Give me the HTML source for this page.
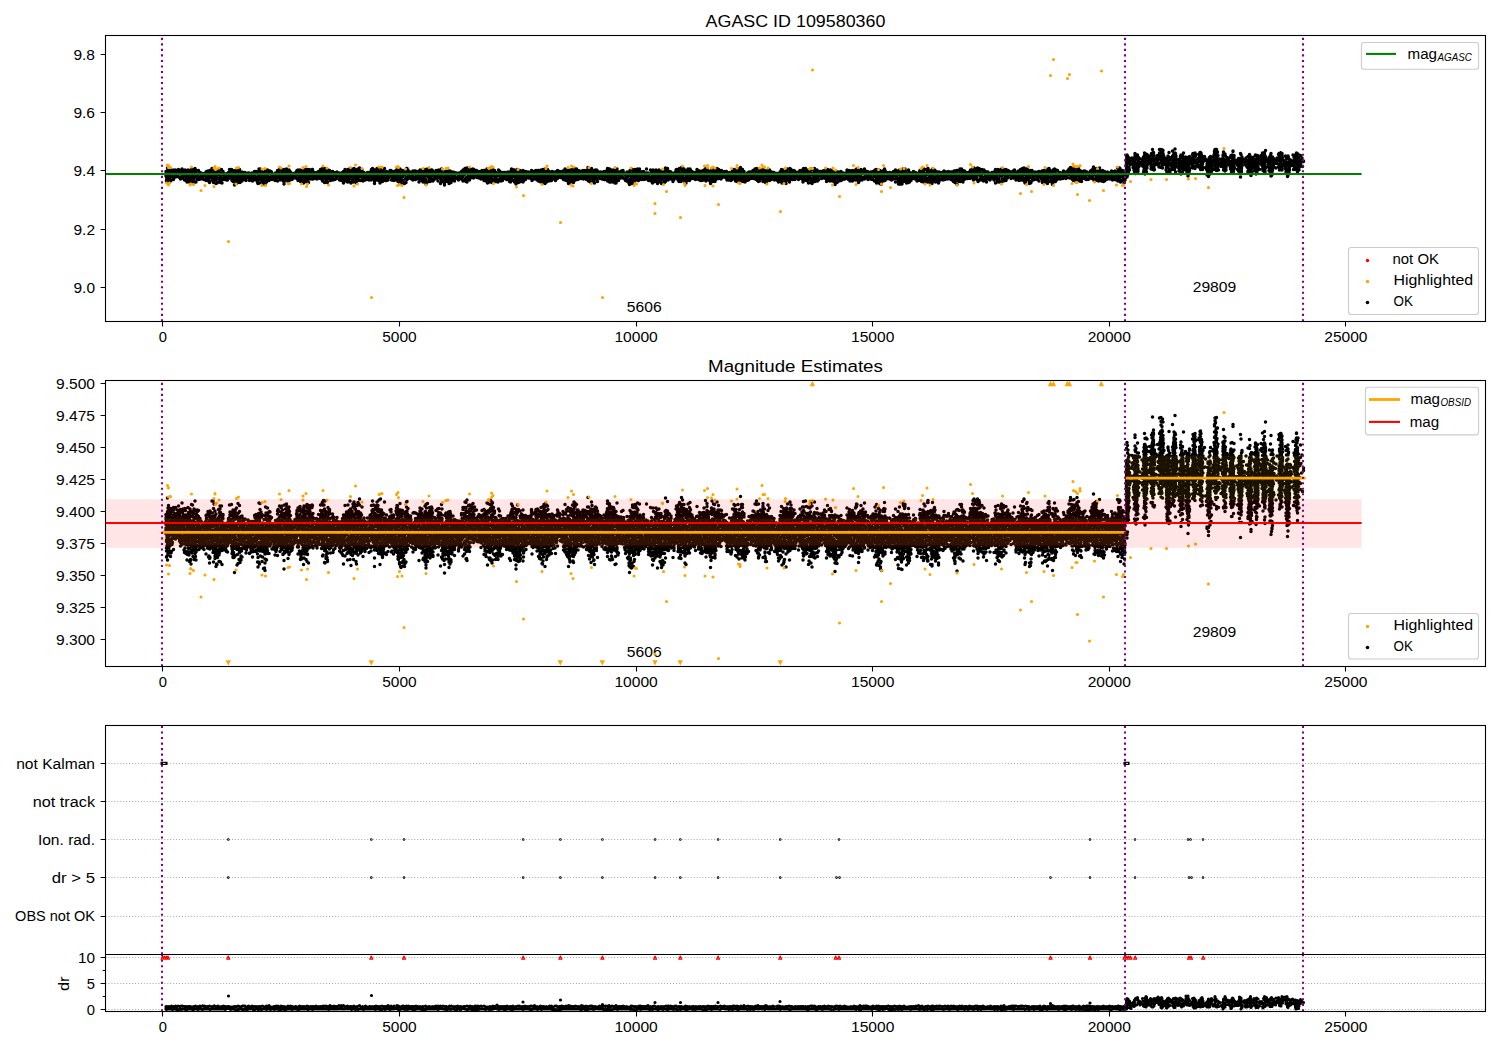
<!DOCTYPE html><html><head><meta charset="utf-8"><style>html,body{margin:0;padding:0;background:#fff;overflow:hidden}svg{display:block}</style></head><body><svg width="1500" height="1050" viewBox="0 0 1500 1050" font-family="Liberation Sans, sans-serif"><rect width="1500" height="1050" fill="#fff"/>
<text x="795.5" y="27" font-size="16.67" text-anchor="middle" textLength="179.9" lengthAdjust="spacingAndGlyphs">AGASC ID 109580360</text>
<text x="644.2" y="311.8" font-size="13.89" text-anchor="middle" textLength="34.8" lengthAdjust="spacingAndGlyphs">5606</text>
<text x="1214.5" y="291.7" font-size="13.89" text-anchor="middle" textLength="43.6" lengthAdjust="spacingAndGlyphs">29809</text>
<clipPath id="c1"><rect x="105.5" y="35.4" width="1380" height="286"/></clipPath>
<g clip-path="url(#c1)">
<path transform="scale(.5)" d="M332 343h0m0 4h0m0 3h0m0 2h0m1 3h0m0 5h0m0 2h0m1-15h0m1-11h0m0 6h0m0 9h0m0 13h0m1-24h0m1-1h0m0 5h0m1 9h0m0 5h0m2-2h0m1-13h0m0 4h0m0 3h0m0 12h0m1-22h0m0 21h0m3-13h0m0 6h0m1-13h0m1-1h0m0 3h0m0 16h0m3-10h0m1-9h0m0 14h0m2-8h0m0 3h0m2-8h0m0 12h0m2-14h0m1 6h0m0 3h0m1 7h0m2-14h0m0 17h0m1-11h0m1 10h0m1-19h0m0 13h0m1-9h0m0 14h0m1-15h0m2 5h0m1 6h0m0 8h0m1-20h0m1 1h0m1 9h0m0 7h0m0 4h0m1-17h0m1 9h0m0 11h0m1-8h0m1-16h0m1 5h0m1 2h0m0 14h0m1-11h0m0 14h0m1-23h0m1 13h0m0 3h0m1-10h0m0 19h0m1-27h0m0 5h0m0 15h0m1-7h0m0 3h0m1-16h0m0 8h0m1 15h0m1-20h0m0 16h0m1-5h0m0 11h0m2-27h0m0 10h0m0 17h0m1-21h0m0 4h0m1 4h0m0 3h0m0 10h0m2-23h0m0 18h0m2-10h0m1-8h0m0 6h0m1 8h0m0 4h0m2-14h0m1 13h0m1-12h0m0 4h0m2 3h0m1 5h0m1-11h0m0 11h0m1-7h0m0 7h0m1 1h0m2-12h0m0 4h0m2-7h0m0 12h0m0 5h0m1-18h0m2 5h0m1-6h0m0 12h0m1 3h0m0 5h0m1-20h0m1 3h0m0 5h0m0 15h0m1-24h0m0 22h0m2-17h0m0 9h0m2-18h0m0 14h0m0 7h0m1-16h0m1-5h0m0 8h0m0 15h0m1-7h0m0 12h0m1-27h0m1 10h0m0 10h0m1-16h0m2 1h0m0 5h0m0 3h0m0 4h0m0 6h0m0 6h0m2-14h0m0 13h0m3-25h0m0 4h0m0 12h0m1-8h0m0 15h0m1-22h0m0 17h0m0 5h0m1-25h0m1 13h0m0 13h0m1-18h0m1-8h0m0 17h0m1 3h0m0 7h0m2-23h0m0 1h0m0 5h0m0 10h0m2-5h0m2 5h0m1-11h0m0 11h0m1-11h0m1 0h0m0 12h0m1-6h0m1 6h0m1-14h0m1-1h0m0 5h0m2-11h0m0 17h0m1-13h0m0 7h0m1-2h0m2-9h0m0 18h0m1-3h0m0 5h0m0 2h0m1-11h0m1-9h0m0 2h0m0 20h0m1-21h0m1 2h0m0 11h0m0 4h0m0 4h0m1-15h0m0 4h0m0 18h0m1-8h0m1-21h0m1 14h0m1-15h0m0 4h0m1 15h0m0 7h0m1-17h0m0 8h0m0 4h0m1-23h0m0 27h0m1-12h0m2-14h0m0 3h0m0 2h0m0 16h0m1-10h0m0 15h0m1-10h0m0 4h0m1-8h0m2-7h0m0 18h0m2-15h0m0 6h0m1 5h0m1-13h0m1 14h0m1-14h0m0 6h0m2 4h0m0 6h0m2-5h0m1-6h0m1-4h0m1 5h0m1-5h0m1 15h0m1-8h0m0 4h0m2-8h0m2-3h0m0 12h0m1-6h0m0 10h0m1-16h0m0 10h0m1 4h0m1-7h0m1-10h0m0 7h0m1 7h0m2-14h0m0 17h0m1-13h0m1 8h0m0 2h0m1 8h0m1-14h0m0 16h0m1-24h0m1-5h0m0 21h0m1-14h0m0 8h0m0 13h0m1-28h0m1 16h0m1-11h0m0 7h0m1 10h0m1-17h0m0 9h0m0 7h0m0 5h0m1-9h0m1-8h0m1 21h0m1-10h0m2-14h0m0 6h0m0 13h0m0 6h0m1-29h0m0 14h0m2 10h0m1-6h0m1-18h0m0 3h0m0 4h0m0 6h0m3-5h0m0 7h0m0 6h0m1-19h0m1 0h0m0 13h0m3-11h0m1 7h0m0 1h0m0 7h0m1-4h0m1-7h0m3 8h0m1 5h0m1-15h0m0 6h0m2 7h0m1-11h0m0 7h0m1-14h0m0 21h0m1-21h0m1 6h0m0 2h0m1-7h0m0 13h0m1-16h0m1 10h0m0 4h0m0 7h0m1-14h0m3-7h0m0 18h0m1-16h0m1 4h0m0 6h0m0 4h0m0 6h0m1-14h0m1 17h0m0 4h0m1-29h0m0 18h0m2-12h0m0 7h0m1-3h0m0 11h0m1-22h0m1 18h0m1-13h0m1 9h0m0 11h0m1-17h0m1-6h0m0 21h0m1-19h0m0 7h0m0 9h0m1-12h0m0 6h0m0 8h0m1-16h0m1 8h0m0 6h0m1 1h0m1 0h0m1-7h0m0 6h0m1-11h0m1 9h0m1-9h0m2-1h0m1 5h0m0 5h0m1-5h0m1-8h0m0 2h0m1-4h0m0 1h0m1 7h0m0 9h0m1-18h0m0 17h0m0 4h0m2-9h0m1-9h0m0 17h0m1-20h0m0 6h0m1 17h0m1-22h0m0 15h0m1-4h0m0 11h0m1-18h0m1 15h0m1-13h0m0 9h0m1-16h0m0 11h0m0 15h0m1-27h0m0 2h0m1 20h0m1-16h0m0 5h0m0 1h0m0 4h0m2-16h0m0 24h0m1-5h0m1-19h0m0 6h0m0 20h0m1-4h0m1-11h0m0 3h0m1 12h0m1-26h0m0 19h0m1-14h0m1-1h0m0 9h0m1-6h0m0 12h0m3-19h0m0 19h0m1-19h0m0 10h0m1-6h0m0 10h0m0 5h0m2-13h0m3 7h0m0 5h0m2-12h0m0 3h0m1 10h0m2-2h0m1-13h0m0 6h0m0 3h0m3 5h0m1-18h0m0 2h0m0 11h0m1-7h0m1 13h0m1-20h0m0 9h0m0 5h0m1-15h0m0 25h0m1-5h0m0 5h0m1-25h0m0 6h0m0 2h0m2 8h0m0 12h0m1-28h0m0 5h0m0 9h0m0 14h0m1-19h0m1 12h0m1 3h0m1-19h0m0 14h0m1-5h0m0 13h0m0 1h0m1-25h0m0 12h0m1-6h0m0 11h0m2-16h0m1 6h0m0 2h0m0 7h0m1 5h0m2-12h0m0 4h0m1-6h0m0 10h0m1-14h0m1 12h0m0 5h0m1-8h0m0 7h0m1-14h0m2 4h0m0 10h0m2-14h0m1 9h0m0 3h0m1-13h0m0 12h0m1-10h0m0 4h0m3 2h0m1-6h0m0 14h0m2-3h0m0 3h0m1-9h0m1 10h0m2-16h0m0 6h0m0 10h0m1-6h0m1-12h0m0 23h0m2-18h0m0 8h0m1-17h0m0 12h0m0 11h0m1-17h0m0 14h0m2-9h0m2-6h0m0 6h0m0 4h0m0 10h0m1-25h0m0 20h0m2-18h0m1 7h0m1-11h0m0 14h0m0 6h0m0 7h0m1-20h0m1 5h0m0 4h0m0 13h0m2-25h0m1 12h0m0 9h0m1-24h0m0 8h0m0 13h0m1-7h0m0 12h0m1-27h0m0 21h0m2-19h0m0 2h0m0 5h0m0 2h0m2-2h0m0 8h0m0 10h0m1-3h0m0 5h0m1-23h0m0 9h0m0 5h0m2-19h0m0 20h0m0 3h0m1-10h0m1-7h0m1-8h0m0 3h0m0 7h0m0 8h0m2 7h0m1-18h0m1 6h0m0 3h0m1-12h0m1 7h0m0 10h0m1 5h0m1-12h0m1-5h0m0 11h0m2 4h0m2-10h0m0 4h0m1-5h0m0 10h0m2-14h0m2 6h0m0 5h0m1 4h0m1-11h0m1-5h0m2 16h0m1-21h0m0 15h0m1-6h0m1-11h0m0 5h0m0 16h0m1-13h0m1-6h0m1 14h0m1-2h0m0 8h0m0 4h0m0 4h0m2-27h0m0 4h0m0 9h0m3-16h0m0 20h0m0 3h0m1-13h0m1-5h0m0 10h0m1 9h0m1-25h0m0 17h0m1-3h0m0 7h0m1-12h0m0 15h0m0 6h0m1-30h0m0 6h0m1 6h0m1-7h0m0 12h0m1 4h0m1 5h0m0 1h0m1-20h0m1 2h0m0 7h0m0 9h0m1-18h0m1-6h0m0 18h0m1 2h0m1 4h0m1-12h0m1-6h0m0 18h0m1-15h0m0 4h0m1 5h0m1 5h0m2-10h0m0 5h0m1-11h0m1-3h0m1 11h0m1-11h0m0 5h0m1 14h0m1-11h0m1 8h0m1-5h0m1-9h0m0 18h0m1-13h0m2 6h0m0 5h0m1 1h0m1-19h0m0 6h0m0 5h0m1-12h0m1-1h0m0 21h0m1-21h0m0 11h0m0 5h0m1-8h0m0 16h0m1-17h0m1-4h0m0 11h0m1 6h0m0 6h0m1-27h0m0 14h0m1 7h0m0 3h0m0 5h0m1 0h0m1-23h0m0 4h0m0 7h0m2-14h0m0 6h0m0 7h0m1-4h0m0 11h0m0 6h0m3 0h0m1-23h0m0 5h0m1-7h0m0 16h0m1-4h0m0 11h0m1-28h0m1 0h0m0 8h0m0 14h0m1-15h0m1-4h0m1 9h0m0 3h0m0 5h0m4-13h0m0 6h0m0 2h0m2 6h0m2-10h0m0 5h0m1-11h0m0 18h0m1-5h0m1-13h0m0 12h0m2-7h0m0 7h0m1-12h0m0 17h0m2-10h0m0 9h0m2-15h0m0 14h0m1-4h0m2-9h0m0 20h0m1-6h0m1-18h0m0 8h0m0 4h0m2 0h0m0 6h0m1-16h0m1-2h0m0 21h0m1-13h0m1 3h0m0 5h0m0 4h0m0 4h0m2-19h0m1 11h0m1-17h0m0 4h0m0 21h0m1-12h0m0 7h0m1-20h0m0 10h0m0 19h0m1-25h0m2-5h0m0 26h0m1-16h0m0 6h0m2-8h0m0 14h0m1-20h0m0 2h0m1 8h0m0 13h0m1-7h0m1 6h0m1-22h0m0 6h0m1-6h0m1 2h0m0 9h0m1 7h0m0 4h0m2-12h0m1-6h0m1 10h0m0 4h0m2-17h0m0 7h0m2-2h0m0 10h0m1-15h0m0 9h0m0 2h0m1 10h0m2-22h0m1 5h0m0 10h0m2-6h0m0 8h0m0 10h0m2-29h0m0 22h0m0 3h0m1-22h0m0 2h0m0 3h0m0 5h0m1 12h0m1-9h0m3-7h0m0 10h0m0 9h0m0 4h0m1-10h0m1-17h0m0 7h0m0 13h0m1-21h0m0 10h0m1-5h0m0 9h0m1-12h0m1 8h0m0 8h0m1 3h0m1-21h0m0 11h0m1 10h0m0 4h0m1-9h0m1-16h0m0 5h0m0 19h0m1-23h0m0 2h0m0 11h0m1 8h0m0 1h0m1-15h0m1 9h0m0 2h0m2-17h0m0 4h0m1 5h0m1 2h0m1-10h0m0 5h0m0 12h0m2-7h0m0 2h0m2-11h0m1 11h0m1-1h0m1-6h0m1 10h0m1-14h0m0 12h0m1-12h0m0 9h0m1-6h0m1 4h0m1-2h0m1-8h0m0 15h0m2-12h0m1-6h0m0 13h0m0 9h0m1-15h0m2-3h0m0 5h0m0 12h0m1-24h0m0 21h0m1-21h0m1 26h0m1-21h0m0 5h0m0 8h0m1-19h0m0 28h0m1-10h0m0 5h0m1-11h0m2-6h0m1-3h0m0 9h0m0 8h0m0 4h0m1-8h0m1 4h0m2-17h0m0 6h0m1 6h0m1-8h0m0 4h0m1-9h0m1 18h0m2-16h0m0 10h0m1-5h0m0 7h0m2 2h0m1-13h0m1 5h0m0 7h0m0 2h0m3-2h0m1-10h0m0 5h0m0 8h0m3-1h0m1 3h0m1-14h0m0 6h0m1-9h0m1 12h0m1-5h0m1 9h0m1-16h0m0 11h0m0 9h0m1-20h0m0 5h0m1 10h0m1 5h0m1 1h0m1-20h0m0 6h0m1-10h0m0 13h0m0 7h0m1 8h0m1-28h0m0 17h0m1-14h0m0 4h0m1 15h0m1 4h0m1-16h0m0 4h0m1-15h0m1 21h0m0 6h0m1-24h0m0 3h0m0 15h0m1-21h0m0 12h0m0 16h0m1-27h0m0 14h0m1-9h0m1-3h0m0 21h0m1-12h0m0 3h0m1-11h0m0 17h0m2-12h0m0 17h0m1-18h0m0 11h0m1 5h0m0 2h0m1-13h0m0 2h0m2 12h0m1-24h0m0 7h0m1 5h0m0 7h0m1-17h0m2 2h0m0 12h0m1 6h0m1-13h0m1 6h0m1 6h0m1-16h0m1 7h0m1-7h0m0 12h0m1-12h0m0 6h0m3-6h0m1 8h0m0 6h0m1 0h0m1-11h0m1-4h0m0 13h0m2-3h0m1-6h0m0 15h0m2 1h0m1-22h0m0 16h0m1-20h0m0 14h0m1 3h0m1-16h0m0 6h0m0 5h0m1 11h0m2-16h0m1-5h0m0 14h0m0 10h0m2-14h0m0 8h0m1-17h0m0 2h0m0 23h0m0 2h0m1-25h0m0 12h0m0 5h0m2-21h0m1 7h0m0 4h0m0 6h0m0 8h0m1 1h0m1-24h0m0 6h0m0 11h0m1-6h0m0 12h0m1-23h0m1 22h0m1-8h0m0 3h0m2-12h0m0 6h0m2-11h0m0 23h0m1-21h0m0 17h0m0 2h0m1-7h0m1-4h0m2-8h0m0 3h0m0 4h0m0 9h0m3-15h0m0 9h0m1-6h0m1-3h0m1 1h0m0 11h0m1-5h0m0 5h0m2-7h0m0 7h0m1-3h0m1-10h0m1-2h0m1 20h0m1-11h0m0 8h0m1-15h0m0 8h0m0 7h0m1-10h0m1 6h0m0 3h0m1 1h0m1-16h0m1 5h0m1-6h0m0 11h0m1-8h0m1 7h0m0 4h0m0 5h0m1-19h0m2 0h0m0 6h0m0 15h0m2-13h0m0 9h0m0 5h0m1-11h0m0 11h0m2-23h0m0 5h0m0 7h0m1-7h0m0 13h0m1 7h0m1-14h0m0 15h0m1-27h0m0 7h0m0 11h0m1 6h0m1-24h0m2 5h0m0 6h0m0 5h0m0 12h0m1-29h0m1 8h0m0 14h0m1-21h0m0 13h0m0 12h0m2-25h0m0 15h0m1-13h0m0 7h0m0 12h0m1-7h0m1-10h0m0 18h0m0 1h0m2-6h0m1-6h0m0 11h0m1-9h0m0 9h0m1-15h0m0 15h0m1-18h0m0 4h0m2 7h0m0 4h0m1-11h0m1-3h0m0 5h0m1 3h0m1 3h0m1 6h0m1-7h0m1-11h0m0 4h0m1 0h0m1-6h0m0 16h0m2-5h0m2-9h0m0 2h0m1-2h0m1 12h0m1-4h0m1-3h0m2 3h0m0 5h0m1-14h0m1 17h0m1-11h0m1-2h0m0 9h0m1-17h0m0 22h0m1-11h0m2-8h0m0 6h0m0 2h0m0 12h0m1-6h0m1-7h0m0 14h0m1-22h0m0 4h0m1 10h0m0 5h0m0 3h0m0 5h0m2-17h0m1-7h0m0 21h0m0 1h0m1-25h0m0 7h0m0 9h0m1 1h0m0 2h0m2-8h0m1-12h0m0 8h0m1 15h0m0 2h0m1-21h0m0 1h0m0 14h0m0 7h0m1-28h0m0 18h0m1 6h0m1-23h0m0 11h0m1-5h0m0 8h0m0 8h0m2-22h0m0 12h0m1 7h0m1-12h0m1-4h0m0 14h0m0 4h0m2-8h0m1-9h0m0 5h0m1 10h0m2-5h0m1-6h0m0 11h0m1-15h0m2-1h0m0 13h0m1-4h0m0 8h0m2-12h0m1-5h0m0 9h0m0 5h0m2-12h0m1 16h0m2-19h0m0 8h0m0 6h0m0 1h0m1-20h0m0 11h0m0 4h0m1-10h0m0 22h0m2-8h0m0 9h0m1-22h0m0 17h0m2-12h0m0 3h0m0 16h0m1-28h0m0 21h0m1-14h0m0 11h0m2-6h0m1-3h0m0 14h0m0 4h0m1-23h0m0 13h0m0 7h0m1 5h0m1-11h0m1-15h0m0 4h0m0 8h0m1-4h0m1-8h0m0 18h0m2-16h0m0 5h0m0 16h0m1-14h0m1 6h0m2 2h0m1-13h0m2 0h0m0 4h0m0 3h0m2-6h0m0 13h0m1-5h0m1-3h0m1-3h0m1-4h0m0 16h0m2 0h0m1-11h0m0 6h0m0 1h0m2-13h0m1 0h0m0 5h0m0 7h0m1-17h0m0 25h0m1-24h0m1 19h0m1-19h0m0 12h0m1-12h0m0 6h0m0 20h0m2-14h0m0 4h0m0 5h0m0 5h0m2-24h0m0 7h0m1 12h0m1-17h0m0 22h0m1-9h0m1-15h0m0 6h0m0 4h0m1-10h0m0 19h0m2 7h0m1-4h0m1-20h0m0 11h0m0 3h0m0 10h0m1-19h0m1-9h0m0 6h0m0 5h0m2-4h0m0 16h0m1-17h0m0 12h0m0 5h0m1-15h0m1 7h0m1-9h0m0 12h0m2-9h0m0 9h0m1-14h0m1 7h0m0 4h0m2-12h0m0 15h0m1-11h0m3 4h0m0 6h0m0 4h0m1-10h0m0 12h0m2-10h0m0 4h0m1-11h0m1 19h0m1-10h0m0 7h0m1-9h0m1-5h0m0 19h0m0 1h0m1 3h0m1-28h0m0 18h0m2-13h0m0 2h0m0 5h0m0 6h0m0 1h0m1 7h0m1-2h0m1-26h0m1 1h0m0 15h0m1-13h0m0 25h0m1-21h0m0 4h0m0 9h0m0 3h0m1 1h0m1-24h0m1 14h0m2-10h0m0 4h0m0 6h0m1 5h0m1-20h0m0 3h0m0 19h0m1 1h0m1 0h0m1-16h0m0 6h0m1-13h0m0 16h0m1-11h0m0 16h0m2-10h0m1-5h0m0 15h0m1-15h0m0 12h0m2-8h0m0 4h0m1-9h0m1 16h0m2-8h0m1 3h0m1-8h0m0 12h0m1-20h0m1 8h0m1 6h0m1-6h0m1 12h0m0 3h0m1-10h0m0 3h0m3-14h0m0 16h0m1 6h0m1-18h0m0 2h0m2 6h0m0 3h0m0 6h0m0 5h0m1-26h0m0 8h0m1-6h0m0 22h0m1-8h0m2-6h0m0 13h0m1-18h0m0 13h0m1-18h0m2 1h0m0 10h0m0 3h0m0 7h0m1 6h0m1-21h0m0 9h0m0 7h0m1-13h0m1-9h0m2 13h0m0 4h0m0 7h0m1-19h0m0 17h0m1-19h0m1 5h0m0 19h0m1-17h0m0 9h0m1-15h0m0 11h0m1 11h0m1-20h0m2 6h0m0 3h0m0 6h0m0 4h0m1-23h0m0 5h0m1-11h0m0 27h0m1-22h0m2 12h0m0 5h0m1-21h0m0 11h0m0 8h0m1-14h0m0 18h0m1-1h0m1-7h0m1-9h0m0 4h0m2 5h0m0 2h0m1-10h0m0 14h0m3-8h0m0 8h0m1 5h0m1-16h0m1 7h0m0 5h0m1-8h0m1-6h0m1 11h0m1-16h0m1-1h0m1 6h0m0 6h0m1-12h0m1 17h0m0 4h0m1-21h0m0 20h0m1-15h0m0 2h0m0 7h0m0 10h0m1-26h0m0 13h0m3 5h0m0 3h0m0 5h0m1-28h0m0 4h0m1 6h0m1-9h0m0 14h0m1 2h0m0 8h0m1-16h0m0 5h0m1-11h0m0 19h0m2 5h0m0 3h0m1-24h0m0 6h0m1 9h0m0 10h0m1-25h0m0 12h0m1-4h0m0 4h0m0 8h0m1-18h0m0 6h0m1-11h0m0 22h0m2-4h0m1 5h0m1-23h0m0 7h0m0 6h0m0 2h0m1-12h0m0 17h0m2-9h0m1-6h0m0 1h0m1 9h0m1-4h0m0 8h0m1 0h0m2-12h0m1 6h0m1-1h0m0 9h0m1-4h0m1-11h0m1-5h0m2 7h0m1 7h0m0 6h0m1-9h0m1-8h0m0 17h0m2-13h0m0 3h0m0 12h0m1-7h0m2-12h0m0 10h0m0 9h0m1-1h0m1-12h0m0 7h0m1 5h0m1-20h0m1 15h0m1-12h0m0 8h0m1-14h0m0 8h0m1 17h0m1-14h0m0 7h0m0 5h0m1-22h0m0 13h0m2-9h0m1 0h0m0 18h0m1-17h0m0 10h0m0 7h0m1-12h0m1 8h0m0 6h0m1 5h0m1-3h0m1-24h0m0 1h0m1-4h0m0 6h0m0 5h0m0 3h0m0 7h0m1-4h0m0 9h0m2-25h0m1 3h0m0 10h0m1-12h0m0 6h0m0 13h0m1 5h0m1-13h0m0 5h0m1-12h0m0 16h0m2-22h0m0 8h0m0 5h0m0 3h0m3-14h0m0 18h0m1-12h0m1 4h0m0 5h0m1-13h0m2 4h0m0 13h0m1-17h0m0 9h0m1 5h0m3-11h0m1 5h0m0 5h0m1-11h0m0 1h0m2 11h0m1-7h0m0 4h0m1-9h0m0 14h0m1-1h0m0 4h0m2-9h0m1 9h0m1-12h0m1-3h0m0 4h0m0 11h0m1-6h0m2 7h0m2-16h0m0 8h0m0 6h0m1-18h0m0 8h0m2 4h0m1-14h0m0 7h0m0 11h0m2-18h0m0 3h0m1 8h0m0 12h0m1-20h0m1 6h0m0 8h0m1 7h0m1-4h0m1-21h0m0 15h0m2-9h0m0 19h0m1-22h0m1 9h0m0 6h0m1-21h0m0 24h0m1-14h0m1-7h0m1 14h0m0 11h0m1-24h0m1 10h0m0 8h0m1-14h0m0 20h0m1-20h0m0 5h0m0 12h0m2-6h0m0 10h0m1-2h0m1-6h0m1-8h0m1 11h0m0 2h0m1-15h0m1 5h0m1 4h0m0 5h0m1-16h0m3 0h0m0 5h0m1 8h0m1-5h0m2 4h0m1-15h0m0 6h0m1 5h0m0 5h0m1-9h0m2-10h0m1 15h0m0 3h0m1-13h0m0 16h0m1-22h0m1 10h0m1 6h0m0 8h0m2-23h0m0 10h0m0 15h0m1-19h0m0 7h0m0 5h0m1 6h0m2-21h0m0 17h0m2-13h0m0 5h0m0 3h0m3-15h0m0 2h0m0 7h0m0 11h0m0 5h0m1-9h0m1 2h0m1-15h0m1 2h0m0 7h0m0 10h0m1-13h0m0 18h0m2-22h0m0 9h0m0 7h0m0 6h0m2-17h0m1-9h0m0 15h0m1 3h0m0 3h0m1-16h0m1-4h0m0 10h0m0 11h0m2-8h0m2-9h0m0 6h0m0 8h0m0 1h0m1-3h0m2-8h0m1-3h0m0 7h0m1-7h0m1 9h0m0 6h0m3-13h0m0 12h0m1-12h0m0 3h0m1 4h0m1-7h0m0 14h0m2 3h0m1-8h0m1-6h0m0 13h0m1-19h0m1 11h0m0 5h0m1-18h0m1-3h0m0 6h0m0 17h0m1 4h0m1-15h0m1-2h0m0 8h0m1-17h0m0 25h0m1-24h0m0 4h0m0 13h0m0 7h0m2-13h0m2-4h0m0 13h0m0 6h0m1-27h0m0 10h0m0 6h0m1-14h0m1-4h0m0 7h0m1 15h0m1-8h0m1 2h0m1-7h0m0 17h0m1-27h0m0 22h0m1-18h0m0 4h0m0 6h0m1-12h0m0 17h0m3-14h0m0 17h0m1-11h0m1-5h0m0 9h0m0 6h0m1-17h0m1 7h0m1-5h0m0 16h0m2-3h0m1-4h0m1-4h0m1-3h0m2-1h0m0 9h0m0 6h0m2-9h0m1-9h0m0 14h0m1-4h0m1-6h0m0 12h0m2-15h0m1-2h0m1 14h0m0 7h0m0 3h0m1-27h0m0 15h0m0 3h0m1-15h0m0 6h0m0 3h0m2-1h0m1-11h0m0 20h0m1-12h0m0 16h0m1-21h0m0 3h0m0 5h0m0 4h0m1 9h0m1-8h0m1 5h0m1-18h0m0 26h0m1-22h0m1-4h0m0 8h0m0 6h0m0 5h0m1-15h0m1 15h0m1-21h0m0 27h0m2-26h0m0 11h0m0 7h0m0 10h0m2-21h0m0 4h0m0 11h0m2-9h0m0 11h0m1-26h0m0 5h0m0 16h0m1-5h0m0 10h0m1-18h0m3-5h0m0 11h0m0 6h0m1 5h0m1-19h0m0 14h0m1-9h0m0 5h0m0 7h0m3-17h0m1 0h0m0 8h0m2 6h0m1-9h0m2-6h0m0 10h0m2-1h0m0 5h0m1-15h0m1 6h0m1 10h0m1-3h0m1 9h0m1-18h0m0 4h0m0 4h0m1-14h0m1 7h0m0 15h0m1-4h0m1-16h0m2 12h0m0 9h0m1-22h0m0 7h0m0 3h0m1 6h0m1-15h0m0 13h0m2 8h0m1-18h0m1 5h0m0 13h0m1-10h0m0 5h0m1-13h0m0 18h0m1-19h0m0 22h0m0 4h0m1-21h0m1-4h0m0 13h0m1-4h0m1-9h0m0 21h0m2-9h0m0 6h0m1-18h0m0 5h0m1 13h0m1-9h0m1 3h0m2-13h0m0 6h0m0 12h0m2-1h0m1-7h0m1 5h0m1-12h0m0 12h0m2-2h0m0 2h0m1-9h0m0 9h0m2-1h0m1-11h0m0 5h0m1-11h0m0 3h0m2 11h0m1-8h0m0 13h0m2-18h0m0 10h0m1 11h0m1-16h0m0 2h0m1 8h0m1-14h0m2-1h0m0 14h0m0 7h0m1-18h0m0 8h0m1-3h0m1 4h0m1 6h0m2-19h0m0 5h0m0 3h0m0 12h0m1 0h0m1-22h0m0 15h0m1-15h0m1 19h0m1-13h0m1 6h0m0 15h0m1-23h0m0 21h0m2-17h0m0 8h0m0 6h0m1-18h0m0 8h0m1-11h0m1 15h0m1-12h0m0 18h0m1-4h0m1-15h0m0 2h0m0 4h0m2 1h0m0 7h0m1-17h0m0 20h0m1-10h0m1-6h0m0 9h0m2-3h0m1 8h0m1-13h0m1 10h0m0 6h0m1-14h0m0 4h0m4-5h0m0 8h0m0 5h0m0 1h0m2-14h0m0 4h0m0 7h0m2 4h0m1-16h0m0 15h0m2-8h0m0 3h0m1-8h0m0 17h0m1-22h0m2 11h0m0 2h0m1-14h0m0 19h0m0 8h0m1-22h0m0 18h0m0 3h0m1-15h0m1 5h0m1-15h0m1 7h0m0 17h0m0 2h0m1-17h0m0 11h0m1-19h0m0 12h0m0 5h0m1 10h0m1-24h0m0 6h0m0 4h0m0 10h0m1 4h0m2-8h0m1-18h0m0 8h0m0 12h0m1-21h0m0 14h0m1-8h0m1-9h0m1 3h0m0 4h0m0 15h0m0 1h0m2-9h0m1 6h0m1-13h0m0 5h0m0 1h0m2 6h0m1-8h0m2-4h0m0 8h0m0 5h0m1-13h0m0 10h0m3-9h0m0 5h0m0 9h0m1-14h0m1 5h0m0 3h0m1-1h0m1-10h0m0 15h0m3-12h0m1-6h0m0 5h0m0 6h0m0 13h0m1-7h0m1-2h0m2-7h0m0 10h0m1-16h0m0 16h0m1 5h0m0 5h0m1-18h0m1-10h0m0 4h0m1 10h0m0 7h0m1-14h0m0 9h0m1 12h0m1-18h0m0 9h0m0 6h0m1-22h0m0 25h0m2-30h0m0 7h0m0 12h0m0 6h0m1-11h0m0 11h0m2-24h0m1-1h0m0 12h0m1-7h0m0 11h0m0 4h0m1-1h0m1 5h0m0 4h0m1-17h0m2 3h0m1-12h0m0 3h0m0 6h0m0 10h0m0 6h0m1-9h0m1-11h0m0 19h0m1-12h0m2-6h0m0 15h0m1-4h0m1-3h0m1-5h0m2-6h0m0 14h0m1-8h0m2 4h0m1-8h0m0 13h0m2-8h0m1 7h0m0 5h0m1-15h0m0 1h0m1 5h0m1 8h0m2-18h0m1-2h0m0 4h0m0 6h0m1 6h0m0 4h0m2-13h0m0 6h0m0 9h0m3-22h0m0 3h0m0 14h0m1-10h0m0 16h0m1-26h0m0 7h0m0 13h0m1-6h0m1-13h0m2 8h0m0 11h0m0 5h0m1-7h0m1-7h0m1-11h0m0 5h0m0 3h0m0 18h0m1-27h0m0 20h0m0 5h0m0 2h0m2-22h0m0 13h0m1-10h0m1 6h0m0 8h0m1 7h0m1-25h0m1 6h0m0 16h0m1-9h0m0 12h0m0 1h0m1-29h0m1 4h0m0 8h0m0 8h0m1 4h0m2-22h0m0 5h0m0 9h0m1-13h0m1 6h0m0 10h0m0 7h0m3-12h0m0 8h0m1-16h0m0 7h0m1-7h0m1 21h0m0 1h0m1-22h0m0 3h0m0 9h0m0 7h0m1-10h0m0 6h0m1-8h0m1-6h0m2 14h0m2-13h0m0 5h0m0 3h0m0 5h0m1-15h0m0 16h0m1-4h0m0 3h0m1-17h0m2 2h0m0 6h0m0 9h0m2-4h0m1-11h0m0 7h0m2-3h0m0 10h0m1-14h0m1-1h0m0 1h0m1 8h0m1-2h0m0 7h0m3-13h0m0 15h0m1-15h0m0 6h0m0 3h0m1 7h0m2-3h0m1 6h0m1-21h0m0 5h0m0 4h0m1-9h0m0 20h0m1 3h0m1-18h0m0 15h0m1-9h0m0 3h0m1-15h0m0 5h0m1 15h0m0 8h0m1-28h0m1 15h0m1-8h0m0 4h0m1-11h0m0 16h0m0 6h0m1-14h0m1-11h0m0 17h0m1-11h0m0 19h0m2-25h0m0 10h0m1 11h0m1-6h0m1-12h0m0 3h0m0 20h0m1-14h0m1 9h0m1-17h0m0 5h0m1 8h0m0 3h0m3-13h0m0 4h0m0 3h0m0 5h0m2 0h0m1-1h0m1-11h0m2 6h0m1-8h0m0 6h0m0 8h0m1-17h0m1 16h0m1-11h0m2-7h0m0 13h0m1-14h0m0 5h0m1 12h0m0 6h0m1-24h0m0 11h0m0 3h0m0 7h0m1-20h0m2 3h0m0 5h0m1 7h0m0 6h0m2-9h0m0 7h0m0 3h0m1-23h0m0 3h0m1 22h0m0 2h0m1-19h0m1-7h0m0 13h0m1-12h0m1 7h0m0 15h0m1-21h0m0 14h0m0 5h0m1-2h0m1-10h0m0 2h0m0 3h0m1-12h0m0 21h0m1-14h0m2 13h0m0 3h0m1-22h0m0 15h0m1-7h0m2-5h0m0 7h0m1 9h0m1 5h0m1-9h0m1-11h0m0 2h0m1-2h0m0 8h0m1 6h0m1-7h0m0 4h0m2 5h0m1-13h0m0 5h0m3-7h0m0 11h0m2-11h0m0 5h0m1 5h0m1 5h0m1-12h0m1-6h0m0 10h0m1-13h0m0 27h0m1-9h0m1-5h0m1-8h0m1 4h0m0 14h0m1-23h0m0 17h0m0 8h0m1-21h0m1 14h0m0 3h0m1 4h0m1-16h0m0 3h0m2-12h0m0 6h0m1-7h0m0 14h0m1 11h0m1-14h0m0 9h0m1-16h0m1-3h0m0 23h0m1-16h0m1 11h0m1-13h0m0 8h0m0 2h0m2-15h0m0 12h0m0 10h0m2-15h0m1 10h0m1-15h0m0 13h0m1-6h0m2-5h0m0 2h0m2 5h0m1 7h0m1-5h0m1-8h0m1 4h0m1-6h0m1 14h0m2-16h0m0 11h0m1-5h0m2 10h0m0 3h0m0 1h0m2-16h0m0 6h0m0 5h0m2 0h0m1-13h0m1 7h0m0 12h0m1-16h0m0 10h0m2-16h0m0 20h0m1-12h0m0 7h0m0 6h0m2-19h0m1-4h0m0 11h0m0 1h0m0 6h0m0 5h0m2-21h0m1-3h0m0 8h0m1 5h0m0 8h0m0 6h0m1-13h0m0 16h0m1-1h0m1-22h0m1-5h0m0 17h0m0 5h0m1-22h0m1 13h0m1-11h0m0 1h0m0 5h0m1 14h0m1-10h0m1 3h0m0 3h0m0 9h0m0 2h0m1-21h0m1-5h0m0 25h0m1-3h0m0 2h0m1-17h0m1-7h0m0 8h0m0 6h0m1 5h0m1 0h0m1-2h0m1-12h0m0 4h0m1 2h0m0 7h0m1-15h0m1 1h0m1 4h0m0 9h0m3-14h0m0 9h0m0 5h0m1 2h0m1-12h0m1-5h0m0 19h0m1-9h0m0 1h0m2-8h0m2 5h0m0 6h0m1-15h0m1 0h0m0 20h0m0 3h0m1-17h0m1 2h0m0 7h0m1-16h0m0 19h0m1-16h0m0 10h0m0 10h0m2-14h0m0 14h0m1-8h0m1-8h0m1-7h0m0 19h0m1-10h0m0 17h0m1-29h0m0 6h0m0 11h0m1 1h0m1-19h0m0 26h0m1-23h0m0 2h0m1 6h0m1 6h0m1 4h0m1-11h0m0 17h0m1-21h0m1 16h0m0 10h0m1-29h0m0 13h0m1-12h0m0 6h0m0 17h0m2-26h0m0 18h0m1-15h0m0 11h0m1-5h0m0 14h0m0 2h0m1-23h0m1 10h0m0 5h0m0 5h0m2-19h0m1 17h0m1-5h0m1-8h0m0 3h0m2-3h0m1 13h0m1-7h0m0 4h0m1-5h0m1-4h0m2 11h0m1-15h0m1 11h0m1-6h0m1 3h0m2-6h0m0 13h0m2-8h0m0 5h0m0 1h0m1-8h0m1-6h0m2-3h0m1 11h0m0 7h0m1-19h0m0 7h0m1-9h0m0 15h0m0 6h0m1-4h0m2-13h0m0 18h0m1-8h0m0 10h0m1-23h0m0 9h0m1 2h0m0 5h0m0 9h0m1-25h0m2 5h0m0 9h0m0 6h0m1 6h0m1-19h0m0 13h0m1-3h0m1-18h0m0 6h0m0 5h0m1 14h0m1-10h0m1-13h0m0 14h0m1-11h0m1 4h0m0 12h0m0 6h0m2-20h0m0 15h0m0 5h0m1-12h0m1-4h0m0 17h0m1-20h0m2 11h0m0 3h0m1-6h0m1-9h0m1 6h0m0 9h0m1-15h0m1 6h0m1 6h0m0 5h0m1-9h0m1-6h0m2 15h0m2-10h0m0 8h0m0 1h0m1-12h0m0 8h0m2-12h0m2 6h0m0 2h0m1-10h0m0 3h0m0 14h0m1-3h0m1-16h0m1-4h0m0 15h0m1 12h0m1-18h0m1-5h0m0 9h0m0 11h0m0 3h0m1 0h0m1-8h0m1-16h0m1 4h0m0 7h0m1 12h0m1-17h0m0 12h0m1-8h0m0 5h0m0 8h0m0 2h0m2-26h0m1 6h0m0 12h0m2-6h0m0 9h0m1-15h0m0 20h0m1-9h0m1-12h0m0 7h0m1 12h0m1 3h0m1-18h0m0 10h0m1-12h0m0 8h0m0 11h0m3-12h0m1-5h0m0 9h0m0 5h0m2-15h0m0 3h0m0 11h0m2-7h0m1 4h0m1-9h0m1 12h0m1-8h0m2-8h0m0 12h0m1-5h0m1-6h0m0 17h0m1-6h0m3-11h0m1-1h0m0 4h0m0 13h0m1-8h0m0 2h0m1-3h0m1 10h0m1-4h0m1-20h0m0 7h0m1-7h0m0 15h0m0 11h0m1-22h0m0 8h0m0 12h0m2-24h0m1 1h0m0 5h0m0 7h0m0 5h0m0 4h0m1-18h0m0 6h0m0 18h0m1-11h0m2 8h0m1-20h0m1 9h0m1-4h0m0 9h0m0 4h0m1 7h0m1-15h0m0 8h0m0 4h0m1-21h0m0 5h0m0 10h0m0 3h0m3-47h0m0 5h0m0 2h0m0 1h0m0 2h0m0 1h0m0 1h0m0 1h0m0 1h0m0 1h0m0 1h0m0 1h0m0 1h0m0 1h0m0 1h0m0 1h0m0 1h0m0 2h0m0 2h0m1-29h0m0 35h0m0 9h0m1-42h0m0 39h0m1-37h0m0 11h0m1 16h0m0 5h0m1-30h0m0 3h0m0 15h0m0 3h0m1-13h0m0 16h0m1-11h0m3-1h0m1-12h0m0 5h0m2 14h0m1-18h0m0 9h0m0 6h0m1 8h0m1-18h0m0 23h0m1-38h0m0 1h0m0 4h0m0 2h0m0 21h0m0 12h0m1-33h0m0 2h0m1 13h0m0 9h0m0 9h0m1-20h0m1 6h0m0 9h0m1-32h0m0 9h0m0 26h0m1-23h0m0 17h0m0 4h0m1-28h0m0 13h0m0 6h0m1-1h0m1-16h0m0 12h0m1-5h0m2 2h0m2-8h0m1 4h0m0 8h0m0 2h0m2-18h0m0 30h0m1-31h0m0 8h0m0 5h0m0 9h0m0 5h0m1-34h0m0 5h0m0 27h0m1-5h0m0 15h0m1-31h0m0 12h0m1-21h0m0 15h0m0 15h0m0 2h0m0 2h0m1-28h0m0 30h0m1-35h0m0 22h0m0 5h0m2-16h0m0 7h0m0 1h0m1-14h0m1 9h0m1-11h0m2 6h0m1 3h0m0 5h0m0 3h0m0 4h0m0 5h0m1-31h0m0 27h0m0 4h0m2-39h0m0 7h0m0 4h0m0 5h0m0 1h0m0 13h0m1 10h0m1-34h0m0 2h0m0 3h0m0 12h0m1-11h0m0 8h0m0 15h0m0 6h0m1-12h0m0 11h0m3-23h0m0 1h0m1 8h0m0 4h0m1-7h0m1-11h0m1 19h0m1-11h0m0 11h0m1-17h0m0 21h0m1-35h0m0 7h0m0 10h0m0 10h0m3-27h0m0 3h0m0 6h0m0 6h0m0 21h0m1-14h0m1 6h0m0 4h0m1-31h0m0 36h0m1-35h0m0 6h0m0 2h0m0 9h0m0 12h0m1-19h0m0 10h0m1-7h0m0 5h0m2 6h0m1 4h0m1-7h0m0 18h0m1-23h0m0 17h0m0 2h0m1 7h0m0 1h0m0 1h0m1-19h0m0 20h0m1-34h0m0 1h0m0 19h0m0 2h0m2-29h0m0 16h0m0 26h0m1-32h0m0 24h0m1-13h0m0 16h0m0 4h0m1-30h0m0 13h0m2 4h0m1-13h0m1-18h0m0 10h0m0 14h0m0 10h0m0 3h0m2-29h0m0 8h0m0 5h0m0 8h0m1-25h0m0 3h0m1 8h0m0 22h0m1-41h0m0 8h0m0 13h0m0 13h0m0 3h0m1-28h0m0 2h0m0 3h0m0 11h0m0 4h0m0 17h0m1-32h0m0 5h0m3 17h0m1-15h0m0 6h0m0 6h0m2 6h0m0 5h0m1-23h0m0 10h0m1 6h0m1-23h0m0 1h0m0 3h0m0 10h0m0 17h0m1-33h0m0 13h0m0 14h0m0 10h0m0 1h0m1-17h0m2-19h0m0 13h0m0 18h0m0 2h0m1-27h0m0 13h0m0 1h0m0 4h0m1-30h0m0 34h0m1-18h0m1-7h0m0 10h0m2-11h0m0 16h0m1 4h0m0 3h0m0 2h0m1-20h0m0 22h0m1-15h0m0 12h0m0 7h0m1-30h0m0 6h0m0 2h0m1 7h0m0 22h0m1-4h0m1-14h0m0 10h0m0 2h0m1-33h0m0 1h0m0 10h0m0 5h0m0 8h0m0 4h0m1-24h0m2 5h0m2 3h0m1-16h0m0 7h0m0 8h0m0 6h0m0 4h0m0 2h0m1-29h0m0 5h0m0 2h0m1 5h0m1 17h0m1-22h0m0 10h0m0 2h0m1-20h0m0 31h0m1-25h0m0 8h0m0 13h0m1-24h0m2 18h0m0 5h0m2-15h0m0 6h0m0 1h0m1 10h0m1-26h0m0 1h0m0 10h0m1-7h0m1-7h0m0 11h0m0 14h0m1-25h0m0 31h0m0 3h0m1-33h0m0 14h0m0 4h0m0 15h0m1-29h0m0 2h0m1 20h0m1-10h0m0 6h0m0 11h0m1-23h0m0 8h0m0 11h0m3-22h0m1 8h0m1-3h0m0 17h0m2 2h0m0 2h0m1-11h0m0 3h0m0 18h0m0 1h0m1-28h0m0 3h0m0 18h0m2-15h0m0 6h0m0 17h0m0 2h0m1-36h0m0 22h0m0 4h0m1-28h0m1 1h0m0 17h0m0 15h0m1-35h0m0 6h0m0 4h0m1 4h0m0 19h0m1-3h0m1-12h0m0 6h0m2-23h0m0 7h0m0 5h0m2-16h0m0 7h0m0 22h0m1-37h0m0 1h0m0 3h0m0 2h0m0 24h0m1-33h0m0 8h0m1 13h0m0 1h0m1-22h0m0 15h0m0 12h0m0 4h0m0 6h0m1-37h0m0 15h0m0 27h0m1-33h0m1-4h0m0 22h0m0 9h0m1-24h0m0 11h0m1-4h0m0 22h0m1-9h0m1-13h0m1 8h0m2 7h0m1-12h0m0 6h0m2-9h0m0 12h0m1-20h0m0 4h0m1-10h0m0 21h0m0 10h0m0 5h0m1-21h0m1 3h0m1-14h0m0 2h0m0 21h0m0 11h0m1-30h0m1 8h0m0 6h0m0 8h0m0 1h0m0 5h0m2-25h0m1 7h0m1-6h0m0 13h0m2-12h0m2 9h0m0 6h0m1-18h0m0 9h0m0 12h0m0 3h0m1-27h0m0 23h0m1 6h0m0 4h0m1-34h0m0 19h0m0 15h0m1-29h0m0 2h0m0 4h0m0 6h0m1-25h0m0 1h0m1 32h0m0 8h0m1-32h0m0 3h0m0 3h0m0 5h0m0 5h0m0 3h0m0 2h0m0 6h0m1-2h0m4-15h0m0 5h0m2 4h0m0 9h0m1-7h0m1-15h0m0 7h0m0 18h0m1-8h0m1-17h0m0 3h0m0 15h0m0 10h0m0 2h0m1-19h0m0 11h0m1-32h0m0 47h0m1-45h0m0 31h0m1-19h0m0 4h0m0 4h0m0 6h0m0 2h0m0 5h0m0 5h0m1-33h0m0 1h0m0 7h0m0 10h0m3-13h0m2 6h0m1 4h0m2-13h0m0 15h0m1-10h0m1 3h0m0 10h0m1 1h0m1-22h0m0 8h0m0 21h0m0 2h0m0 1h0m1-17h0m0 12h0m1-3h0m1-28h0m0 8h0m0 30h0m1-35h0m0 14h0m0 6h0m1 9h0m1-18h0m0 13h0m0 14h0m0 1h0m1-36h0m0 23h0m0 6h0m1-26h0m0 6h0m0 4h0m0 2h0m0 16h0m1-31h0m0 20h0m3-1h0m1-15h0m0 5h0m0 5h0m0 12h0m1-29h0m0 24h0m1-26h0m0 1h0m0 31h0m1-23h0m0 8h0m0 7h0m0 14h0m1-28h0m0 25h0m1-32h0m0 15h0m0 12h0m0 4h0m1-33h0m1 4h0m0 8h0m0 11h0m1-6h0m1-10h0m1 9h0m0 12h0m2-25h0m0 14h0m1-17h0m0 10h0m2 10h0m1-25h0m0 10h0m0 21h0m1-13h0m0 1h0m0 10h0m0 1h0m0 5h0m1-28h0m1 7h0m0 13h0m1-28h0m0 3h0m0 2h0m0 6h0m0 13h0m0 16h0m1-22h0m0 6h0m0 11h0m0 4h0m0 3h0m1-46h0m0 12h0m0 7h0m1 15h0m2-12h0m1-5h0m1 15h0m1-5h0m1-3h0m0 16h0m1-27h0m0 6h0m0 17h0m1 9h0m1-35h0m0 17h0m0 6h0m0 10h0m0 2h0m1-39h0m0 12h0m0 33h0m1-31h0m0 30h0m1-26h0m0 18h0m1-29h0m0 15h0m0 9h0m0 2h0m0 1h0m0 7h0m1-32h0m0 19h0m1-18h0m0 12h0m0 4h0m1-13h0m0 4h0m0 10h0m4-14h0m0 16h0m1-10h0m0 1h0m1-11h0m3-7h0m0 8h0m0 17h0m1-27h0m0 15h0m0 7h0m0 3h0m1-18h0m0 26h0m1-23h0m0 22h0m1-33h0m0 15h0m0 3h0m1-18h0m0 4h0m1 22h0m0 3h0m0 4h0m1-32h0m0 2h0m0 2h0m0 26h0m0 3h0m1-25h0m0 2h0m0 11h0m2-7h0m2 3h0m0 8h0m1-3h0m1-17h0m0 12h0m0 12h0m0 2h0m1-24h0m0 30h0m1-26h0m0 27h0m1-14h0m0 9h0m0 8h0m1-10h0m0 15h0m1-41h0m0 6h0m0 7h0m0 1h0m0 25h0m1-36h0m1 10h0m0 7h0m0 5h0m0 6h0m0 1h0m0 2h0m0 1h0m1-18h0m0 4h0m0 2h0m0 5h0m1-20h0m1 0h0m2 5h0m1 6h0m1-9h0m1-12h0m1 29h0m1-24h0m0 12h0m0 5h0m1-13h0m0 16h0m1-13h0m0 11h0m1-21h0m1-3h0m0 30h0m1-33h0m0 18h0m1-7h0m0 11h0m0 8h0m0 5h0m1-27h0m0 8h0m0 20h0m0 4h0m1-38h0m0 22h0m1-15h0m0 10h0m1 10h0m0 5h0m2-19h0m1-10h0m0 18h0m0 3h0m1-12h0m1 4h0m1-8h0m1 17h0m2-11h0m0 1h0" stroke="#000" stroke-width="7.00" stroke-linecap="round" fill="none"/>
<path transform="scale(.5)" d="M333 366h0m2-36h0m2 1h0m0 4h0m0 35h0m2-4h0m1-31h0m1 0h0m39 35h0m1-2h0m1 0h0m1-34h0m4 35h0m15 12h0m8-10h0m18-35h0m0 37h0m2-40h0m0 1h0m1 5h0m2-1h0m5-2h0m19 147h0m15-115h0m1-32h0m4-1h0m47 3h0m0 33h0m6-34h0m1 34h0m28-37h0m3 2h0m14 31h0m2-35h0m1 35h0m24 1h0m3-33h0m0 1h0m6-3h0m1 40h0m2-5h0m31-36h0m8 4h0m3 34h0m44-35h0m7 37h0m3-42h0m4 38h0m9-31h0m19 258h0m15-261h0m2 0h0m4 0h0m29 0h0m2 37h0m1-38h0m1 2h0m2 34h0m5 2h0m4 24h0m3-57h0m35-1h0m6 33h0m6-35h0m27 3h0m7-1h0m4-1h0m43-2h0m38 2h0m1 1h0m5-4h0m0 2h0m3-1h0m1 33h0m46 7h0m3-35h0m11 52h0m37-22h0m8-32h0m2-5h0m27 113h0m15-110h0m6 35h0m1-38h0m3 40h0m1-38h0m31 1h0m5 32h0m22 228h0m25-260h0m32 1h0m6 35h0m2-4h0m3 1h0m37 39h0m0 20h0m15-89h0m2 31h0m6 14h0m28 52h0m4-103h0m4 35h0m1 4h0m39-39h0m1 39h0m5-40h0m0 4h0m8 1h0m3-2h0m0 38h0m4-36h0m7 73h0m26-72h0m11-6h0m0 5h0m3 30h0m3 0h0m0 1h0m39-31h0m5-6h0m2 4h0m3 0h0m5 34h0m2-32h0m25 87h0m7-56h0m2-30h0m1-1h0m48 2h0m1-1h0m5-197h0m0 197h0m26-1h0m14 34h0m1-34h0m5 4h0m8 53h0m28-62h0m5 38h0m4-34h0m41 4h0m6 29h0m0 15h0m4-52h0m14 44h0m20-37h0m7-1h0m34 0h0m3-3h0m5 34h0m4-37h0m6 39h0m6-34h0m48 34h0m27-41h0m4 5h0m3 32h0m55 2h0m2-33h0m36 52h0m12-18h0m4-36h0m6 50h0m25-14h0m2-34h0m11-184h0m6-32h0m0 252h0m28-214h0m4-8h0m5 218h0m2-39h0m1 4h0m4 1h0m1 32h0m2 0h0m1-32h0m0 56h0m5-58h0m0 1h0m19 69h0m10-37h0m6-27h0m8-195h0m4 239h0m26-11h0m2-36h0m10 37h0m2-1h0m14-7h0m41-4h0m31 0h0m44-1h0m14-1h0m26 18h0m31-78h0" stroke="#ffa500" stroke-width="6.20" stroke-linecap="round" fill="none"/>
</g>
<path d="M162 321.4V35.4 M1125 321.4V35.4 M1303 321.4V35.4" stroke="#800080" stroke-width="2.08" stroke-dasharray="2.08 3.44"/>
<path d="M105.5 174H1361.6" stroke="#008000" stroke-width="2.08"/>
<rect x="105.5" y="35.5" width="1380.0" height="286.0" fill="none" stroke="#000" stroke-width="1.1"/>
<text x="162.9" y="341.8" font-size="13.89" text-anchor="middle" textLength="8.2" lengthAdjust="spacingAndGlyphs">0</text>
<text x="399.5" y="341.8" font-size="13.89" text-anchor="middle" textLength="34.5" lengthAdjust="spacingAndGlyphs">5000</text>
<text x="636.1" y="341.8" font-size="13.89" text-anchor="middle" textLength="43.4" lengthAdjust="spacingAndGlyphs">10000</text>
<text x="872.7" y="341.8" font-size="13.89" text-anchor="middle" textLength="43.4" lengthAdjust="spacingAndGlyphs">15000</text>
<text x="1109.3" y="341.8" font-size="13.89" text-anchor="middle" textLength="43.2" lengthAdjust="spacingAndGlyphs">20000</text>
<text x="1345.9" y="341.8" font-size="13.89" text-anchor="middle" textLength="43.2" lengthAdjust="spacingAndGlyphs">25000</text>
<path d="M162.5 321.5v4.9 M399.5 321.5v4.9 M636.5 321.5v4.9 M872.5 321.5v4.9 M1109.5 321.5v4.9 M1345.5 321.5v4.9" stroke="#000" stroke-width="1.1"/>
<text x="95" y="292.8" font-size="13.89" text-anchor="end" textLength="21.5" lengthAdjust="spacingAndGlyphs">9.0</text>
<text x="95" y="234.5" font-size="13.89" text-anchor="end" textLength="21.5" lengthAdjust="spacingAndGlyphs">9.2</text>
<text x="95" y="176.2" font-size="13.89" text-anchor="end" textLength="21.5" lengthAdjust="spacingAndGlyphs">9.4</text>
<text x="95" y="118" font-size="13.89" text-anchor="end" textLength="21.6" lengthAdjust="spacingAndGlyphs">9.6</text>
<text x="95" y="59.7" font-size="13.89" text-anchor="end" textLength="21.6" lengthAdjust="spacingAndGlyphs">9.8</text>
<path d="M105.5 287.5h-4.9 M105.5 229.5h-4.9 M105.5 170.5h-4.9 M105.5 112.5h-4.9 M105.5 54.5h-4.9" stroke="#000" stroke-width="1.1"/>
<rect x="1361.4" y="42.5" width="117.2" height="26.8" rx="2.8" fill="#fff" fill-opacity="0.8" stroke="#ccc" stroke-width="1.1"/>
<path d="M1366 53.9H1396" stroke="#008000" stroke-width="2.08"/>
<text x="1407.5" y="58.8" font-size="13.89" text-anchor="start" textLength="29.5" lengthAdjust="spacingAndGlyphs">mag</text>
<text x="1437.5" y="60.7" font-size="10.9" font-style="italic" textLength="34.5" lengthAdjust="spacingAndGlyphs">AGASC</text>
<rect x="1348.5" y="247.5" width="130" height="67" rx="2.8" fill="#fff" fill-opacity="0.8" stroke="#ccc" stroke-width="1.1"/>
<path d="M1367.5 260.5h0" stroke="#f00" stroke-width="3.4" stroke-linecap="round"/>
<path d="M1367.5 281.5h0" stroke="#ffa500" stroke-width="3.4" stroke-linecap="round"/>
<path d="M1367.5 302.5h0" stroke="#000" stroke-width="3.6" stroke-linecap="round"/>
<text x="1392.5" y="264" font-size="13.89" text-anchor="start" textLength="46.5" lengthAdjust="spacingAndGlyphs">not OK</text>
<text x="1393.5" y="284.9" font-size="13.89" text-anchor="start" textLength="79.6" lengthAdjust="spacingAndGlyphs">Highlighted</text>
<text x="1393.5" y="305.8" font-size="13.89" text-anchor="start" textLength="19.4" lengthAdjust="spacingAndGlyphs">OK</text>
<text x="795.5" y="371.7" font-size="16.67" text-anchor="middle" textLength="174.8" lengthAdjust="spacingAndGlyphs">Magnitude Estimates</text>
<text x="644.2" y="656.8" font-size="13.89" text-anchor="middle" textLength="34.8" lengthAdjust="spacingAndGlyphs">5606</text>
<text x="1214.5" y="636.7" font-size="13.89" text-anchor="middle" textLength="43.6" lengthAdjust="spacingAndGlyphs">29809</text>
<clipPath id="c2"><rect x="105.5" y="380.4" width="1380" height="286"/></clipPath>
<g clip-path="url(#c2)">
<path transform="scale(.5)" d="M332 1029h0m0 1h0m0 5h0m0 4h0m0 5h0m0 5h0m0 7h0m0 3h0m0 2h0m0 1h0m0 6h0m1-27h0m0 8h0m0 31h0m0 3h0m0 13h0m0 6h0m0 12h0m1-71h0m0 27h0m0 4h0m0 18h0m0 20h0m1-116h0m0 28h0m0 1h0m0 2h0m0 7h0m0 5h0m0 49h0m0 32h0m1-104h0m0 6h0m0 31h0m0 5h0m0 16h0m0 33h0m0 2h0m1-98h0m0 4h0m0 7h0m0 27h0m0 16h0m1-9h0m0 6h0m0 9h0m0 8h0m0 3h0m0 10h0m0 3h0m0 6h0m1-70h0m0 15h0m0 56h0m1-76h0m0 10h0m0 42h0m0 8h0m1-66h0m0 9h0m0 13h0m0 22h0m0 6h0m0 43h0m1-96h0m0 8h0m0 28h0m0 17h0m0 20h0m0 16h0m1-71h0m0 16h0m0 8h0m0 21h0m0 23h0m1-80h0m0 15h0m0 31h0m0 20h0m1-33h0m0 7h0m0 13h0m0 9h0m1-67h0m0 19h0m0 8h0m1-30h0m0 15h0m0 13h0m0 19h0m0 12h0m0 25h0m1-79h0m0 31h0m0 18h0m0 4h0m0 4h0m1-50h0m0 2h0m0 10h0m0 20h0m2-44h0m0 19h0m0 12h0m0 7h0m0 15h0m0 10h0m1-20h0m0 7h0m1-24h0m0 21h0m1-35h0m0 12h0m0 12h0m0 20h0m1-51h0m0 11h0m0 15h0m0 19h0m0 9h0m1-52h0m1-10h0m0 44h0m1-21h0m0 1h0m0 23h0m0 18h0m1-50h0m0 4h0m0 12h0m0 8h0m0 19h0m0 12h0m1-41h0m0 21h0m1-43h0m0 29h0m0 18h0m0 8h0m0 4h0m0 7h0m0 7h0m1-71h0m0 17h0m0 17h0m0 11h0m1 24h0m1-84h0m0 40h0m0 4h0m0 7h0m0 6h0m0 9h0m1-46h0m0 7h0m0 10h0m0 31h0m0 8h0m0 6h0m1-70h0m0 4h0m0 18h0m1-10h0m0 21h0m0 29h0m1-26h0m0 6h0m0 6h0m0 34h0m1-64h0m0 9h0m0 25h0m0 12h0m0 23h0m1-88h0m0 24h0m0 36h0m0 11h0m0 8h0m1-75h0m0 9h0m0 13h0m0 5h0m0 19h0m0 3h0m0 11h0m1-23h0m0 15h0m0 16h0m0 18h0m1-77h0m0 5h0m0 2h0m0 26h0m0 40h0m1-53h0m0 27h0m0 43h0m1-67h0m0 32h0m0 5h0m0 19h0m1-94h0m0 15h0m0 17h0m0 18h0m0 14h0m1-54h0m0 10h0m0 7h0m0 15h0m0 13h0m0 26h0m0 1h0m0 7h0m1-54h0m0 22h0m0 5h0m0 7h0m0 26h0m1-75h0m0 3h0m0 21h0m0 37h0m0 8h0m0 19h0m1-105h0m0 9h0m0 17h0m0 9h0m0 36h0m0 15h0m1-82h0m0 26h0m0 19h0m0 7h0m0 4h0m0 41h0m0 2h0m1-89h0m0 25h0m0 6h0m0 65h0m1-119h0m0 33h0m0 58h0m1-76h0m0 26h0m0 16h0m0 5h0m0 12h0m0 8h0m0 1h0m0 14h0m1-96h0m0 36h0m0 30h0m0 2h0m0 8h0m0 7h0m1-59h0m0 67h0m0 12h0m1-91h0m0 6h0m0 25h0m0 5h0m0 10h0m0 28h0m1-78h0m0 18h0m0 3h0m0 11h0m0 11h0m0 12h0m0 7h0m0 17h0m0 22h0m1-97h0m0 22h0m0 45h0m0 25h0m1-112h0m0 33h0m0 2h0m0 28h0m0 20h0m0 22h0m0 12h0m1-91h0m0 18h0m0 10h0m0 3h0m0 12h0m0 24h0m0 5h0m0 13h0m1-36h0m0 27h0m0 16h0m1-91h0m0 20h0m0 16h0m0 18h0m0 10h0m1-73h0m0 56h0m0 14h0m0 10h0m1-77h0m0 8h0m0 7h0m0 1h0m0 14h0m0 5h0m0 9h0m0 7h0m1-32h0m0 22h0m0 19h0m1-62h0m0 12h0m1 13h0m0 5h0m0 20h0m0 13h0m0 15h0m1-46h0m0 13h0m0 12h0m0 8h0m0 7h0m1-56h0m0 9h0m0 14h0m0 11h0m1-15h0m0 27h0m0 12h0m1-53h0m0 18h0m0 16h0m0 12h0m1-42h0m0 31h0m1-22h0m1-4h0m0 15h0m0 2h0m0 5h0m0 21h0m0 2h0m1-50h0m0 38h0m0 11h0m0 1h0m1-29h0m0 15h0m0 6h0m0 4h0m1-30h0m0 37h0m1-45h0m0 5h0m0 19h0m1-6h0m0 3h0m0 7h0m1-38h0m0 4h0m0 9h0m0 33h0m1-59h0m0 11h0m0 43h0m0 23h0m1-78h0m0 6h0m0 2h0m0 12h0m0 10h0m0 2h0m1-17h0m0 9h0m0 14h0m0 24h0m1-24h0m0 6h0m0 5h0m0 17h0m1-73h0m0 4h0m0 21h0m1 6h0m0 15h0m0 15h0m0 3h0m0 10h0m0 17h0m1-84h0m0 28h0m0 54h0m1-79h0m0 8h0m0 23h0m0 53h0m0 9h0m1-104h0m0 13h0m0 4h0m0 12h0m0 26h0m0 15h0m0 6h0m0 17h0m1-70h0m0 15h0m0 13h0m1-47h0m0 28h0m0 13h0m0 13h0m0 3h0m1-37h0m0 43h0m1-87h0m0 31h0m0 8h0m0 29h0m0 5h0m0 5h0m0 13h0m1-67h0m0 11h0m0 24h0m0 25h0m1-84h0m0 49h0m0 3h0m0 31h0m0 10h0m0 10h0m1-88h0m0 27h0m0 22h0m0 11h0m0 4h0m0 9h0m0 9h0m0 4h0m0 21h0m1-116h0m0 25h0m0 7h0m0 23h0m0 9h0m1-23h0m0 46h0m1-73h0m0 9h0m0 3h0m0 64h0m0 14h0m0 5h0m1-71h0m0 5h0m0 7h0m0 17h0m0 23h0m0 12h0m1-82h0m0 35h0m0 6h0m0 13h0m0 6h0m0 3h0m0 3h0m0 10h0m0 3h0m0 6h0m0 20h0m1-91h0m0 15h0m0 22h0m0 27h0m0 22h0m1-89h0m0 5h0m0 28h0m0 20h0m0 37h0m1-61h0m0 47h0m1-66h0m0 4h0m0 23h0m0 9h0m0 16h0m1-82h0m0 17h0m0 23h0m0 4h0m1-29h0m0 10h0m0 4h0m0 31h0m0 10h0m0 9h0m0 12h0m0 13h0m1-98h0m0 7h0m0 35h0m0 38h0m0 18h0m1-111h0m0 6h0m0 9h0m0 13h0m0 20h0m0 12h0m0 21h0m0 6h0m1-74h0m0 99h0m1-95h0m0 18h0m0 8h0m0 29h0m0 4h0m1-76h0m0 39h0m0 14h0m0 13h0m1-43h0m0 4h0m0 4h0m0 13h0m0 6h0m0 9h0m0 8h0m0 14h0m0 8h0m0 28h0m1-82h0m0 49h0m1-67h0m0 2h0m0 6h0m0 14h0m0 17h0m0 32h0m1-29h0m0 5h0m0 7h0m0 9h0m1-35h0m0 7h0m0 25h0m1-28h0m0 19h0m2-30h0m0 2h0m0 17h0m0 17h0m0 10h0m0 4h0m1-50h0m0 5h0m0 12h0m0 7h0m0 26h0m1-42h0m0 21h0m0 5h0m0 19h0m1-40h0m0 9h0m0 20h0m1-1h0m0 13h0m1-60h0m0 5h0m0 31h0m0 8h0m1-51h0m0 1h0m0 9h0m0 20h0m0 3h0m0 6h0m1-32h0m0 10h0m0 7h0m1-51h0m0 75h0m1-61h0m0 5h0m0 3h0m0 33h0m0 19h0m1-45h0m0 10h0m0 10h0m0 10h0m0 11h0m1-53h0m0 48h0m1-66h0m0 45h0m0 38h0m1-48h0m0 25h0m0 26h0m0 3h0m0 9h0m1-83h0m0 40h0m0 20h0m0 4h0m0 6h0m0 9h0m0 1h0m1-84h0m0 10h0m0 4h0m0 3h0m0 8h0m0 14h0m0 14h0m0 2h0m0 38h0m0 2h0m1-65h0m0 55h0m0 5h0m1-80h0m0 3h0m0 7h0m0 11h0m0 28h0m0 18h0m0 12h0m0 6h0m1-59h0m0 13h0m0 22h0m0 54h0m1-121h0m0 24h0m0 25h0m0 11h0m0 5h0m0 23h0m1-93h0m0 11h0m0 8h0m0 25h0m0 13h0m1-50h0m0 35h0m1-45h0m0 20h0m0 12h0m0 3h0m0 3h0m0 13h0m0 12h0m0 15h0m1 3h0m0 2h0m0 31h0m1-102h0m0 6h0m0 32h0m0 14h0m0 7h0m0 22h0m1-102h0m0 39h0m0 12h0m0 33h0m0 36h0m1-101h0m0 15h0m0 1h0m0 20h0m0 10h0m0 23h0m1-47h0m0 9h0m0 20h0m0 42h0m1-108h0m0 12h0m0 12h0m0 3h0m0 2h0m0 28h0m0 13h0m0 6h0m0 17h0m0 1h0m1-61h0m0 9h0m0 28h0m0 8h0m0 11h0m0 1h0m0 24h0m1-52h0m0 6h0m1-46h0m0 16h0m0 15h0m0 33h0m0 15h0m0 3h0m0 5h0m1-65h0m0 15h0m0 17h0m0 11h0m0 4h0m1-70h0m0 28h0m0 29h0m0 25h0m1-77h0m0 5h0m0 26h0m0 8h0m0 20h0m1-51h0m0 8h0m0 29h0m1-39h0m0 14h0m0 33h0m1-44h0m0 2h0m0 3h0m0 8h0m0 5h0m0 3h0m0 16h0m1-35h0m0 24h0m0 6h0m0 11h0m0 8h0m1-59h0m0 1h0m0 10h0m0 24h0m0 22h0m2-39h0m0 6h0m0 3h0m0 41h0m1-34h0m0 12h0m0 6h0m0 7h0m0 3h0m2-48h0m0 17h0m0 8h0m0 15h0m1-52h0m0 5h0m0 16h0m0 28h0m1-8h0m0 3h0m1-42h0m0 9h0m0 7h0m0 13h0m0 5h0m1-11h0m0 29h0m0 12h0m0 1h0m1-60h0m0 14h0m0 5h0m0 24h0m2-37h0m0 19h0m0 2h0m0 7h0m0 5h0m0 13h0m1-42h0m0 34h0m0 13h0m1-61h0m0 6h0m0 47h0m1-27h0m0 45h0m1-71h0m0 9h0m0 10h0m0 2h0m0 13h0m0 11h0m0 8h0m0 4h0m1-18h0m0 21h0m2-72h0m0 17h0m0 3h0m0 5h0m0 4h0m0 20h0m0 14h0m1-59h0m0 7h0m0 7h0m0 11h0m0 13h0m0 2h0m0 16h0m1-25h0m0 18h0m1-55h0m0 41h0m0 13h0m0 20h0m1-62h0m0 5h0m0 54h0m1-69h0m0 24h0m0 24h0m0 13h0m1-56h0m0 23h0m0 14h0m0 16h0m0 19h0m0 16h0m1-75h0m0 1h0m0 1h0m0 13h0m0 33h0m0 18h0m0 19h0m1-107h0m0 6h0m0 8h0m0 5h0m0 20h0m0 10h0m0 20h0m0 28h0m1-118h0m0 47h0m0 5h0m0 12h0m0 15h0m0 16h0m1-62h0m0 1h0m0 21h0m0 7h0m0 60h0m1-121h0m0 12h0m0 9h0m0 8h0m0 9h0m0 27h0m0 12h0m0 18h0m1-25h0m0 15h0m0 20h0m1-88h0m0 39h0m0 22h0m0 4h0m1-55h0m0 16h0m0 7h0m0 17h0m0 23h0m0 5h0m1-73h0m0 3h0m0 15h0m0 22h0m0 54h0m1-71h0m0 1h0m0 17h0m0 12h0m0 9h0m0 6h0m0 17h0m1-68h0m0 13h0m0 9h0m0 12h0m0 23h0m1-55h0m0 13h0m0 76h0m1-98h0m0 8h0m0 27h0m0 10h0m0 3h0m0 7h0m1-30h0m0 35h0m0 5h0m0 32h0m1-105h0m0 26h0m0 2h0m0 9h0m0 21h0m0 19h0m0 10h0m0 8h0m0 15h0m1-127h0m0 24h0m0 1h0m0 16h0m0 24h0m1-53h0m0 27h0m0 66h0m1-72h0m0 4h0m0 15h0m0 7h0m0 15h0m0 19h0m0 13h0m1-88h0m0 38h0m0 7h0m0 7h0m0 10h0m0 3h0m0 9h0m1-90h0m0 11h0m0 2h0m0 10h0m0 5h0m0 17h0m0 40h0m1-70h0m0 52h0m0 3h0m1-61h0m0 32h0m1-11h0m0 6h0m0 16h0m0 12h0m0 27h0m1-84h0m0 11h0m0 9h0m0 31h0m0 17h0m1-67h0m0 9h0m0 25h0m0 6h0m0 28h0m1-54h0m1 14h0m0 25h0m0 9h0m0 2h0m1-53h0m0 12h0m0 11h0m0 12h0m1-6h0m0 11h0m0 8h0m0 15h0m1-43h0m0 12h0m1-17h0m1 9h0m0 19h0m0 17h0m1-25h0m0 3h0m0 8h0m0 11h0m1-7h0m0 3h0m0 8h0m0 3h0m1-46h0m0 9h0m0 48h0m1-69h0m0 25h0m0 10h0m0 15h0m1-47h0m0 3h0m0 13h0m0 43h0m1-61h0m0 13h0m0 26h0m0 19h0m1-41h0m0 12h0m0 13h0m0 11h0m1-73h0m0 6h0m0 25h0m0 4h0m0 16h0m0 20h0m0 18h0m1-92h0m0 19h0m0 30h0m0 19h0m1-64h0m0 24h0m0 16h0m0 15h0m1-56h0m0 62h0m1-72h0m0 22h0m0 7h0m0 4h0m0 8h0m0 33h0m1-46h0m0 17h0m0 5h0m0 8h0m0 21h0m0 12h0m1-72h0m0 44h0m1-60h0m0 9h0m0 23h0m0 7h0m0 27h0m0 3h0m0 7h0m0 6h0m1-30h0m1-55h0m0 17h0m0 19h0m0 12h0m0 39h0m1-79h0m0 15h0m0 8h0m0 4h0m0 18h0m0 6h0m0 10h0m0 7h0m1-52h0m0 3h0m0 39h0m0 30h0m0 1h0m1-53h0m0 18h0m0 21h0m1-68h0m0 1h0m0 37h0m0 15h0m0 9h0m0 3h0m0 29h0m0 17h0m1-128h0m0 41h0m0 1h0m0 33h0m0 18h0m0 3h0m1-75h0m0 13h0m0 15h0m1-41h0m0 19h0m0 16h0m0 6h0m0 9h0m0 6h0m1-49h0m0 13h0m0 42h0m0 18h0m0 5h0m1-95h0m0 35h0m0 6h0m0 13h0m0 27h0m0 6h0m1-81h0m0 50h0m0 10h0m0 11h0m1-62h0m0 6h0m0 41h0m0 26h0m0 3h0m0 5h0m1-72h0m0 6h0m0 10h0m0 7h0m0 62h0m1-98h0m0 41h0m0 19h0m0 12h0m1-77h0m0 12h0m0 10h0m0 6h0m0 8h0m0 16h0m0 43h0m1-86h0m0 10h0m0 27h0m0 24h0m1-45h0m0 36h0m0 22h0m0 7h0m1-73h0m0 14h0m0 10h0m0 15h0m0 10h0m0 6h0m0 4h0m0 5h0m1-53h0m0 7h0m1 15h0m0 34h0m0 3h0m1-51h0m0 8h0m0 18h0m0 24h0m1-31h0m0 26h0m1-50h0m0 38h0m0 5h0m0 1h0m1-36h0m0 21h0m0 14h0m1-44h0m0 19h0m1-9h0m0 1h0m0 7h0m0 3h0m0 14h0m1-40h0m0 1h0m0 7h0m0 22h0m1 4h0m0 12h0m1-23h0m0 18h0m1-52h0m0 22h0m0 25h0m1-54h0m0 3h0m0 9h0m0 4h0m0 6h0m1 6h0m0 8h0m0 8h0m0 16h0m0 13h0m1-78h0m0 37h0m0 17h0m0 21h0m0 17h0m1-64h0m0 14h0m0 28h0m0 8h0m1-73h0m0 9h0m0 4h0m0 5h0m0 21h0m0 4h0m0 6h0m1-40h0m0 20h0m0 52h0m0 1h0m0 2h0m1-92h0m0 3h0m0 13h0m0 18h0m0 24h0m0 10h0m1-6h0m0 31h0m0 12h0m0 1h0m1-99h0m0 3h0m0 14h0m0 11h0m0 7h0m0 2h0m0 9h0m0 20h0m0 25h0m0 2h0m1-71h0m0 76h0m1-95h0m0 32h0m0 18h0m0 6h0m0 10h0m0 28h0m1-84h0m0 15h0m0 15h0m0 38h0m0 6h0m1-69h0m0 3h0m0 11h0m0 7h0m0 7h0m0 4h0m0 21h0m0 5h0m1-80h0m0 11h0m0 56h0m0 46h0m1-117h0m0 7h0m0 4h0m0 38h0m0 13h0m0 5h0m0 37h0m1-15h0m0 7h0m1-77h0m0 5h0m0 5h0m0 5h0m0 2h0m0 8h0m0 9h0m0 2h0m0 5h0m0 17h0m0 2h0m1-8h0m0 21h0m1-91h0m0 15h0m0 24h0m0 44h0m0 12h0m0 11h0m1-42h0m1-68h0m0 6h0m0 7h0m0 14h0m0 23h0m0 5h0m0 27h0m0 10h0m0 22h0m1-83h0m0 4h0m0 26h0m0 38h0m0 1h0m1-84h0m0 23h0m0 10h0m0 23h0m0 5h0m1-36h0m0 3h0m0 11h0m0 10h0m0 15h0m0 37h0m1-115h0m0 19h0m0 11h0m0 4h0m0 33h0m0 18h0m1-78h0m0 1h0m0 12h0m0 6h0m1-22h0m0 8h0m0 4h0m0 11h0m0 31h0m0 17h0m1-33h0m0 6h0m0 25h0m0 10h0m1-26h0m0 6h0m0 2h0m0 7h0m1-21h0m0 2h0m0 24h0m1-78h0m0 5h0m0 17h0m0 2h0m0 7h0m0 8h0m1-38h0m0 33h0m0 12h0m1-29h0m0 8h0m0 5h0m0 9h0m0 34h0m0 10h0m0 3h0m1-42h0m0 19h0m1-36h0m0 21h0m0 9h0m0 3h0m0 6h0m0 4h0m1-34h0m0 16h0m0 24h0m2-18h0m0 16h0m0 7h0m1-36h0m0 5h0m0 14h0m1-37h0m0 6h0m0 7h0m0 27h0m1-15h0m0 8h0m0 20h0m0 4h0m0 2h0m1-51h0m0 3h0m0 4h0m1 10h0m0 18h0m0 7h0m1-58h0m0 28h0m0 12h0m0 8h0m0 6h0m0 2h0m1-46h0m1 6h0m0 28h0m1-22h0m0 5h0m0 9h0m0 6h0m0 18h0m1-79h0m0 11h0m0 14h0m0 7h0m0 36h0m1-49h0m0 7h0m0 19h0m0 7h0m1-35h0m0 20h0m0 14h0m0 36h0m1-90h0m0 26h0m0 12h0m0 24h0m0 4h0m0 13h0m1-82h0m0 6h0m0 12h0m0 42h0m0 16h0m0 3h0m0 9h0m0 20h0m1-91h0m0 8h0m0 27h0m0 54h0m1-109h0m0 9h0m0 29h0m0 12h0m0 31h0m0 4h0m1-76h0m0 68h0m0 19h0m1-79h0m0 16h0m0 2h0m0 7h0m0 5h0m0 11h0m0 13h0m0 6h0m0 10h0m0 13h0m0 24h0m1-123h0m0 22h0m0 28h0m0 8h0m0 5h0m0 3h0m0 24h0m0 34h0m1-97h0m0 69h0m0 3h0m0 1h0m1-79h0m0 32h0m0 17h0m0 7h0m0 35h0m0 3h0m1-78h0m0 5h0m0 5h0m0 60h0m1-84h0m0 33h0m0 20h0m0 4h0m0 5h0m0 8h0m0 9h0m0 11h0m1-83h0m0 12h0m0 20h0m0 3h0m0 4h0m0 7h0m0 29h0m0 13h0m0 3h0m1-108h0m0 19h0m0 18h0m0 40h0m1-48h0m0 26h0m1-51h0m0 18h0m0 43h0m0 10h0m1-71h0m0 3h0m0 3h0m0 3h0m0 9h0m0 11h0m0 13h0m0 25h0m0 12h0m1-60h0m0 7h0m0 11h0m1-4h0m0 13h0m0 7h0m0 11h0m0 23h0m1-31h0m0 1h0m0 19h0m1-39h0m0 8h0m0 5h0m1-34h0m0 10h0m0 3h0m0 11h0m0 19h0m0 10h0m0 3h0m1-63h0m0 54h0m1-49h0m0 38h0m0 34h0m1-65h0m0 5h0m0 6h0m0 6h0m0 10h0m0 8h0m0 11h0m0 14h0m1-65h0m0 27h0m0 28h0m2-10h0m0 17h0m1-48h0m0 18h0m1-26h0m0 4h0m0 11h0m0 4h0m0 12h0m0 3h0m0 8h0m0 8h0m1-50h0m0 28h0m0 22h0m1-56h0m0 28h0m0 16h0m0 7h0m1-43h0m0 16h0m1-12h0m0 6h0m0 34h0m1-37h0m0 1h0m0 30h0m0 5h0m1-13h0m0 5h0m1-34h0m0 13h0m0 5h0m0 6h0m0 27h0m0 7h0m1-10h0m1-20h0m0 9h0m0 23h0m1-57h0m0 18h0m0 22h0m0 9h0m1-47h0m0 4h0m0 1h0m0 14h0m0 8h0m0 17h0m0 13h0m1-64h0m0 19h0m1-24h0m0 27h0m0 16h0m0 5h0m0 24h0m1-51h0m0 12h0m0 18h0m0 23h0m1-81h0m0 17h0m0 54h0m0 27h0m1-93h0m0 40h0m0 3h0m1-25h0m0 20h0m0 14h0m1-76h0m0 19h0m0 11h0m0 17h0m0 8h0m0 26h0m0 20h0m1-76h0m0 9h0m0 5h0m0 32h0m0 17h0m1-66h0m0 30h0m0 27h0m1-66h0m0 4h0m0 12h0m0 15h0m0 2h0m0 9h0m0 4h0m0 10h0m1-29h0m0 12h0m0 30h0m0 14h0m1-30h0m0 43h0m1-110h0m0 28h0m0 6h0m0 3h0m0 30h0m0 7h0m0 4h0m0 9h0m0 7h0m1-72h0m0 48h0m1-59h0m0 5h0m0 10h0m0 9h0m0 15h0m0 6h0m0 7h0m0 28h0m0 4h0m1-84h0m0 30h0m0 4h0m1-53h0m0 84h0m0 5h0m0 28h0m1-101h0m0 20h0m0 5h0m0 53h0m1-66h0m0 18h0m0 9h0m0 18h0m0 4h0m0 30h0m0 22h0m1-97h0m0 30h0m0 2h0m0 5h0m0 12h0m0 4h0m0 12h0m0 5h0m1-82h0m0 2h0m0 16h0m0 11h0m0 32h0m1-36h0m0 32h0m0 7h0m0 25h0m1-103h0m0 6h0m0 14h0m0 27h0m0 35h0m0 8h0m0 3h0m1-90h0m0 32h0m0 18h0m0 12h0m0 46h0m1-115h0m0 28h0m0 21h0m0 18h0m0 23h0m1-81h0m0 22h0m0 30h0m0 41h0m1-97h0m0 1h0m0 8h0m0 19h0m0 5h0m0 6h0m0 9h0m0 21h0m0 2h0m0 9h0m1-71h0m0 9h0m0 47h0m0 8h0m0 3h0m1-63h0m0 101h0m1-95h0m0 23h0m0 10h0m0 6h0m0 12h0m0 14h0m0 5h0m0 4h0m0 5h0m0 21h0m1-117h0m0 18h0m0 17h0m0 1h0m0 9h0m0 32h0m1-53h0m0 6h0m1-36h0m0 47h0m0 19h0m0 3h0m0 36h0m1-102h0m0 15h0m0 40h0m0 5h0m0 22h0m0 8h0m1-72h0m0 5h0m0 12h0m0 15h0m0 16h0m0 3h0m0 6h0m1-85h0m0 12h0m0 29h0m0 56h0m1-47h0m0 3h0m0 26h0m0 8h0m0 17h0m1-76h0m0 8h0m0 27h0m0 6h0m0 39h0m1-78h0m0 17h0m0 19h0m0 13h0m0 8h0m0 6h0m1-61h0m0 10h0m0 10h0m0 5h0m0 2h0m0 16h0m0 9h0m0 15h0m0 6h0m1-89h0m1 53h0m1 14h0m0 17h0m0 15h0m1-69h0m0 14h0m0 2h0m0 14h0m0 13h0m0 7h0m1-58h0m0 15h0m0 19h0m0 10h0m0 6h0m1-44h0m0 29h0m0 25h0m1-31h0m0 18h0m0 20h0m1-59h0m0 9h0m0 38h0m1-42h0m0 10h0m0 15h0m1-23h0m0 6h0m0 40h0m1-50h0m0 19h0m0 12h0m1-42h0m0 8h0m0 1h0m0 13h0m0 10h0m0 9h0m0 13h0m1-19h0m0 10h0m0 4h0m1-21h0m0 20h0m0 4h0m1-17h0m0 23h0m0 11h0m1-50h0m0 5h0m0 7h0m0 15h0m1-51h0m0 6h0m0 4h0m0 8h0m0 2h0m2-22h0m0 14h0m0 12h0m0 9h0m0 12h0m0 16h0m0 3h0m0 7h0m1-91h0m0 21h0m0 28h0m0 7h0m0 4h0m0 8h0m1-58h0m0 21h0m0 4h0m0 6h0m0 24h0m1-74h0m0 22h0m0 34h0m0 35h0m1-74h0m0 18h0m0 9h0m0 34h0m0 4h0m1-74h0m0 15h0m0 60h0m1-66h0m0 45h0m0 7h0m0 22h0m1-62h0m0 11h0m0 11h0m0 8h0m0 8h0m0 20h0m0 10h0m0 1h0m0 16h0m0 17h0m1-106h0m0 12h0m0 21h0m0 14h0m0 9h0m1-69h0m0 20h0m0 15h0m0 29h0m1-32h0m0 47h0m1-82h0m0 5h0m0 37h0m0 28h0m0 9h0m1-86h0m0 9h0m0 8h0m0 43h0m0 8h0m0 5h0m0 10h0m0 10h0m0 4h0m1-71h0m0 11h0m0 7h0m0 12h0m1-49h0m0 12h0m0 14h0m0 7h0m0 11h0m0 7h0m0 6h0m0 13h0m1-63h0m0 49h0m0 4h0m0 26h0m0 10h0m1-107h0m0 31h0m0 2h0m0 21h0m1-12h0m0 7h0m0 11h0m0 32h0m0 2h0m1-74h0m0 18h0m0 13h0m0 23h0m0 4h0m0 8h0m0 14h0m0 5h0m0 24h0m1-131h0m0 27h0m0 17h0m0 20h0m0 46h0m1-82h0m0 21h0m0 43h0m1-70h0m0 14h0m0 22h0m0 13h0m0 4h0m1-49h0m0 7h0m0 51h0m0 1h0m0 5h0m0 8h0m1-47h0m0 15h0m0 1h0m0 10h0m0 38h0m0 2h0m1-75h0m0 12h0m0 7h0m0 37h0m0 4h0m0 3h0m1-76h0m0 28h0m0 36h0m0 8h0m0 9h0m1-80h0m0 16h0m0 27h0m0 23h0m1-90h0m0 32h0m0 10h0m0 33h0m1-31h0m0 18h0m0 11h0m0 8h0m0 7h0m1-55h0m0 18h0m0 6h0m0 45h0m1-66h0m0 46h0m1-56h0m0 22h0m0 23h0m0 7h0m0 27h0m1-67h0m0 26h0m1-20h0m0 23h0m0 18h0m0 1h0m0 1h0m1-38h0m0 4h0m0 6h0m0 14h0m0 26h0m2-65h0m0 45h0m1-49h0m0 33h0m0 8h0m0 19h0m1-74h0m0 13h0m0 10h0m0 2h0m0 11h0m0 4h0m0 9h0m1-18h0m0 27h0m0 7h0m1-66h0m0 5h0m0 8h0m0 9h0m0 35h0m1-18h0m0 3h0m0 8h0m0 4h0m0 14h0m0 17h0m1-73h0m0 5h0m0 14h0m0 14h0m0 17h0m0 11h0m0 10h0m1-58h0m0 12h0m1-14h0m1-12h0m0 5h0m0 32h0m0 19h0m0 22h0m1-53h0m0 21h0m0 19h0m1-47h0m0 6h0m0 16h0m0 21h0m1-30h0m0 20h0m0 19h0m1-59h0m0 5h0m0 57h0m1-81h0m0 45h0m0 7h0m0 24h0m1-82h0m0 10h0m0 12h0m0 14h0m0 6h0m0 6h0m0 22h0m1-75h0m0 19h0m0 8h0m0 7h0m0 33h0m0 14h0m0 13h0m1-93h0m0 14h0m0 23h0m0 31h0m0 10h0m0 4h0m1-76h0m0 11h0m0 7h0m0 32h0m0 34h0m0 11h0m0 5h0m1-57h0m0 47h0m0 11h0m1-96h0m0 20h0m0 11h0m0 18h0m0 11h0m0 24h0m1-68h0m0 25h0m0 5h0m0 8h0m0 16h0m0 7h0m0 25h0m0 3h0m1-121h0m0 26h0m0 15h0m0 39h0m0 20h0m1-87h0m0 12h0m0 10h0m0 39h0m0 16h0m0 3h0m0 14h0m0 19h0m1-107h0m0 24h0m0 8h0m0 51h0m0 6h0m0 20h0m1-102h0m0 38h0m0 6h0m0 14h0m0 11h0m1-78h0m0 33h0m0 6h0m0 5h0m0 17h0m0 40h0m1-104h0m0 18h0m0 6h0m0 2h0m0 21h0m0 10h0m0 36h0m1-86h0m0 25h0m0 29h0m0 9h0m0 8h0m0 7h0m0 6h0m0 10h0m0 10h0m1-62h0m0 3h0m0 12h0m0 8h0m0 18h0m1-12h0m0 20h0m1-78h0m0 1h0m0 19h0m0 72h0m1-99h0m0 15h0m0 6h0m0 9h0m0 6h0m0 7h0m0 50h0m1-103h0m0 5h0m0 35h0m0 19h0m0 4h0m0 9h0m0 9h0m1-54h0m0 25h0m0 1h0m0 16h0m0 11h0m0 20h0m1-120h0m0 10h0m0 24h0m0 17h0m0 6h0m0 27h0m1-85h0m0 19h0m0 61h0m0 9h0m0 7h0m1-71h0m0 6h0m0 9h0m0 24h0m0 31h0m1-81h0m0 13h0m0 16h0m0 31h0m1-32h0m0 10h0m0 8h0m0 10h0m0 18h0m1-52h0m0 17h0m0 23h0m1-30h0m0 18h0m0 7h0m1-21h0m0 7h0m0 25h0m1-53h0m0 2h0m0 28h0m0 3h0m1-26h0m0 3h0m0 6h0m0 9h0m1 15h0m0 5h0m0 5h0m0 12h0m2-28h0m0 18h0m0 3h0m1-61h0m0 21h0m0 6h0m0 15h0m0 28h0m0 8h0m1-46h0m0 21h0m0 8h0m0 10h0m1-72h0m0 36h0m0 13h0m1-29h0m0 5h0m0 15h0m1-39h0m0 27h0m0 7h0m0 19h0m1-53h0m0 11h0m0 4h0m0 31h0m0 12h0m0 6h0m0 9h0m1-26h0m0 20h0m1-35h0m0 7h0m0 5h0m0 8h0m0 16h0m1-56h0m0 7h0m0 6h0m1-23h0m1 8h0m0 8h0m0 9h0m0 31h0m0 3h0m1-54h0m0 27h0m0 13h0m0 7h0m1-49h0m0 6h0m0 10h0m0 20h0m0 3h0m0 20h0m0 31h0m1-68h0m0 8h0m0 34h0m1-79h0m0 6h0m0 5h0m0 15h0m0 10h0m0 24h0m0 9h0m0 4h0m1-66h0m0 35h0m0 38h0m1-63h0m0 4h0m0 35h0m0 9h0m0 14h0m1-69h0m0 17h0m1-25h0m0 38h0m0 9h0m0 4h0m0 37h0m1-76h0m0 10h0m0 7h0m0 6h0m0 25h0m0 7h0m0 6h0m1-29h0m0 13h0m0 8h0m0 16h0m0 5h0m0 15h0m1-82h0m0 23h0m0 56h0m1-74h0m0 52h0m1-62h0m0 19h0m0 22h0m0 15h0m0 16h0m1-92h0m0 12h0m0 4h0m0 10h0m0 9h0m0 8h0m0 12h0m0 8h0m0 16h0m0 19h0m0 13h0m1-100h0m0 38h0m0 19h0m0 3h0m0 32h0m0 9h0m1-115h0m0 45h0m0 18h0m0 28h0m0 19h0m0 11h0m0 6h0m1-120h0m0 10h0m0 14h0m0 65h0m1-73h0m0 3h0m0 24h0m0 7h0m0 17h0m0 5h0m0 4h0m0 5h0m1-90h0m0 37h0m0 12h0m0 55h0m0 3h0m0 9h0m1-73h0m0 25h0m0 3h0m0 1h0m0 33h0m1-80h0m0 62h0m1-65h0m0 11h0m0 3h0m0 14h0m0 6h0m0 5h0m0 33h0m0 6h0m1-92h0m0 7h0m0 4h0m0 20h0m0 23h0m0 16h0m0 6h0m1-55h0m0 18h0m0 20h0m0 24h0m0 18h0m1-98h0m0 33h0m0 8h0m0 2h0m0 28h0m1-59h0m0 17h0m0 20h0m0 14h0m0 7h0m0 9h0m0 6h0m0 3h0m0 4h0m1-96h0m0 16h0m0 9h0m0 37h0m1-59h0m0 6h0m0 6h0m0 12h0m0 14h0m0 18h0m0 9h0m0 14h0m0 2h0m0 1h0m1-73h0m0 8h0m0 13h0m0 2h0m0 17h0m1-13h0m0 23h0m0 12h0m0 6h0m0 1h0m0 9h0m0 7h0m0 2h0m1-51h0m1-16h0m0 14h0m0 3h0m0 19h0m1-47h0m0 6h0m0 13h0m0 6h0m0 10h0m0 21h0m1-16h0m0 13h0m0 8h0m1-59h0m0 25h0m0 15h0m0 18h0m1-74h0m0 20h0m0 5h0m0 4h0m0 17h0m0 13h0m1-25h0m1 30h0m0 2h0m1-69h0m0 24h0m0 17h0m0 13h0m1-41h0m0 30h0m0 5h0m0 44h0m1-85h0m0 10h0m0 17h0m0 23h0m0 4h0m0 15h0m1-77h0m0 30h0m0 12h0m0 22h0m0 6h0m1-56h0m0 7h0m0 3h0m0 30h0m1-35h0m0 18h0m1-28h0m0 18h0m0 9h0m0 9h0m0 5h0m0 10h0m0 13h0m0 42h0m2-123h0m0 63h0m0 29h0m0 13h0m1-96h0m0 12h0m0 7h0m0 3h0m0 19h0m0 6h0m0 19h0m0 32h0m1-68h0m0 8h0m0 32h0m0 8h0m0 17h0m0 5h0m1-72h0m0 31h0m0 2h0m0 12h0m0 4h0m0 5h0m0 7h0m0 1h0m1-56h0m0 16h0m0 17h0m1-23h0m0 12h0m0 31h0m0 16h0m1-74h0m0 7h0m0 75h0m0 17h0m1-115h0m0 46h0m0 5h0m0 20h0m0 8h0m1-81h0m0 30h0m0 11h0m0 11h0m0 16h0m0 21h0m1-92h0m0 19h0m0 5h0m0 16h0m0 7h0m0 15h0m0 4h0m0 9h0m0 8h0m1-73h0m0 6h0m1 7h0m0 5h0m0 6h0m0 28h0m1-51h0m0 8h0m0 39h0m0 19h0m0 2h0m1-52h0m0 11h0m0 4h0m0 9h0m0 4h0m0 37h0m1-94h0m0 4h0m0 4h0m0 39h0m0 24h0m0 11h0m0 6h0m1-55h0m0 4h0m0 56h0m0 7h0m0 11h0m1-95h0m0 46h0m0 4h0m0 2h0m0 5h0m0 10h0m1-84h0m0 23h0m0 2h0m0 26h0m0 27h0m0 27h0m1-101h0m0 5h0m0 4h0m0 1h0m0 33h0m0 11h0m0 38h0m1-55h0m0 30h0m0 26h0m0 4h0m1-82h0m0 10h0m0 16h0m0 11h0m1-35h0m0 12h0m0 4h0m0 29h0m0 10h0m0 5h0m0 4h0m1-24h0m1-52h0m0 17h0m0 6h0m0 6h0m0 13h0m1-34h0m0 6h0m0 20h0m0 6h0m0 8h0m0 7h0m0 3h0m0 5h0m2-56h0m0 55h0m0 5h0m0 12h0m1-68h0m0 9h0m0 7h0m0 6h0m0 4h0m0 13h0m1-31h0m1 21h0m0 3h0m0 10h0m0 5h0m1-49h0m0 10h0m0 6h0m0 8h0m1-16h0m0 31h0m1-21h0m0 9h0m0 19h0m1-39h0m0 26h0m1-22h0m0 10h0m0 37h0m0 3h0m1-60h0m0 36h0m0 13h0m0 4h0m1-52h0m0 13h0m0 13h0m0 6h0m0 8h0m0 8h0m2-42h0m0 14h0m0 23h0m1-30h0m0 13h0m0 17h0m1-59h0m0 3h0m0 13h0m0 9h0m0 9h0m0 16h0m0 3h0m0 14h0m1-57h0m0 27h0m1-21h0m0 3h0m0 26h0m0 17h0m1-74h0m0 4h0m0 57h0m0 36h0m1-68h0m0 3h0m0 12h0m0 9h0m1-53h0m0 12h0m0 10h0m0 15h0m0 3h0m1-26h0m0 4h0m0 34h0m0 6h0m0 11h0m0 15h0m0 9h0m1-104h0m0 26h0m0 14h0m0 21h0m0 7h0m0 10h0m0 12h0m1-50h0m0 44h0m1-83h0m0 10h0m0 1h0m0 6h0m0 40h0m0 56h0m1-93h0m0 8h0m0 6h0m0 8h0m0 6h0m0 30h0m0 20h0m0 14h0m1-117h0m0 58h0m0 19h0m0 44h0m1-75h0m0 10h0m0 9h0m0 5h0m0 6h0m0 6h0m0 15h0m1-58h0m0 53h0m1-81h0m0 11h0m0 11h0m0 17h0m0 25h0m0 3h0m0 19h0m1-71h0m0 37h0m0 24h0m0 4h0m0 10h0m1-91h0m0 8h0m0 27h0m0 40h0m0 18h0m1-75h0m0 8h0m0 20h0m0 1h0m0 11h0m0 2h0m0 24h0m1-73h0m0 64h0m1-71h0m0 19h0m0 8h0m0 9h0m0 17h0m0 9h0m1-66h0m0 7h0m0 61h0m1-50h0m0 8h0m0 8h0m0 11h0m0 8h0m1-12h0m0 7h0m0 9h0m0 6h0m1-66h0m0 8h0m0 10h0m0 6h0m0 10h0m0 38h0m1-45h0m0 27h0m0 24h0m1-64h0m0 8h0m0 9h0m0 42h0m1-66h0m0 32h0m0 5h0m0 6h0m1-36h0m0 17h0m0 31h0m0 6h0m1-30h0m0 19h0m1-11h0m0 5h0m0 21h0m1-59h0m0 16h0m0 29h0m1-22h0m0 4h0m0 24h0m0 1h0m0 11h0m1-33h0m0 7h0m0 8h0m1-32h0m0 7h0m2-11h0m0 14h0m0 11h0m0 6h0m0 14h0m0 4h0m0 3h0m0 3h0m1-16h0m1-19h0m0 25h0m1-39h0m0 28h0m0 1h0m0 17h0m1-35h0m0 9h0m0 40h0m1-61h0m0 5h0m0 39h0m0 8h0m1-65h0m0 10h0m0 6h0m0 22h0m0 11h0m0 1h0m1-21h0m0 22h0m0 12h0m1-42h0m1-10h0m0 25h0m0 7h0m0 27h0m1-72h0m0 9h0m0 13h0m0 2h0m0 3h0m0 24h0m0 7h0m0 3h0m0 29h0m1-89h0m1 6h0m0 26h0m0 8h0m0 24h0m0 11h0m0 4h0m0 3h0m1-69h0m0 4h0m0 35h0m0 15h0m0 23h0m1-70h0m0 7h0m0 14h0m0 6h0m0 14h0m0 32h0m1-90h0m0 5h0m0 27h0m0 32h0m1-81h0m0 40h0m0 30h0m0 17h0m0 10h0m0 1h0m1-50h0m0 17h0m0 59h0m1-123h0m0 27h0m0 6h0m0 11h0m0 9h0m0 6h0m0 16h0m0 13h0m1-74h0m0 5h0m0 48h0m0 14h0m1-42h0m0 35h0m0 19h0m0 4h0m0 12h0m1-77h0m0 12h0m0 7h0m0 13h0m0 14h0m0 7h0m0 4h0m0 23h0m1-110h0m0 14h0m0 13h0m0 12h0m0 13h0m0 44h0m0 11h0m1-115h0m0 16h0m0 49h0m0 8h0m0 3h0m1-56h0m0 72h0m0 29h0m1-112h0m0 5h0m0 7h0m0 8h0m0 3h0m0 18h0m0 9h0m0 23h0m0 15h0m1-94h0m0 31h0m0 6h0m0 12h0m0 14h0m0 22h0m0 13h0m0 24h0m1-120h0m0 8h0m0 8h0m0 22h0m0 15h0m0 17h0m0 44h0m1-91h0m0 5h0m0 7h0m0 6h0m0 18h0m0 7h0m0 16h0m1-73h0m0 6h0m0 28h0m0 11h0m0 22h0m0 16h0m0 10h0m1-52h0m0 13h0m0 7h0m0 21h0m1-75h0m0 4h0m0 26h0m0 13h0m0 23h0m0 6h0m1-52h0m0 31h0m0 38h0m1-76h0m0 3h0m0 81h0m1-83h0m0 8h0m0 16h0m0 6h0m0 16h0m0 2h0m0 11h0m0 15h0m1-59h0m0 4h0m0 21h0m0 15h0m0 16h0m0 10h0m1-46h0m0 22h0m1-52h0m0 7h0m0 58h0m1-49h0m0 9h0m0 19h0m0 11h0m0 3h0m0 20h0m1-101h0m0 64h0m0 7h0m0 23h0m1-81h0m0 22h0m0 10h0m0 21h0m1-62h0m0 10h0m0 13h0m0 16h0m0 10h0m0 5h0m0 27h0m1-63h0m0 41h0m0 6h0m0 11h0m1-66h0m0 19h0m0 4h0m0 14h0m0 25h0m0 2h0m0 12h0m1-66h0m0 9h0m0 8h0m0 53h0m1-73h0m0 8h0m0 43h0m1-24h0m0 14h0m1-35h0m0 28h0m0 10h0m0 3h0m0 23h0m1-72h0m0 17h0m0 8h0m2-14h0m0 11h0m0 9h0m0 10h0m0 14h0m1-54h0m0 3h0m0 3h0m0 10h0m0 27h0m0 5h0m1-44h0m0 7h0m0 25h0m2-37h0m0 26h0m0 5h0m0 10h0m0 4h0m0 5h0m0 6h0m1-21h0m0 27h0m1-58h0m0 15h0m0 3h0m0 3h0m1-14h0m0 4h0m0 16h0m1-36h0m0 50h0m0 7h0m0 6h0m1-36h0m0 10h0m1-25h0m0 33h0m0 10h0m1-49h0m0 3h0m0 8h0m0 5h0m0 9h0m0 10h0m0 17h0m0 10h0m0 17h0m1-82h0m0 9h0m0 1h0m0 38h0m1-54h0m0 41h0m0 51h0m1-96h0m0 35h0m0 35h0m1-87h0m0 15h0m0 14h0m0 28h0m0 13h0m0 7h0m0 9h0m0 7h0m1-82h0m0 2h0m0 36h0m0 15h0m0 10h0m0 6h0m1-76h0m0 18h0m0 8h0m0 12h0m0 2h0m0 23h0m1-48h0m0 18h0m0 24h0m0 30h0m0 7h0m1-73h0m0 30h0m0 25h0m0 10h0m1-73h0m0 14h0m0 51h0m1-73h0m0 26h0m0 7h0m0 11h0m0 17h0m0 4h0m0 12h0m0 18h0m0 7h0m1-94h0m0 30h0m0 16h0m0 17h0m0 16h0m0 7h0m1-58h0m0 13h0m1-47h0m0 8h0m0 8h0m0 42h0m0 22h0m0 6h0m0 25h0m0 8h0m1-109h0m0 20h0m0 8h0m0 14h0m0 10h0m0 24h0m0 8h0m0 8h0m1-101h0m0 21h0m0 5h0m0 41h0m0 7h0m0 23h0m1-107h0m0 15h0m0 36h0m0 11h0m1-7h0m0 24h0m0 9h0m0 10h0m0 14h0m1-103h0m0 23h0m0 32h0m0 6h0m0 43h0m1-102h0m0 24h0m0 6h0m0 4h0m0 30h0m0 10h0m0 9h0m0 8h0m1-68h0m0 6h0m0 10h0m0 7h0m0 38h0m0 9h0m0 8h0m1-100h0m0 10h0m0 71h0m1-67h0m0 33h0m0 1h0m0 40h0m0 7h0m1-68h0m0 13h0m0 16h0m0 4h0m0 9h0m0 6h0m0 3h0m1-72h0m0 31h0m0 14h0m1-32h0m0 29h0m0 8h0m0 20h0m1-46h0m0 2h0m0 33h0m1-67h0m0 13h0m0 13h0m0 18h0m0 58h0m1-91h0m0 6h0m0 4h0m0 23h0m0 30h0m0 8h0m0 4h0m0 8h0m1-61h0m0 17h0m0 10h0m0 10h0m0 12h0m1-63h0m0 6h0m0 14h0m0 15h0m0 9h0m0 5h0m1-54h0m0 57h0m1-60h0m0 9h0m1 9h0m0 8h0m0 8h0m0 14h0m0 12h0m0 8h0m1-34h0m0 25h0m1-56h0m0 11h0m0 23h0m0 5h0m0 12h0m1-31h0m0 7h0m0 23h0m1-51h0m1 4h0m0 2h0m0 8h0m0 4h0m0 20h0m0 16h0m1-44h0m0 34h0m0 10h0m1-29h0m0 8h0m1-26h0m0 23h0m0 20h0m0 4h0m1-34h0m0 6h0m0 19h0m1-48h0m0 3h0m0 18h0m0 4h0m0 12h0m0 8h0m1-56h0m0 2h0m0 3h0m0 14h0m1 3h0m0 5h0m0 24h0m0 13h0m0 7h0m0 3h0m0 15h0m1-67h0m0 5h0m0 31h0m1-49h0m0 11h0m0 56h0m1-46h0m0 8h0m0 2h0m0 3h0m0 3h0m0 21h0m1-46h0m0 14h0m0 18h0m0 19h0m1-31h0m0 16h0m0 5h0m0 12h0m1-69h0m0 44h0m0 16h0m1-56h0m0 17h0m0 18h0m1-44h0m0 5h0m0 9h0m0 21h0m0 35h0m1-60h0m0 9h0m0 4h0m0 7h0m0 11h0m0 21h0m0 13h0m1-56h0m0 24h0m0 8h0m0 32h0m1-84h0m0 37h0m0 19h0m0 4h0m0 8h0m0 3h0m0 6h0m1-62h0m0 15h0m0 18h0m1-45h0m0 7h0m0 17h0m0 13h0m0 27h0m0 28h0m1-80h0m0 42h0m0 2h0m0 17h0m0 2h0m0 5h0m1-59h0m0 5h0m0 6h0m0 15h0m0 46h0m0 3h0m1-92h0m0 38h0m0 20h0m0 25h0m1-85h0m0 67h0m0 15h0m0 13h0m1-103h0m0 12h0m0 13h0m0 4h0m0 8h0m0 19h0m0 5h0m0 10h0m0 31h0m1-86h0m0 5h0m0 21h0m0 3h0m0 2h0m1 6h0m0 15h0m0 14h0m0 5h0m0 25h0m1-103h0m0 25h0m0 26h0m0 16h0m0 8h0m0 10h0m0 19h0m1-115h0m0 30h0m0 25h0m0 11h0m0 43h0m1-93h0m0 32h0m0 53h0m1-105h0m0 10h0m0 5h0m0 15h0m0 10h0m0 6h0m0 23h0m0 7h0m0 3h0m1-54h0m0 59h0m0 14h0m1-64h0m0 16h0m0 5h0m0 9h0m0 31h0m0 2h0m0 27h0m1-126h0m0 6h0m0 8h0m0 6h0m0 26h0m0 26h0m0 6h0m0 15h0m1-71h0m0 3h0m0 37h0m0 35h0m1-94h0m0 25h0m0 10h0m0 45h0m0 3h0m0 6h0m0 20h0m1-98h0m0 28h0m0 12h0m0 5h0m0 15h0m0 6h0m0 25h0m0 2h0m1-102h0m0 27h0m0 5h0m0 14h0m0 13h0m0 6h0m0 7h0m0 19h0m1-84h0m0 36h0m0 41h0m0 7h0m1-71h0m0 46h0m1-49h0m0 66h0m0 5h0m0 9h0m0 1h0m1-62h0m0 4h0m0 11h0m0 5h0m0 17h0m0 6h0m1-49h0m0 28h0m0 6h0m0 16h0m0 13h0m1-71h0m0 24h0m0 22h0m0 9h0m0 12h0m0 6h0m1-70h0m0 34h0m0 12h0m1-46h0m0 6h0m0 8h0m0 5h0m0 35h0m0 16h0m1-79h0m0 26h0m0 11h0m0 8h0m1-12h0m0 18h0m1-45h0m0 8h0m0 4h0m0 5h0m0 34h0m0 12h0m1-62h0m0 5h0m0 27h0m1-36h0m0 28h0m0 14h0m0 17h0m1-28h0m0 15h0m1-31h0m0 7h0m0 29h0m0 14h0m1-56h0m0 8h0m0 59h0m1-38h0m1-39h0m0 12h0m0 17h0m0 11h0m0 9h0m0 6h0m1-53h0m0 21h0m0 12h0m0 11h0m0 5h0m1-61h0m0 12h0m0 15h0m0 18h0m0 27h0m1-69h0m0 2h0m0 30h0m0 11h0m0 8h0m1-24h0m1-9h0m0 3h0m0 26h0m1-43h0m0 3h0m0 23h0m0 7h0m1-31h0m0 7h0m0 9h0m1-3h0m0 19h0m0 3h0m0 9h0m0 8h0m0 1h0m2-32h0m0 1h0m0 7h0m1 7h0m0 5h0m0 5h0m0 4h0m1-34h0m0 5h0m0 34h0m1-61h0m0 6h0m0 10h0m0 12h0m1-15h0m0 10h0m0 47h0m0 7h0m1-44h0m0 6h0m0 5h0m0 24h0m1-50h0m0 14h0m0 17h0m0 5h0m0 6h0m0 7h0m0 3h0m0 9h0m1-93h0m0 29h0m0 46h0m0 20h0m1-78h0m0 2h0m0 33h0m0 32h0m0 6h0m1-55h0m0 6h0m0 14h0m1-45h0m0 19h0m0 18h0m0 14h0m0 5h0m0 34h0m1-88h0m0 20h0m0 11h0m0 30h0m0 5h0m0 4h0m1-42h0m0 56h0m0 8h0m1-98h0m0 7h0m0 10h0m0 7h0m0 39h0m0 8h0m0 5h0m1-46h0m0 11h0m0 6h0m0 4h0m0 32h0m0 35h0m1-75h0m0 10h0m0 34h0m0 6h0m0 8h0m1-78h0m0 1h0m0 11h0m0 44h0m0 25h0m1-63h0m0 16h0m0 10h0m0 31h0m0 10h0m0 1h0m1-107h0m0 4h0m0 3h0m0 6h0m0 16h0m0 44h0m0 4h0m1-28h0m0 4h0m0 5h0m0 12h0m0 3h0m0 10h0m0 4h0m1-61h0m0 19h0m0 18h0m1-50h0m0 1h0m0 20h0m0 52h0m1-93h0m0 31h0m0 4h0m0 16h0m0 49h0m1-87h0m0 2h0m0 30h0m0 3h0m0 38h0m0 16h0m0 10h0m1-110h0m0 7h0m0 16h0m0 13h0m0 20h0m0 3h0m0 16h0m0 26h0m0 12h0m1-121h0m0 8h0m0 16h0m0 5h0m0 19h0m0 24h0m0 5h0m0 7h0m0 11h0m0 5h0m1-79h0m0 14h0m0 27h0m0 17h0m0 9h0m0 17h0m1-103h0m0 8h0m0 41h0m0 5h0m0 16h0m0 26h0m1-76h0m0 12h0m0 6h0m0 2h0m0 6h0m0 18h0m0 28h0m0 7h0m1-26h0m1-70h0m0 26h0m0 21h0m0 5h0m0 1h0m0 6h0m1-48h0m0 6h0m0 23h0m0 26h0m0 9h0m0 4h0m0 5h0m1-63h0m0 11h0m0 47h0m1-68h0m0 33h0m0 19h0m0 9h0m0 19h0m1-40h0m1-21h0m0 6h0m0 23h0m0 7h0m1-51h0m0 1h0m0 4h0m0 4h0m0 9h0m0 4h0m0 19h0m1-16h0m0 9h0m0 34h0m1-23h0m0 19h0m1-36h0m0 21h0m0 5h0m0 5h0m0 3h0m0 1h0m1-53h0m0 5h0m0 22h0m0 31h0m1-68h0m0 20h0m0 23h0m0 13h0m1-50h0m0 20h0m0 35h0m1-65h0m0 14h0m0 21h0m0 21h0m1-45h0m0 5h0m0 1h0m0 4h0m0 24h0m0 29h0m1-24h0m0 8h0m1-53h0m0 22h0m0 4h0m0 8h0m1-38h0m0 47h0m0 11h0m1-36h0m0 4h0m0 37h0m1-55h0m0 25h0m0 19h0m0 4h0m0 15h0m1-58h0m0 28h0m0 37h0m1-71h0m0 26h0m0 3h0m0 36h0m1-79h0m0 9h0m0 15h0m0 12h0m0 20h0m0 10h0m0 3h0m0 16h0m1-104h0m0 49h0m0 17h0m0 14h0m0 12h0m0 2h0m1-75h0m0 13h0m0 11h0m0 19h0m0 8h0m0 46h0m1-60h0m0 18h0m0 26h0m1-58h0m0 12h0m0 7h0m0 46h0m0 16h0m1-96h0m0 9h0m0 12h0m0 23h0m0 18h0m0 19h0m1-76h0m0 35h0m0 16h0m0 20h0m0 14h0m1-94h0m0 29h0m0 10h0m0 16h0m0 16h0m0 2h0m0 3h0m0 31h0m1-121h0m0 32h0m0 31h0m0 13h0m0 14h0m0 13h0m1-96h0m0 9h0m0 4h0m0 4h0m0 3h0m0 9h0m0 7h0m1 7h0m0 47h0m0 12h0m0 1h0m1-55h0m0 15h0m0 12h0m1-41h0m0 5h0m0 14h0m0 6h0m0 16h0m0 4h0m0 15h0m0 16h0m1-103h0m0 60h0m0 6h0m0 25h0m0 11h0m1-99h0m0 11h0m0 3h0m0 10h0m0 17h0m0 34h0m0 33h0m1-105h0m0 15h0m0 16h0m0 27h0m0 16h0m1-84h0m0 15h0m0 2h0m0 33h0m0 36h0m1-81h0m0 31h0m0 8h0m0 7h0m0 3h0m0 6h0m0 11h0m1-69h0m0 74h0m0 6h0m0 5h0m1-48h0m1-31h0m0 14h0m0 2h0m0 5h0m0 3h0m0 32h0m0 8h0m0 29h0m1-87h0m0 4h0m0 24h0m0 5h0m0 9h0m0 7h0m1-15h0m0 20h0m1-44h0m0 3h0m0 5h0m0 6h0m0 17h0m0 2h0m0 14h0m1-8h0m0 11h0m1-57h0m1 23h0m1-21h0m0 16h0m0 9h0m0 6h0m1-22h0m0 27h0m0 11h0m1-43h0m0 1h0m0 17h0m0 17h0m0 21h0m1-52h0m0 28h0m0 5h0m0 10h0m0 2h0m1-42h0m0 8h0m0 12h0m0 24h0m1-38h0m0 29h0m1-49h0m0 15h0m0 15h0m0 38h0m1-56h0m0 20h0m1-27h0m0 22h0m0 11h0m0 4h0m0 12h0m0 15h0m1-23h0m0 19h0m1-45h0m0 2h0m0 7h0m0 12h0m0 8h0m0 20h0m1-74h0m0 4h0m0 11h0m0 14h0m0 8h0m0 21h0m0 5h0m1-65h0m0 22h0m0 21h0m1-64h0m0 5h0m0 10h0m0 2h0m0 16h0m0 41h0m0 29h0m0 8h0m1-107h0m0 17h0m0 27h0m0 48h0m1-64h0m0 38h0m0 17h0m0 13h0m1-95h0m0 20h0m0 2h0m0 9h0m0 5h0m0 9h0m0 5h0m0 2h0m0 11h0m0 10h0m0 5h0m0 6h0m0 4h0m1-87h0m0 4h0m0 51h0m0 9h0m0 26h0m0 21h0m1-94h0m0 20h0m0 21h0m0 7h0m0 28h0m1-83h0m0 57h0m0 13h0m0 32h0m1-91h0m0 49h0m0 41h0m1-105h0m0 21h0m0 3h0m0 10h0m0 5h0m0 31h0m0 10h0m0 10h0m0 8h0m1-70h0m0 3h0m0 11h0m0 4h0m0 4h0m0 36h0m0 16h0m1-92h0m0 45h0m0 14h0m0 36h0m1-88h0m0 28h0m0 33h0m1-77h0m0 5h0m0 32h0m0 15h0m0 6h0m0 3h0m0 13h0m0 8h0m1-79h0m0 20h0m0 5h0m0 37h0m0 11h0m0 9h0m1-75h0m0 11h0m0 2h0m0 15h0m1-24h0m0 17h0m0 15h0m0 25h0m0 11h0m0 32h0m1-87h0m0 71h0m1-90h0m0 52h0m0 5h0m0 6h0m0 16h0m0 26h0m1-81h0m0 5h0m0 13h0m0 3h0m0 21h0m1-83h0m0 26h0m0 10h0m0 14h0m0 16h0m0 23h0m0 1h0m0 3h0m0 5h0m1-69h0m0 72h0m1-69h0m0 28h0m0 21h0m0 23h0m1-76h0m0 27h0m0 14h0m0 6h0m0 25h0m1-65h0m0 7h0m0 5h0m0 3h0m1-10h0m0 18h0m0 7h0m0 9h0m1-46h0m0 28h0m0 24h0m1-41h0m0 7h0m1-18h0m0 6h0m0 27h0m0 20h0m1-64h0m0 28h0m0 8h0m0 16h0m1-18h0m0 25h0m1-39h0m0 36h0m1-58h0m0 30h0m0 21h0m0 16h0m1-53h0m0 3h0m0 6h0m0 7h0m0 11h0m1-20h0m0 24h0m0 11h0m1 18h0m1-39h0m0 1h0m0 7h0m0 9h0m0 10h0m0 3h0m0 13h0m1-49h0m0 39h0m0 18h0m1-29h0m0 24h0m1-54h0m0 13h0m0 7h0m0 6h0m0 9h0m1-50h0m0 11h0m0 20h0m0 26h0m0 3h0m1-46h0m0 5h0m0 5h0m0 13h0m0 46h0m1-75h0m0 55h0m0 7h0m1-43h0m0 14h0m0 2h0m0 6h0m0 22h0m0 10h0m0 4h0m1-74h0m0 44h0m0 7h0m0 31h0m0 5h0m1-75h0m0 8h0m0 44h0m0 37h0m1-124h0m0 12h0m0 4h0m0 14h0m0 15h0m0 32h0m0 26h0m0 10h0m1-85h0m0 21h0m0 11h0m0 9h0m0 26h0m0 4h0m1-94h0m0 16h0m0 6h0m0 12h0m0 12h0m0 15h0m0 15h0m0 30h0m1-108h0m0 16h0m0 40h0m0 16h0m0 40h0m1-105h0m0 4h0m0 18h0m0 6h0m0 16h0m0 52h0m1-117h0m0 4h0m0 31h0m0 18h0m0 15h0m0 27h0m1-90h0m0 15h0m0 22h0m0 15h0m0 18h0m0 4h0m0 2h0m0 9h0m1-75h0m0 21h0m0 47h0m0 18h0m0 22h0m1-96h0m0 17h0m0 5h0m0 7h0m0 5h0m0 39h0m0 13h0m1-108h0m0 18h0m0 41h0m0 5h0m0 26h0m0 14h0m1-110h0m0 15h0m0 18h0m0 57h0m0 10h0m1-98h0m0 16h0m0 22h0m0 15h0m0 29h0m1-77h0m0 16h0m0 27h0m0 23h0m0 5h0m0 12h0m1-84h0m0 10h0m0 27h0m1-27h0m0 1h0m0 20h0m0 12h0m0 12h0m0 6h0m0 13h0m0 5h0m1-88h0m0 12h0m0 20h0m0 5h0m0 22h0m0 21h0m1-66h0m0 12h0m0 72h0m0 3h0m1-71h0m0 14h0m0 12h0m0 5h0m0 16h0m0 15h0m0 8h0m0 3h0m1-62h0m0 7h0m0 19h0m0 18h0m0 8h0m1-91h0m0 64h0m0 5h0m1-47h0m0 14h0m0 12h0m0 10h0m0 21h0m0 14h0m1-60h0m0 9h0m0 45h0m1-59h0m0 22h0m0 6h0m0 18h0m1-48h0m0 20h0m0 17h0m0 26h0m1-63h0m0 13h0m0 26h0m0 11h0m0 7h0m1-52h0m0 17h0m0 6h0m0 15h0m0 10h0m1-37h0m0 42h0m1-63h0m0 6h0m0 30h0m0 14h0m1-36h0m0 15h0m0 31h0m0 9h0m1-50h0m0 37h0m1-30h0m0 7h0m0 6h0m0 4h0m0 6h0m1-37h0m0 42h0m1-43h0m0 11h0m0 9h0m0 33h0m1-85h0m0 38h0m0 40h0m0 4h0m1-14h0m0 4h0m1-14h0m0 1h0m0 4h0m0 11h0m1-40h0m0 7h0m0 9h0m1-4h0m0 5h0m0 8h0m0 30h0m0 1h0m0 5h0m0 6h0m1-21h0m0 13h0m1-24h0m0 4h0m0 10h0m0 5h0m1-23h0m0 30h0m1-88h0m0 37h0m0 10h0m0 14h0m0 14h0m1-44h0m0 13h0m0 10h0m0 20h0m0 17h0m0 6h0m1-77h0m0 7h0m0 2h0m0 41h0m0 13h0m1-5h0m1-47h0m0 63h0m0 10h0m0 11h0m1-114h0m0 36h0m0 11h0m0 11h0m0 5h0m0 1h0m0 25h0m0 6h0m1-88h0m0 32h0m0 5h0m0 26h0m0 12h0m0 23h0m1-82h0m0 27h0m0 5h0m1 4h0m0 14h0m0 16h0m1-56h0m0 18h0m0 10h0m0 6h0m0 16h0m0 17h0m1-89h0m0 7h0m0 4h0m0 6h0m0 10h0m0 4h0m0 35h0m1-77h0m0 9h0m0 35h0m0 9h0m0 16h0m0 7h0m0 13h0m0 5h0m1-81h0m1-10h0m0 16h0m0 12h0m0 13h0m0 13h0m0 3h0m0 26h0m1-36h0m0 30h0m0 15h0m0 1h0m0 24h0m1-84h0m0 28h0m0 25h0m1-78h0m0 3h0m0 10h0m0 18h0m0 28h0m0 5h0m0 5h0m1-78h0m0 26h0m0 6h0m0 19h0m0 2h0m1 12h0m1-50h0m0 29h0m0 15h0m0 13h0m0 9h0m0 15h0m0 9h0m1-91h0m0 3h0m0 53h0m0 14h0m0 8h0m1-83h0m0 20h0m0 7h0m0 13h0m0 9h0m0 8h0m0 22h0m0 20h0m1-83h0m0 6h0m0 7h0m0 14h0m0 9h0m0 16h0m0 34h0m0 6h0m1-92h0m0 16h0m0 29h0m0 10h0m0 6h0m0 19h0m1-90h0m0 38h0m0 50h0m1-74h0m0 5h0m0 12h0m0 43h0m0 16h0m0 7h0m1-87h0m0 47h0m1-15h0m1-40h0m0 3h0m0 19h0m0 5h0m0 17h0m0 5h0m0 9h0m0 5h0m0 1h0m0 8h0m0 18h0m1-102h0m0 11h0m0 13h0m0 21h0m0 2h0m1-74h0m0 33h0m0 60h0m0 27h0m1-95h0m0 8h0m0 23h0m0 28h0m0 19h0m1-54h0m0 20h0m0 8h0m0 7h0m0 7h0m1-54h0m0 28h0m0 32h0m1-90h0m0 19h0m0 8h0m0 11h0m0 15h0m0 12h0m0 8h0m0 11h0m1-61h0m0 11h0m0 28h0m0 14h0m0 16h0m0 6h0m1-60h0m0 5h0m0 4h0m0 8h0m0 14h0m0 21h0m0 8h0m1-17h0m1-56h0m0 17h0m0 10h0m0 22h0m1-26h0m0 9h0m0 9h0m0 1h0m1-28h0m0 10h0m0 29h0m0 8h0m0 4h0m1-61h0m0 4h0m0 1h0m0 26h0m0 33h0m1-20h0m0 8h0m1-26h0m1-11h0m0 2h0m0 8h0m0 12h0m1-9h0m0 6h0m0 8h0m0 6h0m0 6h0m0 29h0m1-56h0m0 16h0m0 18h0m1-3h0m0 5h0m0 2h0m0 4h0m1-57h0m0 6h0m0 5h0m1-16h0m0 5h0m0 25h0m0 12h0m1-34h0m0 16h0m0 10h0m0 3h0m0 10h0m1-68h0m0 61h0m1-67h0m0 18h0m0 7h0m0 21h0m1-26h0m0 20h0m0 11h0m0 5h0m1-53h0m0 9h0m0 6h0m0 9h0m1 5h0m0 7h0m0 21h0m0 12h0m0 4h0m0 15h0m1-93h0m0 12h0m0 2h0m0 14h0m0 15h0m0 24h0m0 16h0m0 1h0m0 4h0m0 4h0m1-84h0m0 14h0m0 6h0m0 20h0m0 6h0m0 2h0m0 17h0m0 20h0m0 13h0m1-111h0m0 1h0m0 24h0m0 18h0m0 26h0m0 41h0m1-56h0m0 11h0m0 33h0m1-79h0m0 54h0m0 5h0m0 17h0m0 10h0m1-93h0m0 17h0m0 9h0m0 11h0m0 35h0m0 7h0m0 21h0m1-122h0m0 14h0m0 2h0m0 2h0m0 54h0m0 2h0m0 14h0m1-63h0m0 11h0m0 7h0m0 16h0m0 9h0m0 16h0m1-79h0m0 42h0m0 6h0m0 12h0m0 15h0m0 29h0m1-95h0m0 16h0m0 4h0m0 3h0m0 7h0m0 14h0m0 29h0m0 23h0m1-64h0m0 16h0m0 12h0m0 16h0m0 10h0m1-86h0m0 8h0m0 72h0m0 3h0m0 10h0m1-77h0m0 40h0m0 10h0m0 3h0m1-58h0m0 26h0m0 10h0m0 15h0m0 33h0m0 6h0m0 2h0m0 14h0m1-75h0m0 13h0m0 25h0m0 10h0m1-69h0m0 5h0m0 25h0m0 22h0m0 4h0m0 43h0m1-110h0m0 23h0m0 3h0m0 22h0m0 9h0m0 17h0m1-56h0m0 46h0m0 14h0m0 10h0m1-84h0m0 4h0m0 15h0m0 18h0m0 10h0m1-62h0m0 46h0m1-23h0m0 21h0m0 10h0m0 10h0m0 6h0m0 24h0m1-12h0m1-75h0m0 10h0m0 8h0m0 7h0m0 6h0m0 35h0m0 4h0m0 10h0m0 1h0m0 10h0m1-101h0m0 40h0m0 21h0m0 1h0m0 24h0m1-72h0m0 1h0m0 8h0m0 5h0m0 16h0m0 8h0m0 22h0m0 17h0m1-22h0m0 19h0m1-31h0m1-32h0m0 3h0m0 5h0m0 6h0m0 9h0m0 16h0m1-34h0m0 8h0m0 4h0m0 32h0m0 6h0m0 3h0m1-31h0m0 16h0m1-10h0m1-5h0m0 11h0m0 11h0m0 5h0m0 8h0m1-55h0m0 12h0m0 25h0m0 19h0m1-50h0m0 11h0m1-5h0m0 15h0m0 24h0m0 12h0m1-48h0m0 17h0m0 14h0m1-51h0m0 9h0m0 17h0m0 8h0m0 12h0m0 8h0m1-74h0m0 33h0m0 12h0m0 18h0m1-12h0m0 17h0m1-49h0m0 1h0m0 8h0m0 8h0m0 38h0m1-17h0m0 2h0m0 21h0m0 5h0m1-54h0m0 10h0m0 24h0m1-53h0m0 7h0m0 5h0m0 24h0m0 22h0m0 15h0m1-58h0m0 16h0m0 7h0m0 25h0m1-59h0m0 20h0m0 17h0m0 6h0m0 9h0m0 25h0m1-53h0m0 23h0m0 19h0m1-58h0m0 49h0m0 2h0m0 9h0m0 6h0m1-77h0m0 20h0m0 18h0m0 18h0m0 7h0m0 18h0m1-77h0m0 10h0m0 19h0m0 46h0m1-72h0m0 52h0m1-60h0m0 17h0m0 10h0m0 7h0m0 10h0m0 8h0m0 25h0m1-86h0m0 9h0m0 10h0m0 22h0m0 15h0m1-25h0m0 32h0m0 10h0m1-59h0m0 21h0m0 13h0m0 22h0m0 7h0m0 2h0m1-94h0m0 36h0m0 7h0m0 13h0m0 19h0m0 23h0m0 5h0m1-42h0m0 3h0m0 49h0m1-66h0m0 9h0m0 7h0m0 6h0m0 2h0m0 11h0m0 7h0m0 15h0m1-98h0m0 6h0m0 8h0m0 4h0m0 8h0m0 7h0m0 54h0m1-65h0m0 48h0m0 28h0m1-82h0m0 29h0m0 46h0m1-64h0m0 2h0m0 5h0m0 5h0m0 13h0m0 27h0m0 6h0m0 8h0m0 5h0m1-77h0m0 19h0m0 10h0m0 7h0m0 5h0m0 6h0m0 18h0m1-15h0m0 4h0m1-32h0m0 7h0m0 2h0m0 6h0m0 46h0m1-61h0m0 22h0m0 30h0m0 12h0m0 21h0m1-111h0m0 17h0m0 49h0m0 8h0m0 10h0m0 13h0m1-105h0m0 5h0m0 49h0m0 9h0m0 5h0m0 12h0m1-94h0m0 27h0m0 15h0m0 9h0m0 12h0m0 8h0m0 32h0m1-82h0m0 15h0m0 20h0m0 4h0m0 37h0m0 16h0m1-68h0m1-39h0m0 34h0m0 11h0m0 14h0m0 8h0m0 4h0m0 8h0m0 4h0m1-73h0m0 1h0m0 8h0m0 57h0m1-75h0m0 22h0m0 40h0m0 22h0m0 9h0m1-78h0m0 13h0m0 2h0m0 9h0m0 8h0m0 3h0m0 37h0m0 12h0m0 3h0m0 5h0m1-39h0m0 6h0m0 5h0m0 8h0m1-67h0m0 23h0m0 10h0m0 19h0m0 9h0m0 11h0m1-54h0m1-43h0m0 21h0m0 8h0m0 10h0m0 12h0m0 12h0m0 5h0m1 3h0m1-55h0m0 10h0m0 7h0m0 21h0m0 12h0m0 9h0m0 8h0m1-76h0m0 15h0m0 66h0m1-46h0m0 17h0m0 4h0m0 19h0m1-57h0m0 22h0m0 3h0m0 24h0m0 9h0m1-67h0m0 15h0m0 6h0m0 4h0m0 30h0m0 8h0m0 1h0m1-23h0m1-25h0m0 15h0m0 19h0m0 23h0m1-72h0m0 7h0m0 25h0m0 7h0m0 6h0m1 15h0m1-50h0m0 14h0m0 8h0m0 6h0m0 19h0m1-32h0m0 9h0m1-22h0m0 7h0m0 33h0m1-8h0m0 2h0m0 11h0m1-48h0m0 1h0m0 10h0m0 10h0m0 26h0m1-19h0m0 5h0m1-21h0m0 40h0m1-29h0m1-24h0m0 17h0m0 12h0m0 1h0m0 13h0m0 20h0m1-47h0m0 6h0m0 17h0m0 9h0m0 8h0m0 13h0m0 5h0m1-16h0m1-23h0m0 11h0m0 4h0m0 15h0m1-8h0m0 7h0m0 8h0m0 2h0m1-54h0m0 5h0m0 6h0m1-24h0m0 21h0m0 13h0m0 33h0m1-26h0m0 4h0m1-34h0m0 2h0m0 22h0m0 17h0m0 4h0m1-37h0m0 9h0m0 2h0m0 42h0m1-66h0m0 34h0m0 10h0m0 7h0m0 11h0m1-68h0m0 4h0m0 6h0m0 15h0m0 38h0m1-81h0m0 36h0m0 6h0m1-8h0m0 23h0m0 6h0m0 5h0m1-52h0m0 33h0m0 5h0m1-63h0m0 9h0m0 11h0m0 19h0m0 14h0m0 5h0m0 15h0m0 7h0m0 2h0m1-70h0m0 23h0m1-33h0m0 13h0m0 15h0m0 19h0m0 14h0m1-38h0m0 4h0m0 17h0m0 5h0m0 17h0m0 14h0m0 20h0m1-92h0m0 6h0m0 3h0m0 17h0m0 6h0m0 20h0m0 12h0m0 12h0m0 4h0m1-50h0m0 15h0m0 23h0m1-56h0m0 10h0m0 26h0m0 47h0m1-59h0m0 45h0m0 1h0m1-92h0m0 24h0m0 38h0m0 8h0m0 24h0m1-77h0m0 17h0m0 17h0m0 7h0m0 6h0m0 11h0m0 6h0m0 4h0m0 14h0m1-81h0m0 8h0m0 12h0m0 27h0m0 44h0m1-99h0m0 27h0m0 5h0m0 50h0m1-68h0m0 5h0m0 20h0m0 23h0m0 5h0m0 22h0m1-115h0m0 83h0m0 25h0m1-62h0m0 13h0m0 1h0m0 7h0m0 48h0m1-99h0m0 5h0m0 13h0m0 9h0m0 28h0m0 6h0m0 21h0m1-76h0m0 27h0m0 74h0m1-107h0m0 6h0m0 9h0m0 23h0m0 28h0m0 28h0m0 8h0m1-79h0m0 21h0m0 12h0m0 16h0m0 2h0m0 5h0m1-44h0m0 14h0m0 40h0m0 18h0m1-89h0m0 2h0m0 5h0m0 18h0m0 13h0m0 29h0m0 14h0m1-49h0m0 11h0m0 2h0m0 16h0m1-18h0m0 9h0m0 31h0m0 10h0m1-72h0m0 55h0m0 11h0m1-61h0m0 6h0m0 21h0m0 4h0m0 10h0m1-29h0m0 25h0m1 8h0m0 9h0m1-65h0m0 27h0m0 6h0m1-27h0m0 15h0m0 23h0m0 4h0m1-33h0m0 22h0m0 24h0m1-70h0m0 20h0m0 15h0m2-27h0m0 10h0m0 2h0m0 12h0m0 7h0m1-38h0m0 12h0m0 13h0m0 16h0m1-2h0m0 8h0m0 8h0m1-57h0m0 26h0m0 5h0m0 23h0m1-55h0m0 9h0m0 29h0m1-34h0m0 17h0m0 25h0m0 7h0m1-62h0m0 9h0m0 16h0m1 15h0m0 4h0m0 3h0m0 4h0m0 9h0m0 9h0m1-68h0m0 16h0m0 17h0m1-13h0m0 13h0m0 1h0m1-49h0m0 26h0m0 12h0m0 4h0m1 19h0m0 10h0m0 8h0m1-59h0m0 4h0m0 6h0m0 17h0m0 9h0m0 10h0m0 18h0m0 9h0m1-99h0m0 7h0m0 49h0m0 26h0m1-38h0m0 18h0m0 11h0m0 15h0m0 13h0m1-61h0m0 38h0m0 26h0m1-83h0m0 12h0m0 20h0m0 31h0m1-78h0m0 21h0m0 22h0m0 19h0m0 27h0m0 10h0m0 7h0m0 2h0m1-78h0m0 9h0m0 6h0m0 7h0m0 6h0m0 6h0m0 16h0m0 8h0m0 14h0m1-68h0m0 36h0m0 13h0m0 19h0m1-60h0m0 8h0m0 7h0m0 6h0m0 10h0m0 19h0m1-80h0m0 14h0m0 6h0m0 43h0m0 14h0m1-69h0m0 22h0m0 10h0m0 29h0m1-67h0m0 23h0m0 12h0m0 17h0m1-48h0m0 11h0m0 19h0m0 23h0m0 14h0m1-72h0m0 12h0m0 36h0m0 15h0m1-77h0m0 5h0m0 3h0m0 25h0m0 33h0m0 42h0m1-90h0m0 3h0m0 24h0m0 7h0m0 5h0m0 12h0m1-39h0m0 7h0m0 4h0m0 16h0m0 18h0m0 4h0m0 5h0m1-73h0m0 21h0m0 57h0m1-65h0m0 20h0m0 8h0m0 10h0m0 35h0m0 2h0m0 7h0m1-82h0m0 16h0m0 8h0m0 20h0m0 42h0m0 6h0m1-78h0m1-16h0m0 33h0m0 5h0m0 14h0m0 8h0m0 8h0m0 26h0m1-87h0m0 48h0m0 9h0m0 4h0m1-56h0m0 17h0m0 9h0m0 6h0m1-63h0m0 11h0m0 29h0m0 27h0m1-44h0m0 21h0m0 37h0m0 14h0m1-71h0m0 14h0m0 14h0m0 17h0m0 6h0m1-69h0m0 41h0m0 50h0m1-69h0m0 29h0m0 3h0m0 4h0m0 5h0m1-36h0m0 43h0m0 14h0m1-16h0m0 8h0m1-59h0m0 19h0m0 6h0m0 4h0m0 12h0m0 22h0m0 3h0m1-51h0m0 19h0m0 2h0m0 8h0m0 9h0m1-49h0m1 23h0m1-23h0m0 5h0m0 7h0m0 5h0m0 28h0m1-45h0m0 34h0m0 7h0m1-27h0m0 13h0m0 23h0m0 16h0m1-56h0m0 27h0m0 16h0m1-32h0m1-12h0m0 39h0m0 2h0m0 7h0m0 4h0m1-52h0m0 15h0m0 7h0m0 6h0m0 6h0m0 21h0m1 4h0m1-52h0m0 4h0m0 5h0m0 47h0m1-18h0m1-43h0m0 22h0m0 15h0m0 12h0m0 19h0m0 6h0m1-64h0m0 14h0m0 6h0m0 3h0m0 14h0m0 6h0m0 15h0m1-70h0m0 19h0m0 3h0m0 18h0m0 32h0m1-87h0m0 7h0m0 3h0m0 11h0m0 3h0m1 26h0m0 20h0m0 10h0m1-88h0m0 37h0m0 25h0m0 6h0m0 7h0m1-85h0m0 62h0m0 39h0m1-79h0m0 54h0m0 5h0m0 36h0m1-90h0m0 4h0m0 6h0m0 20h0m1-40h0m0 24h0m0 4h0m0 7h0m0 39h0m1-87h0m0 9h0m0 18h0m0 6h0m0 31h0m0 46h0m1-105h0m0 14h0m0 24h0m0 11h0m0 13h0m0 10h0m0 28h0m0 2h0m1-48h0m0 12h0m0 9h0m0 22h0m1-94h0m0 7h0m0 14h0m0 21h0m1-46h0m0 35h0m0 26h0m1-42h0m0 12h0m0 17h0m0 23h0m0 16h0m0 26h0m1-118h0m0 15h0m0 24h0m0 5h0m0 27h0m0 9h0m1-76h0m0 4h0m0 12h0m0 10h0m0 29h0m1-67h0m0 22h0m0 34h0m0 6h0m1-27h0m0 34h0m0 11h0m0 14h0m0 2h0m1-46h0m0 6h0m0 8h0m0 11h0m1-43h0m0 10h0m0 5h0m0 37h0m0 4h0m1-71h0m0 8h0m0 12h0m0 22h0m0 53h0m1-116h0m0 13h0m0 11h0m0 43h0m0 13h0m0 17h0m1-82h0m0 4h0m0 13h0m0 16h0m0 28h0m0 7h0m0 9h0m1-86h0m0 31h0m0 18h0m0 15h0m0 17h0m1-74h0m0 23h0m0 7h0m0 9h0m0 6h0m1-32h0m0 16h0m0 39h0m1-60h0m0 9h0m0 34h0m0 9h0m0 20h0m1-65h0m0 19h0m0 2h0m0 34h0m0 5h0m1-63h0m0 30h0m0 25h0m1-64h0m0 37h0m0 8h0m0 3h0m0 4h0m1-31h0m0 3h0m0 34h0m1-51h0m0 13h0m0 9h0m0 48h0m1-25h0m0 2h0m0 5h0m0 12h0m1-31h0m0 5h0m0 20h0m2-43h0m0 3h0m0 5h0m0 4h0m1-18h0m0 31h0m0 14h0m1-24h0m0 2h0m0 11h0m0 9h0m1-46h0m0 9h0m0 58h0m1-50h0m0 2h0m0 12h0m0 10h0m0 18h0m1-47h0m0 13h0m0 7h0m1-47h0m0 23h0m0 41h0m0 3h0m1-55h0m0 5h0m0 56h0m1-52h0m0 17h0m0 8h0m0 7h0m0 6h0m1-9h0m1-44h0m0 24h0m0 4h0m0 42h0m1-80h0m0 46h0m0 22h0m0 5h0m0 10h0m1-69h0m0 11h0m0 1h0m0 8h0m0 24h0m0 5h0m0 29h0m0 14h0m1-117h0m0 18h0m0 11h0m0 26h0m0 31h0m0 10h0m0 12h0m0 1h0m1-98h0m0 9h0m0 18h0m0 8h0m0 4h0m0 12h0m1-29h0m0 35h0m0 12h0m0 13h0m1-23h0m0 16h0m1-87h0m0 32h0m0 60h0m0 5h0m0 4h0m1-65h0m0 5h0m0 12h0m0 3h0m0 4h0m0 18h0m0 28h0m1-95h0m0 14h0m0 22h0m0 3h0m0 34h0m1-19h0m0 12h0m0 11h0m0 17h0m1-80h0m0 4h0m0 5h0m0 36h0m0 12h0m0 15h0m1-58h0m0 8h0m0 46h0m1-80h0m0 42h0m0 3h0m0 19h0m0 50h0m1-29h0m0 22h0m1-108h0m0 12h0m0 6h0m0 16h0m0 5h0m0 13h0m0 11h0m0 19h0m0 17h0m1-97h0m0 15h0m0 25h0m0 3h0m0 10h0m0 8h0m0 3h0m0 6h0m1-62h0m0 14h0m0 8h0m0 45h0m0 10h0m1-95h0m0 59h0m0 43h0m0 5h0m0 13h0m1-93h0m0 40h0m1-61h0m0 39h0m0 9h0m0 34h0m0 4h0m0 8h0m0 28h0m1-73h0m0 19h0m0 5h0m1-48h0m0 4h0m0 13h0m0 5h0m0 7h0m0 4h0m0 5h0m0 15h0m0 14h0m0 5h0m1-66h0m1-16h0m0 2h0m0 6h0m0 4h0m0 7h0m0 65h0m0 4h0m1-111h0m0 21h0m0 20h0m0 10h0m0 23h0m0 17h0m1-61h0m0 18h0m0 20h0m0 11h0m0 3h0m0 11h0m0 19h0m1-54h0m0 4h0m1-19h0m0 32h0m0 10h0m0 2h0m0 15h0m1-80h0m0 12h0m0 17h0m0 41h0m1-79h0m0 24h0m0 35h0m0 8h0m1-58h0m0 32h0m0 12h0m0 35h0m0 8h0m1-85h0m0 36h0m0 22h0m1-37h0m0 2h0m0 10h0m0 18h0m0 13h0m0 10h0m1-67h0m0 19h0m0 18h0m1-28h0m0 25h0m0 8h0m0 9h0m1-58h0m0 12h0m0 1h0m1-13h0m0 36h0m1-15h0m0 3h0m0 8h0m0 22h0m1-25h0m0 9h0m0 7h0m0 17h0m1-59h0m0 5h0m0 4h0m0 31h0m1-25h0m0 31h0m1-51h0m0 42h0m1-26h0m0 19h0m0 16h0m1-39h0m0 7h0m0 7h0m0 2h0m0 6h0m0 5h0m0 15h0m0 6h0m1-66h0m0 10h0m0 3h0m0 2h0m1 36h0m0 14h0m1-41h0m0 47h0m1-68h0m0 33h0m0 7h0m0 14h0m1-30h0m0 19h0m0 7h0m0 10h0m0 20h0m0 13h0m1-78h0m0 7h0m0 4h0m0 3h0m0 36h0m1-77h0m0 84h0m0 1h0m0 3h0m1-37h0m0 19h0m0 27h0m0 1h0m1-68h0m0 25h0m0 9h0m0 15h0m1-71h0m0 34h0m0 3h0m0 3h0m0 10h0m0 10h0m0 8h0m0 16h0m1-72h0m0 6h0m0 59h0m1-47h0m0 50h0m0 9h0m0 4h0m1-95h0m0 28h0m0 23h0m0 2h0m0 15h0m0 7h0m1-60h0m0 1h0m0 9h0m0 12h0m0 5h0m0 3h0m0 10h0m1-50h0m0 1h0m0 54h0m0 13h0m1-59h0m0 44h0m0 4h0m0 4h0m0 14h0m1-47h0m0 16h0m0 35h0m0 9h0m1-74h0m0 6h0m0 18h0m0 33h0m0 15h0m0 5h0m1-57h0m0 32h0m0 16h0m1-60h0m0 3h0m0 32h0m0 3h0m0 16h0m0 18h0m1-81h0m0 4h0m0 6h0m0 16h0m0 3h0m0 6h0m0 44h0m0 4h0m1-88h0m0 42h0m0 15h0m0 13h0m0 26h0m0 17h0m1-92h0m0 31h0m0 14h0m0 8h0m0 2h0m0 3h0m1-58h0m0 40h0m0 10h0m0 15h0m0 5h0m1-87h0m0 23h0m0 2h0m0 8h0m0 16h0m0 35h0m1-86h0m0 19h0m0 16h0m0 8h0m0 14h0m0 38h0m2-84h0m0 9h0m0 4h0m0 8h0m0 6h0m0 12h0m0 10h0m0 19h0m1-78h0m0 43h0m0 10h0m1-49h0m0 25h0m0 31h0m0 6h0m0 15h0m1-71h0m0 10h0m0 24h0m1-19h0m0 27h0m0 2h0m1-39h0m0 26h0m0 22h0m1-65h0m0 8h0m0 22h0m0 6h0m0 2h0m0 1h0m0 10h0m0 29h0m1-67h0m0 39h0m1-30h0m0 3h0m0 4h0m0 18h0m0 16h0m0 10h0m0 3h0m1-58h0m0 40h0m1-25h0m0 4h0m0 14h0m0 17h0m1-56h0m0 19h0m0 13h0m0 17h0m1-23h0m0 19h0m1-36h0m0 24h0m0 6h0m1-26h0m0 39h0m1-36h0m0 4h0m0 8h0m1 9h0m0 12h0m1-48h0m0 12h0m0 5h0m0 5h0m0 9h0m0 12h0m1-69h0m0 14h0m1 19h0m0 19h0m0 9h0m0 9h0m1-50h0m0 11h0m0 35h0m1-47h0m0 2h0m0 60h0m1-73h0m0 11h0m0 18h0m0 5h0m0 6h0m0 16h0m1-61h0m0 10h0m0 13h0m0 30h0m0 13h0m0 9h0m1-49h0m0 66h0m1-62h0m0 27h0m1-49h0m0 5h0m0 37h0m0 9h0m0 10h0m1-50h0m0 14h0m0 5h0m0 6h0m0 24h0m1-62h0m0 15h0m0 30h0m0 11h0m0 11h0m1-71h0m0 10h0m0 13h0m0 68h0m1-50h0m0 38h0m1-53h0m0 3h0m0 5h0m0 11h0m0 31h0m1-71h0m0 3h0m0 7h0m0 38h0m0 6h0m0 6h0m1-27h0m0 10h0m0 8h0m0 14h0m0 8h0m1-67h0m0 15h0m0 10h0m1-41h0m0 23h0m0 1h0m0 25h0m0 21h0m0 9h0m0 9h0m1-91h0m0 20h0m0 18h0m0 7h0m0 38h0m0 9h0m1-97h0m0 5h0m0 34h0m0 1h0m0 26h0m1-65h0m0 47h0m0 14h0m0 18h0m0 13h0m1-54h0m0 16h0m0 4h0m0 10h0m0 4h0m0 9h0m1-57h0m0 3h0m0 6h0m0 12h0m0 8h0m0 17h0m0 4h0m1-55h0m0 30h0m0 24h0m0 13h0m0 7h0m0 5h0m0 18h0m1-100h0m0 90h0m1-80h0m0 6h0m0 7h0m0 1h0m0 19h0m0 6h0m0 26h0m1 2h0m1-80h0m0 1h0m0 32h0m0 3h0m0 14h0m0 15h0m0 3h0m1-79h0m0 17h0m0 34h0m0 4h0m0 13h0m0 5h0m0 11h0m1-52h0m0 25h0m0 7h0m1-43h0m0 7h0m0 12h0m0 49h0m0 3h0m1-79h0m0 61h0m0 5h0m1-72h0m0 11h0m0 17h0m0 12h0m1-21h0m0 34h0m0 4h0m0 5h0m0 11h0m1-39h0m0 14h0m0 21h0m1-81h0m0 36h0m0 4h0m0 16h0m0 5h0m0 17h0m0 11h0m0 1h0m1-70h0m0 4h0m0 4h0m1-10h0m0 17h0m0 12h0m1 3h0m0 20h0m1-30h0m0 20h0m0 5h0m0 10h0m1 4h0m1-54h0m0 11h0m0 20h0m0 15h0m1-10h0m0 23h0m0 10h0m1-65h0m0 15h0m0 10h0m0 14h0m0 9h0m0 9h0m1-47h0m0 8h0m0 11h0m0 14h0m1-29h0m0 7h0m1 29h0m1-51h0m0 35h0m0 22h0m0 4h0m1-56h0m0 15h0m0 6h0m0 3h0m1-31h0m0 14h0m0 27h0m0 6h0m0 7h0m1-45h0m0 12h0m1-16h0m0 18h0m0 46h0m1-73h0m0 19h0m0 14h0m0 6h0m0 16h0m0 7h0m0 4h0m1-66h0m0 4h0m0 45h0m0 18h0m1-23h0m1-35h0m0 30h0m0 47h0m1-100h0m0 27h0m0 4h0m0 12h0m0 25h0m0 3h0m1-50h0m0 15h0m0 2h0m0 15h0m0 43h0m1-88h0m0 7h0m0 33h0m0 15h0m0 16h0m0 3h0m0 7h0m0 7h0m0 3h0m1-104h0m0 33h0m0 7h0m0 21h0m0 21h0m0 39h0m1-96h0m0 79h0m0 14h0m1-85h0m0 14h0m0 16h0m0 8h0m0 5h0m0 3h0m1-38h0m0 12h0m0 4h0m0 9h0m0 26h0m0 22h0m1-106h0m0 28h0m0 17h0m0 30h0m0 15h0m0 3h0m1-81h0m0 68h0m0 21h0m0 1h0m0 12h0m1-106h0m0 13h0m0 31h0m1-49h0m0 15h0m0 20h0m0 44h0m0 5h0m1-57h0m0 27h0m0 4h0m0 4h0m0 4h0m0 5h0m0 6h0m0 29h0m0 8h0m0 4h0m1-95h0m0 17h0m0 63h0m1-91h0m0 4h0m0 15h0m0 4h0m0 9h0m0 77h0m1-70h0m0 2h0m0 9h0m0 5h0m0 19h0m1-72h0m0 32h0m0 32h0m0 4h0m1-79h0m0 18h0m0 37h0m0 18h0m0 16h0m1-93h0m0 32h0m0 31h0m1-65h0m0 22h0m0 7h0m0 11h0m0 34h0m1-86h0m0 18h0m0 32h0m0 6h0m0 4h0m0 4h0m0 5h0m0 11h0m1-67h0m0 14h0m0 2h0m0 70h0m0 4h0m1-58h0m0 8h0m0 19h0m0 11h0m1-45h0m0 11h0m0 13h0m0 3h0m0 25h0m1-55h0m0 38h0m0 16h0m1-58h0m0 9h0m0 4h0m0 34h0m1-20h0m0 16h0m0 6h0m1-33h0m0 10h0m0 12h0m0 18h0m1-34h0m0 10h0m1 21h0m1-53h0m0 28h0m0 21h0m0 7h0m0 2h0m1-57h0m0 12h0m0 8h0m0 22h0m0 10h0m1-36h0m0 21h0m1-8h0m0 3h0m1-27h0m0 63h0m1-64h0m0 7h0m0 4h0m0 9h0m0 22h0m0 15h0m1-40h0m0 21h0m0 7h0m0 7h0m1-32h0m0 13h0m1-43h0m0 8h0m0 8h0m0 7h0m0 14h0m0 28h0m1-41h0m0 5h0m0 25h0m0 8h0m1-28h0m0 5h0m1-29h0m0 5h0m0 33h0m0 10h0m1-71h0m0 17h0m0 41h0m0 43h0m1-73h0m0 6h0m0 10h0m0 5h0m0 6h0m0 19h0m1 4h0m1-57h0m0 17h0m0 5h0m0 22h0m0 13h0m0 8h0m1-69h0m0 13h0m0 52h0m0 15h0m1-92h0m0 16h0m0 24h0m0 14h0m0 4h0m0 6h0m0 43h0m1-85h0m0 6h0m0 7h0m0 12h0m0 28h0m0 5h0m0 14h0m0 20h0m1-63h0m0 19h0m1-79h0m0 18h0m0 2h0m0 72h0m0 9h0m1-75h0m0 8h0m0 20h0m0 10h0m0 31h0m1-81h0m0 17h0m0 27h0m0 13h0m1-31h0m0 2h0m0 6h0m0 4h0m0 23h0m0 8h0m0 23h0m0 18h0m1-79h0m0 16h0m0 31h0m0 18h0m1-95h0m0 6h0m0 35h0m0 9h0m0 4h0m0 8h0m0 10h0m0 17h0m0 1h0m0 20h0m1-111h0m0 82h0m0 3h0m1-106h0m0 24h0m0 10h0m0 6h0m0 1h0m0 40h0m0 30h0m1-107h0m0 51h0m0 6h0m0 40h0m0 9h0m1-70h0m0 5h0m0 18h0m0 3h0m0 23h0m0 4h0m1-85h0m0 2h0m0 20h0m0 41h0m0 3h0m0 8h0m0 1h0m0 12h0m1-93h0m0 4h0m0 20h0m0 25h0m0 27h0m0 18h0m1-74h0m0 13h0m0 12h0m0 7h0m0 14h0m0 2h0m0 18h0m1-62h0m0 15h0m0 17h0m1-29h0m0 78h0m0 16h0m1-90h0m0 16h0m0 15h0m0 12h0m0 3h0m0 16h0m1-57h0m0 6h0m0 12h0m0 16h0m0 12h0m0 6h0m0 7h0m0 11h0m0 5h0m1-38h0m0 26h0m0 3h0m1-94h0m0 12h0m0 25h0m0 5h0m0 13h0m0 3h0m0 51h0m1-59h0m0 22h0m0 7h0m0 15h0m1-75h0m0 9h0m0 71h0m0 5h0m1-78h0m0 34h0m0 15h0m0 4h0m0 4h0m1-49h0m0 9h0m0 2h0m0 9h0m0 10h0m0 3h0m0 21h0m1-61h0m0 29h0m0 15h0m0 11h0m0 9h0m1-52h0m1-8h0m0 3h0m0 16h0m0 12h0m1-18h0m0 21h0m0 9h0m1-20h0m1-41h0m0 10h0m0 15h0m0 23h0m0 11h0m1-50h0m0 4h0m0 6h0m0 15h0m0 11h0m0 10h0m1-19h0m1 2h0m1-31h0m0 3h0m0 18h0m0 20h0m0 15h0m1-44h0m0 31h0m0 5h0m0 4h0m1-36h0m0 9h0m0 10h0m1 22h0m0 19h0m1-47h0m0 5h0m0 29h0m1-54h0m0 13h0m0 25h0m0 9h0m1-39h0m0 24h0m0 24h0m0 4h0m1-56h0m0 25h0m0 12h0m1-57h0m0 28h0m0 6h0m0 16h0m0 14h0m0 9h0m1-84h0m0 8h0m0 10h0m0 9h0m0 23h0m0 3h0m1-33h0m0 14h0m0 31h0m0 5h0m0 12h0m0 6h0m1-74h0m0 29h0m1-21h0m0 25h0m0 9h0m0 19h0m0 21h0m1-65h0m0 2h0m0 36h0m1-58h0m0 7h0m0 21h0m0 12h0m0 5h0m0 5h0m0 15h0m0 19h0m1-94h0m0 1h0m0 3h0m0 21h0m0 5h0m0 33h0m0 3h0m0 7h0m1-66h0m0 35h0m0 45h0m0 14h0m1-113h0m0 15h0m0 10h0m0 20h0m0 40h0m0 8h0m0 4h0m0 10h0m1-76h0m0 28h0m1-55h0m0 17h0m0 29h0m0 17h0m0 14h0m0 12h0m1-76h0m0 10h0m0 11h0m0 26h0m0 10h0m0 5h0m0 17h0m1-50h0m0 26h0m0 7h0m0 7h0m0 22h0m1-73h0m0 20h0m0 3h0m0 7h0m0 36h0m1-68h0m0 9h0m0 6h0m0 16h0m0 27h0m0 12h0m1-106h0m0 24h0m0 6h0m0 9h0m0 46h0m0 29h0m0 3h0m1-121h0m0 4h0m0 18h0m0 90h0m0 9h0m1-95h0m0 7h0m0 4h0m0 29h0m0 8h0m0 7h0m1-38h0m0 6h0m0 2h0m0 4h0m0 24h0m0 9h0m1-66h0m0 20h0m0 14h0m0 6h0m0 23h0m1-60h0m0 38h0m0 10h0m0 22h0m0 4h0m1-66h0m0 10h0m0 6h0m0 28h0m0 51h0m1-108h0m0 38h0m0 12h0m1-27h0m0 45h0m0 3h0m0 5h0m0 10h0m0 11h0m1-89h0m0 9h0m0 2h0m0 14h0m0 15h0m0 6h0m0 7h0m0 22h0m0 8h0m0 17h0m0 3h0m1-127h0m0 21h0m0 5h0m0 83h0m1-90h0m0 17h0m0 7h0m0 19h0m0 18h0m1-24h0m0 3h0m0 28h0m0 10h0m0 5h0m0 6h0m1-95h0m0 13h0m0 5h0m0 11h0m0 11h0m0 10h0m0 3h0m1-56h0m0 8h0m0 30h0m0 17h0m0 5h0m0 4h0m0 16h0m1-75h0m0 68h0m0 28h0m1-86h0m0 21h0m0 32h0m0 7h0m0 14h0m0 5h0m0 13h0m1-84h0m0 9h0m0 5h0m0 11h0m1-24h0m0 18h0m0 6h0m0 9h0m0 26h0m0 5h0m0 11h0m1-78h0m0 42h0m0 3h0m0 8h0m0 4h0m0 12h0m0 12h0m1-85h0m0 11h0m0 3h0m0 21h0m1-24h0m0 17h0m0 10h0m0 15h0m0 25h0m1-34h0m0 13h0m0 8h0m0 29h0m0 4h0m1-98h0m0 19h0m0 5h0m0 36h0m0 4h0m0 19h0m1-70h0m0 8h0m0 10h0m0 4h0m0 15h0m0 18h0m1-63h0m0 6h0m0 28h0m1-34h0m0 48h0m1-35h0m0 3h0m0 4h0m0 8h0m1 9h0m0 4h0m0 6h0m0 15h0m1-10h0m1-46h0m0 17h0m0 9h0m1-34h0m0 42h0m0 24h0m1-63h0m0 6h0m0 8h0m0 2h0m0 45h0m1-76h0m0 8h0m0 35h0m0 14h0m0 6h0m0 6h0m1-45h0m0 12h0m0 12h0m0 23h0m1-63h0m0 33h0m0 3h0m0 14h0m0 16h0m1-23h0m1-23h0m0 31h0m0 5h0m1-54h0m0 9h0m0 13h0m0 8h0m0 12h0m0 7h0m1-33h0m1 11h0m0 9h0m0 20h0m0 4h0m1-62h0m0 35h0m0 9h0m0 5h0m1-53h0m0 5h0m0 14h0m0 12h0m1-16h0m0 11h0m0 2h0m0 14h0m1-1h0m0 24h0m1-53h0m0 36h0m0 6h0m1-30h0m0 39h0m1-56h0m0 9h0m0 19h0m0 26h0m0 10h0m1-65h0m0 14h0m0 12h0m0 12h0m0 2h0m0 8h0m0 9h0m0 5h0m1-54h0m0 24h0m0 12h0m0 25h0m1-55h0m0 7h0m1 30h0m0 11h0m1-67h0m0 28h0m0 3h0m0 41h0m0 16h0m1-92h0m0 13h0m0 13h0m0 15h0m0 2h0m0 8h0m0 2h0m0 6h0m0 7h0m1-65h0m0 18h0m0 20h0m0 9h0m0 24h0m0 11h0m0 6h0m0 8h0m1-6h0m0 8h0m0 4h0m1-99h0m0 7h0m0 13h0m0 38h0m0 25h0m1-77h0m0 7h0m0 16h0m0 31h0m0 6h0m0 3h0m1-77h0m0 10h0m0 12h0m0 8h0m0 5h0m0 16h0m0 8h0m1-19h0m0 7h0m0 14h0m0 20h0m0 3h0m0 38h0m1-123h0m0 44h0m0 10h0m0 19h0m0 17h0m1-76h0m0 4h0m0 20h0m0 19h0m0 9h0m1-45h0m0 5h0m0 4h0m0 1h0m0 49h0m1-78h0m0 41h0m0 12h0m0 9h0m0 33h0m1-50h0m0 4h0m0 19h0m0 18h0m1-98h0m0 44h0m0 24h0m0 18h0m0 9h0m1-70h0m0 10h0m0 43h0m0 31h0m1-78h0m0 18h0m0 23h0m0 27h0m1-99h0m0 5h0m0 35h0m0 14h0m0 25h0m1-67h0m0 11h0m0 9h0m0 10h0m0 21h0m0 26h0m1-74h0m0 13h0m0 20h0m0 3h0m0 8h0m0 30h0m1-78h0m0 4h0m0 8h0m0 45h0m0 9h0m0 6h0m0 30h0m1-100h0m0 25h0m0 32h0m1-53h0m0 7h0m0 12h0m0 7h0m0 35h0m0 11h0m1-74h0m0 16h0m0 23h0m0 10h0m1-31h0m0 17h0m0 4h0m0 15h0m0 3h0m0 13h0m1-59h0m0 14h0m0 20h0m1 22h0m1-55h0m0 15h0m0 3h0m0 7h0m0 19h0m0 6h0m1-41h0m0 26h0m0 6h0m1-24h0m0 14h0m0 23h0m1-52h0m0 21h0m0 28h0m1-51h0m0 37h0m0 11h0m1-49h0m0 30h0m1-7h0m0 21h0m1-52h0m0 4h0m0 13h0m0 6h0m0 19h0m0 22h0m1-74h0m0 8h0m0 14h0m0 14h0m0 3h0m0 17h0m1-50h0m0 38h0m0 24h0m1-67h0m0 25h0m0 21h0m1-28h0m0 38h0m0 2h0m1-68h0m0 10h0m0 11h0m0 19h0m1-47h0m0 23h0m0 30h0m1-45h0m0 7h0m0 29h0m0 4h0m0 10h0m0 10h0m0 10h0m0 4h0m0 8h0m0 11h0m1-104h0m0 31h0m0 4h0m0 6h0m0 36h0m0 10h0m0 7h0m1-91h0m0 1h0m0 6h0m0 10h0m0 46h0m0 6h0m0 17h0m1-47h0m0 14h0m1-37h0m0 7h0m0 12h0m0 13h0m0 11h0m1-15h0m0 21h0m0 11h0m0 4h0m0 12h0m1-66h0m0 63h0m1-86h0m0 14h0m0 6h0m0 8h0m0 4h0m0 4h0m0 9h0m0 8h0m0 6h0m0 35h0m1-100h0m0 12h0m0 63h0m1-47h0m0 20h0m0 6h0m0 3h0m0 14h0m0 10h0m0 7h0m0 16h0m0 5h0m0 9h0m1-99h0m0 52h0m1-68h0m0 28h0m0 12h0m0 19h0m0 4h0m0 10h0m0 10h0m0 7h0m1-86h0m0 3h0m0 27h0m0 11h0m0 49h0m0 2h0m1-86h0m0 4h0m0 40h0m0 10h0m0 37h0m1-77h0m0 6h0m0 11h0m0 47h0m1-54h0m0 16h0m0 20h0m0 9h0m0 4h0m0 17h0m1-69h0m0 11h0m0 22h0m0 11h0m1-65h0m0 49h0m0 44h0m1-77h0m0 13h0m0 9h0m0 19h0m0 28h0m1-54h0m0 12h0m0 19h0m0 18h0m1-58h0m0 32h0m0 16h0m0 6h0m0 27h0m1-98h0m0 21h0m0 20h0m0 40h0m0 7h0m0 4h0m1-66h0m0 10h0m0 7h0m0 18h0m1-32h0m0 24h0m0 20h0m0 17h0m1-77h0m0 32h0m0 22h0m0 12h0m1-62h0m0 41h0m0 23h0m0 7h0m1-55h0m0 14h0m0 6h0m0 52h0m1-79h0m0 3h0m0 11h0m0 21h0m1-45h0m0 8h0m0 40h0m0 7h0m1-55h0m0 58h0m1-43h0m0 5h0m0 12h0m0 31h0m1-37h0m0 8h0m0 3h0m0 3h0m0 6h0m0 4h0m1 0h0m0 7h0m1-36h0m0 51h0m1-56h0m0 39h0m1-25h0m0 10h0m1-28h0m0 16h0m0 7h0m0 11h0m0 3h0m0 10h0m1-52h0m0 10h0m0 39h0m1-33h0m0 9h0m0 11h0m1-27h0m0 11h0m1-21h0m0 48h0m1-43h0m0 30h0m0 32h0m1-47h0m0 10h0m0 8h0m0 2h0m0 6h0m1-58h0m0 26h0m0 11h0m0 26h0m0 2h0m1-78h0m0 18h0m0 50h0m0 47h0m1-108h0m0 13h0m0 14h0m0 9h0m0 44h0m1-66h0m0 7h0m0 19h0m0 11h0m0 35h0m1-78h0m0 9h0m0 12h0m0 16h0m0 50h0m1-68h0m0 25h0m0 6h0m0 6h0m0 7h0m0 15h0m0 8h0m1-103h0m0 41h0m0 15h0m0 9h0m0 10h0m0 17h0m0 9h0m0 9h0m1-93h0m0 14h0m0 11h0m0 5h0m0 13h0m0 26h0m0 24h0m1-86h0m0 48h0m1 5h0m0 8h0m0 8h0m0 19h0m1-92h0m0 2h0m0 13h0m0 5h0m0 11h0m0 33h0m0 15h0m0 1h0m1-94h0m0 12h0m0 39h0m0 9h0m1-65h0m0 6h0m0 20h0m0 4h0m0 18h0m0 5h0m0 9h0m0 9h0m0 14h0m1-89h0m0 41h0m0 5h0m0 15h0m0 9h0m0 13h0m0 14h0m0 6h0m1-51h0m0 34h0m0 20h0m1-91h0m0 8h0m0 4h0m0 10h0m0 8h0m0 33h0m0 7h0m1-68h0m0 6h0m0 8h0m0 33h0m1-61h0m0 5h0m0 41h0m0 54h0m1-46h0m0 15h0m0 4h0m0 7h0m0 9h0m0 2h0m1-54h0m0 40h0m1-47h0m0 4h0m0 18h0m0 5h0m0 7h0m1-48h0m0 9h0m0 18h0m0 5h0m0 13h0m1-59h0m0 17h0m0 63h0m0 13h0m1-65h0m0 37h0m0 4h0m1-57h0m0 11h0m0 12h0m0 18h0m1-43h0m0 4h0m0 38h0m0 13h0m0 9h0m1-67h0m0 11h0m0 40h0m0 7h0m0 7h0m1-40h0m0 7h0m0 6h0m0 1h0m1-21h0m0 2h0m0 11h0m1-23h0m0 37h0m0 4h0m0 9h0m1-46h0m0 14h0m0 16h0m0 19h0m1-25h0m0 15h0m1-18h0m0 36h0m1-51h0m0 32h0m0 7h0m1-42h0m0 8h0m1 0h0m0 6h0m0 10h0m0 6h0m1-39h0m0 47h0m1-16h0m0 30h0m1-36h0m0 19h0m0 9h0m1-65h0m0 25h0m0 21h0m0 22h0m1-43h0m0 7h0m1 4h0m0 13h0m0 13h0m1-22h0m0 5h0m0 8h0m0 14h0m0 2h0m0 8h0m0 8h0m0 2h0m0 3h0m1-15h0m0 7h0m1-62h0m0 11h0m0 26h0m1-14h0m0 11h0m1-19h0m0 27h0m0 19h0m1-70h0m0 8h0m0 18h0m0 6h0m0 3h0m0 21h0m0 6h0m1-46h0m0 23h0m0 11h0m0 25h0m0 7h0m1-69h0m0 31h0m0 23h0m1-31h0m1-49h0m0 21h0m0 11h0m0 30h0m0 7h0m0 4h0m0 12h0m1-69h0m0 13h0m0 6h0m0 6h0m0 25h0m0 13h0m0 11h0m1-43h0m0 6h0m0 6h0m1-52h0m0 1h0m0 14h0m0 19h0m0 36h0m0 12h0m1-98h0m0 20h0m0 23h0m0 11h0m0 7h0m0 40h0m1-90h0m0 12h0m0 11h0m0 11h0m0 28h0m0 6h0m1-69h0m0 19h0m0 10h0m0 52h0m0 9h0m1-105h0m0 1h0m0 18h0m0 18h0m0 8h0m0 35h0m0 9h0m1-47h0m0 22h0m0 6h0m0 4h0m0 16h0m0 5h0m0 3h0m0 3h0m0 17h0m1-64h0m0 4h0m0 53h0m0 20h0m1-61h0m0 12h0m0 16h0m0 29h0m1-96h0m0 20h0m0 14h0m0 10h0m0 11h0m0 7h0m1-84h0m0 29h0m0 43h0m0 16h0m0 9h0m1-99h0m0 11h0m0 5h0m0 23h0m0 15h0m0 14h0m1-45h0m0 14h0m0 20h0m0 22h0m0 6h0m1-75h0m0 5h0m0 28h0m0 6h0m0 3h0m0 8h0m0 9h0m1-5h0m0 27h0m0 8h0m1-60h0m0 6h0m0 50h0m1-62h0m0 35h0m0 7h0m0 13h0m0 2h0m0 10h0m0 21h0m0 7h0m1-91h0m0 11h0m0 29h0m0 8h0m1-71h0m0 43h0m0 7h0m0 19h0m0 43h0m1-99h0m0 42h0m0 34h0m0 10h0m0 7h0m1-95h0m0 10h0m0 9h0m0 10h0m0 8h0m0 41h0m0 1h0m1-88h0m0 16h0m0 9h0m0 34h0m0 13h0m0 5h0m0 3h0m1-29h0m0 12h0m0 5h0m1-39h0m0 4h0m0 23h0m0 28h0m1-59h0m0 17h0m0 32h0m1-55h0m0 31h0m1-12h0m0 22h0m0 9h0m0 10h0m1-65h0m0 11h0m0 22h0m0 9h0m1-42h0m0 8h0m0 10h0m0 13h0m0 21h0m1-36h0m0 44h0m1-25h0m0 5h0m1-34h0m0 16h0m0 4h0m0 21h0m1-51h0m0 15h0m0 19h0m0 23h0m0 8h0m1-18h0m0 23h0m1-52h0m0 4h0m0 37h0m1-61h0m0 37h0m0 6h0m0 5h0m0 6h0m0 14h0m0 15h0m1-24h0m1-49h0m0 4h0m0 7h0m0 9h0m1 3h0m0 20h0m0 18h0m1-62h0m0 19h0m0 19h0m0 21h0m1-45h0m0 11h0m0 5h0m0 13h0m0 7h0m0 4h0m1-68h0m0 11h0m0 10h0m1-20h0m0 45h0m0 5h0m0 14h0m0 6h0m0 15h0m0 16h0m1-86h0m0 11h0m0 30h0m0 19h0m0 5h0m1-72h0m0 28h0m0 3h0m0 4h0m0 29h0m1-75h0m0 9h0m0 25h0m0 31h0m0 16h0m1-68h0m0 7h0m0 36h0m0 14h0m0 3h0m0 8h0m0 19h0m1-77h0m0 3h0m0 26h0m1-46h0m0 32h0m0 24h0m0 6h0m0 23h0m0 10h0m1-89h0m0 5h0m0 12h0m0 19h0m0 32h0m1-40h0m0 59h0m1-100h0m0 36h0m0 9h0m0 10h0m0 19h0m0 4h0m0 2h0m1-60h0m0 34h0m0 6h0m0 5h0m0 46h0m1-126h0m0 9h0m0 16h0m0 13h0m0 4h0m0 16h0m0 25h0m0 20h0m0 10h0m1-97h0m0 9h0m0 6h0m0 42h0m0 23h0m1-99h0m0 4h0m0 11h0m0 34h0m0 17h0m0 33h0m0 8h0m0 6h0m0 2h0m1-104h0m0 6h0m0 4h0m0 15h0m0 2h0m0 42h0m1-43h0m0 2h0m0 15h0m0 3h0m0 13h0m0 15h0m0 12h0m1-53h0m0 46h0m1 1h0m0 5h0m1-71h0m0 21h0m0 17h0m0 1h0m0 11h0m0 5h0m0 6h0m0 15h0m0 15h0m1-92h0m0 24h0m0 3h0m0 52h0m0 11h0m1-53h0m0 8h0m0 22h0m0 5h0m0 42h0m1-124h0m0 16h0m0 23h0m0 4h0m1-42h0m0 28h0m0 21h0m0 14h0m0 9h0m0 14h0m0 17h0m1-68h0m0 23h0m0 9h0m1-79h0m0 22h0m0 11h0m0 10h0m0 17h0m0 49h0m1-94h0m0 6h0m0 5h0m0 12h0m0 15h0m0 35h0m1-63h0m0 42h0m0 28h0m0 8h0m0 6h0m1-98h0m0 27h0m0 11h0m0 34h0m1-32h0m0 20h0m0 4h0m0 23h0m1-66h0m0 12h0m0 15h0m0 3h0m0 14h0m0 3h0m0 8h0m1-71h0m0 24h0m0 12h0m1-24h0m0 1h0m0 20h0m0 7h0m0 30h0m1-54h0m0 32h0m0 4h0m0 16h0m1-53h0m0 8h0m0 6h0m0 17h0m0 8h0m1 4h0m1-41h0m0 8h0m0 9h0m0 10h0m0 8h0m0 14h0m1-27h0m0 34h0m1-44h0m0 31h0m0 11h0m1-50h0m0 28h0m0 13h0m1-43h0m0 14h0m0 22h0m1-32h0m0 19h0m0 8h0m0 8h0m0 3h0m1-15h0m0 11h0m0 10h0m0 2h0m1-66h0m0 14h0m0 5h0m0 6h0m0 7h0m0 31h0m1-59h0m0 10h0m0 21h0m0 10h0m1-15h0m1-7h0m0 27h0m1-30h0m0 7h0m0 13h0m1-30h0m0 38h0m0 6h0m0 11h0m1-58h0m0 37h0m0 17h0m1-46h0m0 14h0m0 5h0m0 24h0m1-35h0m1-26h0m0 3h0m0 40h0m0 12h0m1-42h0m0 25h0m0 12h0m1-64h0m0 21h0m0 16h0m0 28h0m1-54h0m0 7h0m0 23h0m0 3h0m0 5h0m0 9h0m0 18h0m0 3h0m1-86h0m0 32h0m0 3h0m0 4h0m0 18h0m1-63h0m0 22h0m0 3h0m0 10h0m0 48h0m0 8h0m1-86h0m0 42h0m0 3h0m0 34h0m1-70h0m0 12h0m0 41h0m0 9h0m1-60h0m0 3h0m0 15h0m0 24h0m0 7h0m0 8h0m0 6h0m0 18h0m1-78h0m0 35h0m0 5h0m0 46h0m1-100h0m0 30h0m0 6h0m0 2h0m0 44h0m0 3h0m0 7h0m1-82h0m0 10h0m0 7h0m0 25h0m0 24h0m0 26h0m0 6h0m1-109h0m0 42h0m0 4h0m0 20h0m0 7h0m1-56h0m1-5h0m0 20h0m0 19h0m0 8h0m0 4h0m0 23h0m0 2h0m1-12h0m0 16h0m0 20h0m1-102h0m0 16h0m0 3h0m0 11h0m0 3h0m0 13h0m0 14h0m0 10h0m0 2h0m0 6h0m1-53h0m0 15h0m0 10h0m0 35h0m0 4h0m1-103h0m0 10h0m0 1h0m0 14h0m0 3h0m0 18h0m0 14h0m0 17h0m0 30h0m1-91h0m0 52h0m0 21h0m0 21h0m1-91h0m0 18h0m0 13h0m0 5h0m0 18h0m0 12h0m0 19h0m1-96h0m0 30h0m0 59h0m1-76h0m0 12h0m0 31h0m0 16h0m0 11h0m0 9h0m1-73h0m0 15h0m0 7h0m0 4h0m0 22h0m0 42h0m1-78h0m0 20h0m0 8h0m0 24h0m1-62h0m0 11h0m0 6h0m0 12h0m0 23h0m0 14h0m0 11h0m0 10h0m1-55h0m0 12h0m0 13h0m0 4h0m0 17h0m1-9h0m0 22h0m1-88h0m0 12h0m0 8h0m0 24h0m1-37h0m0 6h0m0 38h0m1-50h0m0 1h0m0 21h0m0 9h0m0 4h0m0 6h0m0 7h0m0 16h0m1-68h0m0 17h0m0 50h0m1-66h0m0 21h0m0 9h0m1-19h0m0 31h0m0 15h0m0 4h0m1-64h0m0 50h0m0 4h0m1-36h0m0 7h0m0 3h0m0 10h0m1 8h0m0 8h0m0 5h0m0 10h0m0 3h0m0 6h0m1-56h0m0 12h0m0 7h0m1-30h0m0 52h0m1-18h0m0 7h0m1 25h0m1-48h0m0 8h0m0 21h0m0 9h0m1-49h0m0 7h0m0 45h0m0 4h0m1-60h0m0 20h0m0 8h0m0 7h0m0 4h0m0 7h0m1-36h0m1-24h0m0 12h0m0 15h0m0 6h0m0 25h0m0 2h0m1-41h0m0 2h0m0 19h0m0 6h0m1-42h0m0 44h0m1-56h0m0 4h0m0 13h0m0 43h0m0 16h0m1-71h0m0 12h0m0 7h0m0 11h0m0 3h0m0 20h0m0 6h0m1-70h0m0 34h0m0 17h0m0 4h0m0 23h0m1-98h0m0 26h0m0 10h0m0 9h0m0 43h0m0 15h0m1-45h0m0 16h0m0 20h0m0 26h0m1-100h0m0 22h0m0 5h0m0 21h0m0 13h0m1-64h0m0 13h0m0 4h0m0 27h0m0 17h0m0 17h0m0 12h0m0 6h0m0 8h0m1-78h0m0 9h0m0 13h0m0 19h0m0 3h0m0 15h0m0 16h0m1-94h0m0 3h0m0 12h0m1-24h0m0 4h0m0 31h0m0 8h0m0 21h0m0 11h0m0 7h0m1-64h0m0 40h0m0 15h0m0 16h0m1-44h0m0 8h0m0 25h0m0 20h0m0 4h0m1-78h0m0 13h0m0 49h0m1-58h0m0 2h0m0 11h0m0 6h0m0 16h0m0 6h0m0 22h0m0 17h0m1-55h0m0 5h0m0 26h0m0 19h0m1-107h0m0 27h0m0 38h0m0 5h0m1-46h0m0 8h0m0 4h0m0 4h0m0 6h0m0 11h0m0 19h0m0 26h0m1-54h0m0 27h0m0 6h0m0 22h0m1-64h0m0 47h0m0 5h0m0 5h0m0 11h0m1-54h0m0 16h0m0 44h0m1-85h0m0 5h0m0 18h0m0 12h0m1-41h0m0 19h0m0 12h0m0 3h0m0 6h0m0 12h0m0 7h0m0 9h0m0 6h0m1 7h0m1-48h0m0 15h0m0 18h0m0 20h0m0 9h0m1-77h0m0 8h0m0 7h0m0 11h0m0 10h0m0 8h0m0 21h0m1-75h0m0 53h0m0 28h0m1-20h0m1-55h0m0 11h0m0 3h0m0 10h0m0 12h0m1-5h0m0 11h0m0 9h0m0 9h0m1-57h0m0 18h0m0 28h0m0 11h0m0 3h0m1-55h0m0 9h0m0 8h0m1-29h0m0 13h0m0 49h0m1-57h0m0 28h0m0 11h0m0 4h0m0 4h0m1-24h0m0 12h0m0 17h0m1-39h0m0 4h0m0 29h0m1-42h0m1 23h0m0 10h0m0 4h0m0 16h0m1-49h0m0 15h0m0 10h0m1-30h0m0 7h0m0 37h0m0 3h0m1-63h0m0 44h0m0 11h0m1-43h0m0 15h0m0 4h0m0 7h0m0 14h0m0 11h0m1-57h0m0 6h0m0 47h0m0 6h0m0 1h0m0 13h0m1-58h0m0 16h0m0 11h0m0 18h0m1-40h0m0 2h0m0 45h0m1-57h0m0 27h0m0 31h0m1-70h0m0 9h0m0 8h0m0 11h0m0 8h0m0 14h0m1-51h0m0 75h0m1-35h0m0 5h0m0 4h0m0 3h0m0 4h0m0 6h0m1-58h0m0 11h0m0 10h0m0 7h0m1-1h0m0 26h0m0 14h0m0 3h0m0 3h0m1-68h0m0 12h0m0 12h0m0 15h0m0 18h0m1-93h0m0 91h0m1-90h0m0 28h0m0 18h0m0 18h0m0 4h0m0 45h0m1-98h0m0 3h0m0 20h0m0 15h0m0 21h0m0 4h0m0 9h0m0 16h0m1-98h0m0 12h0m0 3h0m0 2h0m0 3h0m0 8h0m0 9h0m0 26h0m0 30h0m1-98h0m0 25h0m0 6h0m0 27h0m0 4h0m0 25h0m1-85h0m0 47h0m0 17h0m1-51h0m0 19h0m0 7h0m0 39h0m0 2h0m0 12h0m0 12h0m0 2h0m0 15h0m1-70h0m0 36h0m0 3h0m0 14h0m1-83h0m0 26h0m0 9h0m0 17h0m0 34h0m1-83h0m0 5h0m0 7h0m0 8h0m0 15h0m0 10h0m0 26h0m0 3h0m0 15h0m1-94h0m0 62h0m0 7h0m0 20h0m1-44h0m1-20h0m0 6h0m0 27h0m0 23h0m1-65h0m0 6h0m0 13h0m0 12h0m0 4h0m0 2h0m0 35h0m0 19h0m1-94h0m0 26h0m0 22h0m0 3h0m0 1h0m0 9h0m0 2h0m0 3h0m0 7h0m0 1h0m0 10h0m1-94h0m0 23h0m0 4h0m0 1h0m0 11h0m0 24h0m0 3h0m0 15h0m3-208h0m0 24h0m0 5h0m0 4h0m0 9h0m0 2h0m0 1h0m0 5h0m0 1h0m0 4h0m0 3h0m0 1h0m0 1h0m0 4h0m0 1h0m0 3h0m0 4h0m0 2h0m0 2h0m0 1h0m0 4h0m0 2h0m0 3h0m0 5h0m0 5h0m0 1h0m0 5h0m0 2h0m0 1h0m0 7h0m0 1h0m0 5h0m0 7h0m0 4h0m0 6h0m0 5h0m1-152h0m0 38h0m0 10h0m0 4h0m0 67h0m0 1h0m0 2h0m0 6h0m0 5h0m0 24h0m0 2h0m0 25h0m0 7h0m1-185h0m0 15h0m0 53h0m0 105h0m1-164h0m0 18h0m0 10h0m0 23h0m0 57h0m0 2h0m0 16h0m0 5h0m0 2h0m0 3h0m0 2h0m1-124h0m0 18h0m0 7h0m0 4h0m0 13h0m0 11h0m0 13h0m0 14h0m0 5h0m0 7h0m0 13h0m0 3h0m0 18h0m1-130h0m0 13h0m0 40h0m0 14h0m0 8h0m0 2h0m0 3h0m0 1h0m0 11h0m1-65h0m0 8h0m0 1h0m0 24h0m0 45h0m1-61h0m0 13h0m1-5h0m1-10h0m1 10h0m1-51h0m0 15h0m0 7h0m1 4h0m1-7h0m0 65h0m1-79h0m0 40h0m0 18h0m0 5h0m1-55h0m0 27h0m0 20h0m0 13h0m0 14h0m0 1h0m0 19h0m1-106h0m0 10h0m0 18h0m0 20h0m0 3h0m0 2h0m0 22h0m0 21h0m0 30h0m1-168h0m0 5h0m0 17h0m0 8h0m0 14h0m0 29h0m0 4h0m0 22h0m0 15h0m0 8h0m0 14h0m0 5h0m0 3h0m0 30h0m1-142h0m0 1h0m0 9h0m0 23h0m0 10h0m0 28h0m0 32h0m0 12h0m1-120h0m0 31h0m0 2h0m0 3h0m0 45h0m0 14h0m0 9h0m0 20h0m0 9h0m0 10h0m0 8h0m1-129h0m0 23h0m0 12h0m0 5h0m0 28h0m0 16h0m0 2h0m0 4h0m0 13h0m1-105h0m0 31h0m0 9h0m0 8h0m0 16h0m0 15h0m0 4h0m0 24h0m0 2h0m0 3h0m1-143h0m0 20h0m0 16h0m0 2h0m0 11h0m0 35h0m0 9h0m0 3h0m0 28h0m0 5h0m0 4h0m0 19h0m1-107h0m0 6h0m0 2h0m0 73h0m0 16h0m1-122h0m0 7h0m0 30h0m0 20h0m0 12h0m0 16h0m1-38h0m0 33h0m1-72h0m0 52h0m1-22h0m0 21h0m2-12h0m1 3h0m1-36h0m1 18h0m0 10h0m0 22h0m0 10h0m1-23h0m0 8h0m1-62h0m0 22h0m0 6h0m0 15h0m0 8h0m0 27h0m0 54h0m1-140h0m0 14h0m0 6h0m0 15h0m0 2h0m0 10h0m0 22h0m0 12h0m0 7h0m0 4h0m0 5h0m0 24h0m1-149h0m0 22h0m0 3h0m0 7h0m0 6h0m0 8h0m0 12h0m0 3h0m0 10h0m0 5h0m0 1h0m0 7h0m0 10h0m0 14h0m0 21h0m0 6h0m0 4h0m0 5h0m0 1h0m0 25h0m1-160h0m0 12h0m0 31h0m0 34h0m0 6h0m0 4h0m0 4h0m0 35h0m0 27h0m0 20h0m1-144h0m0 6h0m0 57h0m0 31h0m0 19h0m1-143h0m0 27h0m0 6h0m0 22h0m0 4h0m0 3h0m0 5h0m0 28h0m0 10h0m0 6h0m0 2h0m0 7h0m0 11h0m0 8h0m0 8h0m1-129h0m0 6h0m0 16h0m0 10h0m0 23h0m0 22h0m0 11h0m0 4h0m0 49h0m1-157h0m0 77h0m0 14h0m0 8h0m0 21h0m1-77h0m1 8h0m0 30h0m0 5h0m1-61h0m0 25h0m0 17h0m0 9h0m1-37h0m0 23h0m1-47h0m2 9h0m0 2h0m0 11h0m0 6h0m0 14h0m0 28h0m1-36h0m0 5h0m0 10h0m0 5h0m0 7h0m0 7h0m0 6h0m0 16h0m0 22h0m1-135h0m0 38h0m0 16h0m0 14h0m0 17h0m0 5h0m0 16h0m0 11h0m0 19h0m1-130h0m0 13h0m0 4h0m0 4h0m0 4h0m0 34h0m0 7h0m0 8h0m0 19h0m0 8h0m0 2h0m0 27h0m1-172h0m0 32h0m0 19h0m0 10h0m0 12h0m0 6h0m0 4h0m0 46h0m0 10h0m0 19h0m0 13h0m1-131h0m0 7h0m0 1h0m0 15h0m0 77h0m0 16h0m0 6h0m0 16h0m1-152h0m0 6h0m0 3h0m0 11h0m0 2h0m0 4h0m0 2h0m0 23h0m0 4h0m0 7h0m0 27h0m0 10h0m0 19h0m0 4h0m1-92h0m0 32h0m0 6h0m0 1h0m0 8h0m0 1h0m0 2h0m0 7h0m0 7h0m0 14h0m0 3h0m0 17h0m0 1h0m0 25h0m1-114h0m0 5h0m0 14h0m0 6h0m0 5h0m0 30h0m0 4h0m0 47h0m2-54h0m1-49h0m0 6h0m0 35h0m1 1h0m0 9h0m0 7h0m1-30h0m1-47h0m0 49h0m1-27h0m0 12h0m0 10h0m0 37h0m1-45h0m0 33h0m0 14h0m1-74h0m0 58h0m0 21h0m0 10h0m1-151h0m0 31h0m0 20h0m0 28h0m0 4h0m0 23h0m0 8h0m0 2h0m1-68h0m0 5h0m0 6h0m0 11h0m0 13h0m0 12h0m0 33h0m0 19h0m1-120h0m0 12h0m0 5h0m0 57h0m0 6h0m1-108h0m0 8h0m0 7h0m0 20h0m0 6h0m0 25h0m0 11h0m0 17h0m0 26h0m0 12h0m0 11h0m0 16h0m1-128h0m0 21h0m0 32h0m0 5h0m0 9h0m0 13h0m0 13h0m0 4h0m0 12h0m0 7h0m0 5h0m1-134h0m0 7h0m0 13h0m0 19h0m0 18h0m0 3h0m0 55h0m0 7h0m0 11h0m1-148h0m0 25h0m0 65h0m0 11h0m0 15h0m0 42h0m1-152h0m0 27h0m0 6h0m0 3h0m0 5h0m0 6h0m0 4h0m0 4h0m0 6h0m0 14h0m0 14h0m0 11h0m0 7h0m0 21h0m1-85h0m0 27h0m0 32h0m0 11h0m1-56h0m0 22h0m0 16h0m0 23h0m2-45h0m0 11h0m0 20h0m0 18h0m1-4h0m0 7h0m1-35h0m0 1h0m0 6h0m0 12h0m0 5h0m0 16h0m0 40h0m1-102h0m0 69h0m0 4h0m0 1h0m0 4h0m0 8h0m0 6h0m1-84h0m0 2h0m0 50h0m0 6h0m0 9h0m0 7h0m0 7h0m0 7h0m0 5h0m0 4h0m0 11h0m0 5h0m0 6h0m1-112h0m0 2h0m0 16h0m0 5h0m0 54h0m0 39h0m1-149h0m0 2h0m0 14h0m0 29h0m0 16h0m0 11h0m0 12h0m0 44h0m0 1h0m0 13h0m0 1h0m1-136h0m0 15h0m0 8h0m0 36h0m0 2h0m0 49h0m0 5h0m0 2h0m0 2h0m0 8h0m1-165h0m0 57h0m0 6h0m0 6h0m0 2h0m0 10h0m0 9h0m0 32h0m0 6h0m0 8h0m0 48h0m1-141h0m0 35h0m0 6h0m0 36h0m0 13h0m0 7h0m0 4h0m0 20h0m1-76h0m0 19h0m0 3h0m0 53h0m0 16h0m0 1h0m1-131h0m0 21h0m0 32h0m0 14h0m0 34h0m1-55h0m0 5h0m1-41h0m0 50h0m0 15h0m1-62h0m0 4h0m0 8h0m0 3h0m0 7h0m0 8h0m1-106h0m0 45h0m0 74h0m0 21h0m0 10h0m0 7h0m0 3h0m1-110h0m0 1h0m0 5h0m0 7h0m0 5h0m0 14h0m0 13h0m0 30h0m0 2h0m0 19h0m1-109h0m0 4h0m0 6h0m0 24h0m0 15h0m0 16h0m0 2h0m0 5h0m0 9h0m0 15h0m0 21h0m1-139h0m0 11h0m0 3h0m0 4h0m0 26h0m0 18h0m0 13h0m0 23h0m0 24h0m0 15h0m1-131h0m0 30h0m0 4h0m0 5h0m0 60h0m0 43h0m1-181h0m0 35h0m0 17h0m0 5h0m0 9h0m0 9h0m0 16h0m0 23h0m0 3h0m0 32h0m0 1h0m0 12h0m1-124h0m0 9h0m0 8h0m0 4h0m0 1h0m0 35h0m0 12h0m0 4h0m0 14h0m0 7h0m0 5h0m0 3h0m0 6h0m0 12h0m0 45h0m1-139h0m0 18h0m0 1h0m0 3h0m0 13h0m0 11h0m0 17h0m0 18h0m1-56h0m0 9h0m0 5h0m0 20h0m1 33h0m1-49h0m0 52h0m1-66h0m0 24h0m0 13h0m0 13h0m1-26h0m0 33h0m1 20h0m0 22h0m1-100h0m0 26h0m0 15h0m0 4h0m0 27h0m1-58h0m0 5h0m0 16h0m0 19h0m0 9h0m0 2h0m0 7h0m0 15h0m1-120h0m0 6h0m0 14h0m0 45h0m0 15h0m0 38h0m0 4h0m0 7h0m0 11h0m1-146h0m0 36h0m0 8h0m0 4h0m0 32h0m0 17h0m0 22h0m0 42h0m0 8h0m1-148h0m0 38h0m0 5h0m0 3h0m0 7h0m0 17h0m1-74h0m0 15h0m0 22h0m0 24h0m0 37h0m0 7h0m0 5h0m0 3h0m0 5h0m0 8h0m1-134h0m0 1h0m0 17h0m0 13h0m0 31h0m0 33h0m0 2h0m0 1h0m0 10h0m0 27h0m0 11h0m1-129h0m0 6h0m0 2h0m0 5h0m0 2h0m0 2h0m0 3h0m0 11h0m0 29h0m0 5h0m0 2h0m0 5h0m0 12h0m0 3h0m0 3h0m0 8h0m1-144h0m0 69h0m0 4h0m0 10h0m0 19h0m0 20h0m0 31h0m1-57h0m1-53h0m0 42h0m0 1h0m2-47h0m0 39h0m0 16h0m0 14h0m0 8h0m1-47h0m0 7h0m0 27h0m0 16h0m0 5h0m0 13h0m0 2h0m0 9h0m1-95h0m0 5h0m0 32h0m0 20h0m0 17h0m0 3h0m1-81h0m0 36h0m0 15h0m0 44h0m0 10h0m0 2h0m0 2h0m0 17h0m1-132h0m0 3h0m0 15h0m0 5h0m0 4h0m0 9h0m0 31h0m0 38h0m0 15h0m1-98h0m0 31h0m0 23h0m0 22h0m0 2h0m0 2h0m0 24h0m0 1h0m0 12h0m0 21h0m1-148h0m0 3h0m0 32h0m0 14h0m0 2h0m0 5h0m0 4h0m0 1h0m0 19h0m0 30h0m0 16h0m0 5h0m1-144h0m0 10h0m0 22h0m0 8h0m0 15h0m0 3h0m0 23h0m0 6h0m0 8h0m0 12h0m0 11h0m0 8h0m0 3h0m0 9h0m1-146h0m0 2h0m0 44h0m0 5h0m0 11h0m0 9h0m0 22h0m0 11h0m0 16h0m0 1h0m0 3h0m1-110h0m1 32h0m1-7h0m1 19h0m1-19h0m0 14h0m1-73h0m0 31h0m0 3h0m0 4h0m0 15h0m0 12h0m0 4h0m0 14h0m0 9h0m0 18h0m0 9h0m1-128h0m0 22h0m0 10h0m0 7h0m0 11h0m0 7h0m0 24h0m0 16h0m1-94h0m0 26h0m0 24h0m0 13h0m0 3h0m0 36h0m0 13h0m0 7h0m1-116h0m0 5h0m0 1h0m0 20h0m0 11h0m0 40h0m0 3h0m0 22h0m0 1h0m0 5h0m0 12h0m1-109h0m0 5h0m0 5h0m0 14h0m0 17h0m0 12h0m0 2h0m0 22h0m0 10h0m0 16h0m0 1h0m1-126h0m0 6h0m0 5h0m0 24h0m0 3h0m0 12h0m0 54h0m0 30h0m1-119h0m0 12h0m0 15h0m0 11h0m0 5h0m0 9h0m0 13h0m0 3h0m0 11h0m0 7h0m0 6h0m0 10h0m0 3h0m1-107h0m0 49h0m0 15h0m0 9h0m0 6h0m0 16h0m2-37h0m0 19h0m0 14h0m0 8h0m2-66h0m0 7h0m0 20h0m0 7h0m1-20h0m0 4h0m0 19h0m0 38h0m1-112h0m0 4h0m0 30h0m0 13h0m0 10h0m0 24h0m0 8h0m0 23h0m1-94h0m0 5h0m0 4h0m0 49h0m0 7h0m0 8h0m0 15h0m1-119h0m0 6h0m0 38h0m0 8h0m0 7h0m0 50h0m0 5h0m1-115h0m0 11h0m0 12h0m0 8h0m0 16h0m0 16h0m0 10h0m0 6h0m0 6h0m0 37h0m0 15h0m0 1h0m0 12h0m1-145h0m0 32h0m0 31h0m0 28h0m0 31h0m0 3h0m0 19h0m1-132h0m0 3h0m0 6h0m0 2h0m0 1h0m0 24h0m0 3h0m0 23h0m0 21h0m0 6h0m0 7h0m0 4h0m0 1h0m1-96h0m0 21h0m0 1h0m0 11h0m0 5h0m0 9h0m0 6h0m0 5h0m0 2h0m0 7h0m0 4h0m0 10h0m0 17h0m0 14h0m0 7h0m1-105h0m0 26h0m0 3h0m0 36h0m0 47h0m1-109h0m0 11h0m0 2h0m0 1h0m0 31h0m0 46h0m2-57h0m1-40h0m1 39h0m1-16h0m0 74h0m2 10h0m0 1h0m0 8h0m1-48h0m0 15h0m0 76h0m0 3h0m1-122h0m0 16h0m0 15h0m0 10h0m0 9h0m0 3h0m0 3h0m0 7h0m0 14h0m0 18h0m1-106h0m0 3h0m0 19h0m0 13h0m0 1h0m0 12h0m0 10h0m0 14h0m0 24h0m0 2h0m1-87h0m0 1h0m0 5h0m0 8h0m0 5h0m0 3h0m0 11h0m0 39h0m0 18h0m0 30h0m0 8h0m0 8h0m1-157h0m0 31h0m0 7h0m0 3h0m0 1h0m0 19h0m0 40h0m0 6h0m0 5h0m1-121h0m0 24h0m0 34h0m0 61h0m0 10h0m0 2h0m0 10h0m1-143h0m0 8h0m0 11h0m0 58h0m0 4h0m0 2h0m0 4h0m0 1h0m0 11h0m0 9h0m0 5h0m0 34h0m1-155h0m0 30h0m0 11h0m0 2h0m0 4h0m0 30h0m0 25h0m0 12h0m0 24h0m1-81h0m0 8h0m0 9h0m0 33h0m0 14h0m0 27h0m1-107h0m0 13h0m0 15h0m0 66h0m1-54h0m0 28h0m2-105h0m0 3h0m0 28h0m0 22h0m0 2h0m1-19h0m0 9h0m1-59h0m0 29h0m0 2h0m0 24h0m0 18h0m0 5h0m0 5h0m0 41h0m1-160h0m0 3h0m0 12h0m0 11h0m0 13h0m0 3h0m0 7h0m0 8h0m0 3h0m0 13h0m0 2h0m0 23h0m0 6h0m0 29h0m1-146h0m0 5h0m0 32h0m0 11h0m0 9h0m0 10h0m0 16h0m0 9h0m0 9h0m0 38h0m1-130h0m0 1h0m0 27h0m0 42h0m0 16h0m0 30h0m0 14h0m0 11h0m0 9h0m1-159h0m0 23h0m0 7h0m0 4h0m0 8h0m0 43h0m0 18h0m0 14h0m0 6h0m0 4h0m0 12h0m0 11h0m0 13h0m1-164h0m0 30h0m0 16h0m0 4h0m0 15h0m0 2h0m0 7h0m0 15h0m0 20h0m0 35h0m0 4h0m0 30h0m0 5h0m1-162h0m0 21h0m0 18h0m0 9h0m0 3h0m0 7h0m0 8h0m0 47h0m1-113h0m0 37h0m0 38h0m0 12h0m0 11h0m0 12h0m0 3h0m0 26h0m1-107h0m0 47h0m0 6h0m0 6h0m0 2h0m0 7h0m0 24h0m1-62h0m0 97h0m1-89h0m0 7h0m0 32h0m0 9h0m0 3h0m1-57h0m1 35h0m0 12h0m1-27h0m1-2h0m0 49h0m1-53h0m0 24h0m2-38h0m0 7h0m0 8h0m0 10h0m0 3h0m0 10h0m0 14h0m0 5h0m0 7h0m1-100h0m0 2h0m0 7h0m0 4h0m0 4h0m0 2h0m0 7h0m0 7h0m0 13h0m0 33h0m0 16h0m0 10h0m1-130h0m0 32h0m0 17h0m0 6h0m0 8h0m0 32h0m0 10h0m0 9h0m0 20h0m0 21h0m0 2h0m1-143h0m0 11h0m0 2h0m0 32h0m0 24h0m0 10h0m0 1h0m0 11h0m0 37h0m1-119h0m0 10h0m0 13h0m0 26h0m0 8h0m0 21h0m0 8h0m0 1h0m0 14h0m0 11h0m1-119h0m0 7h0m0 17h0m0 2h0m0 21h0m0 11h0m0 25h0m0 9h0m0 11h0m0 4h0m0 22h0m0 6h0m0 13h0m1-129h0m0 18h0m0 8h0m0 24h0m0 3h0m0 60h0m1-82h0m0 1h0m0 7h0m0 20h0m0 20h0m0 1h0m0 15h0m0 6h0m0 20h0m1-84h0m0 10h0m1-34h0m0 8h0m1 23h0m0 24h0m0 2h0m1-54h0m0 58h0m1-26h0m0 12h0m0 5h0m1-42h0m0 39h0m0 1h0m2-19h0m0 7h0m0 4h0m0 11h0m0 8h0m0 9h0m0 1h0m0 4h0m1-81h0m0 5h0m0 7h0m0 13h0m0 4h0m0 4h0m0 23h0m0 37h0m0 14h0m1-122h0m0 12h0m0 26h0m0 42h0m0 4h0m0 2h0m0 14h0m0 3h0m0 8h0m0 6h0m1-94h0m0 7h0m0 4h0m0 1h0m0 80h0m0 13h0m0 1h0m0 18h0m1-148h0m0 53h0m0 5h0m0 9h0m0 27h0m0 33h0m0 21h0m1-129h0m0 20h0m0 4h0m0 18h0m0 14h0m0 6h0m0 7h0m0 41h0m1-165h0m0 4h0m0 50h0m0 8h0m0 11h0m0 9h0m0 37h0m0 15h0m0 7h0m0 15h0m0 6h0m1-94h0m0 18h0m0 8h0m0 3h0m0 4h0m0 4h0m0 32h0m0 9h0m0 32h0m1-140h0m0 13h0m0 15h0m0 23h0m0 24h0m0 9h0m0 3h0m0 5h0m0 2h0m0 21h0m0 6h0m1-50h0m0 39h0m2-33h0m2-32h0m0 21h0m1 2h0m1 15h0m0 40h0m1-74h0m0 31h0m0 11h0m1-62h0m0 14h0m0 9h0m0 6h0m0 13h0m0 17h0m0 1h0m0 5h0m0 27h0m0 18h0m1-104h0m0 42h0m0 21h0m0 6h0m0 7h0m0 1h0m0 2h0m0 26h0m1-114h0m0 13h0m0 1h0m0 21h0m0 2h0m0 4h0m0 8h0m0 7h0m0 5h0m0 18h0m0 22h0m0 3h0m0 1h0m0 19h0m0 8h0m1-115h0m0 12h0m0 45h0m1-118h0m0 51h0m0 62h0m0 13h0m0 17h0m0 63h0m1-197h0m0 34h0m0 4h0m0 12h0m0 7h0m0 11h0m0 30h0m0 20h0m0 2h0m0 8h0m0 9h0m0 3h0m0 11h0m0 1h0m1-124h0m0 37h0m0 14h0m0 9h0m0 19h0m0 3h0m0 5h0m0 8h0m0 8h0m0 14h0m0 22h0m1-144h0m0 1h0m0 2h0m0 34h0m0 1h0m0 9h0m0 5h0m0 6h0m0 16h0m0 3h0m0 5h0m0 8h0m1-68h0m0 9h0m0 37h0m0 3h0m1-10h0m1-39h0m2 20h0m0 2h0m0 7h0m1 16h0m1-9h0m0 3h0m0 8h0m1-58h0m0 62h0m1-44h0m0 27h0m1-10h0m0 18h0m0 7h0m0 15h0m1-32h0m0 32h0m0 5h0m1-96h0m0 35h0m0 13h0m0 17h0m0 15h0m0 5h0m0 44h0m0 9h0m0 3h0m1-99h0m0 12h0m0 3h0m0 13h0m0 13h0m0 17h0m0 2h0m0 17h0m0 2h0m0 15h0m1-104h0m0 12h0m0 1h0m0 42h0m0 19h0m0 7h0m0 4h0m0 7h0m0 4h0m0 3h0m1-148h0m0 18h0m0 19h0m0 6h0m0 3h0m0 18h0m0 16h0m0 44h0m0 1h0m0 34h0m0 10h0m1-157h0m0 23h0m0 11h0m0 5h0m0 4h0m0 29h0m0 6h0m0 22h0m1-83h0m0 19h0m0 26h0m0 20h0m0 2h0m0 12h0m0 4h0m0 12h0m0 19h0m0 6h0m0 9h0m0 5h0m0 5h0m1-133h0m0 8h0m0 15h0m0 4h0m0 8h0m0 3h0m0 15h0m0 6h0m0 4h0m0 22h0m0 15h0m0 7h0m0 38h0m0 4h0m1-158h0m0 44h0m0 31h0m0 4h0m0 12h0m0 12h0m0 10h0m0 8h0m0 5h0m1-113h0m0 26h0m0 13h0m0 5h0m0 8h0m0 73h0m1-136h0m0 86h0m1-85h0m1 49h0m0 37h0m0 11h0m1-84h0m0 43h0m0 26h0m1-68h0m0 2h0m0 9h0m0 13h0m0 5h0m0 3h0m0 13h0m0 34h0m0 19h0m1-126h0m0 11h0m0 34h0m0 34h0m0 2h0m0 2h0m0 6h0m0 1h0m0 13h0m0 18h0m1-129h0m0 2h0m0 22h0m0 18h0m0 1h0m0 5h0m0 7h0m0 19h0m0 21h0m0 11h0m0 32h0m1-125h0m0 12h0m0 6h0m0 4h0m0 29h0m0 8h0m0 7h0m0 7h0m0 15h0m0 19h0m0 11h0m0 32h0m1-158h0m0 4h0m0 53h0m0 18h0m0 60h0m0 7h0m0 3h0m0 3h0m1-141h0m0 3h0m0 95h0m0 13h0m0 2h0m0 4h0m0 1h0m0 18h0m1-145h0m0 25h0m0 12h0m0 10h0m0 18h0m0 13h0m0 12h0m0 13h0m0 10h0m1-96h0m0 4h0m0 2h0m0 5h0m0 14h0m0 11h0m0 29h0m0 5h0m0 5h0m0 4h0m0 2h0m0 3h0m0 7h0m0 2h0m0 9h0m1-85h0m0 25h0m0 13h0m0 4h0m1-45h0m0 27h0m1 3h0m0 6h0m0 56h0m1-72h0m1-40h0m0 28h0m0 36h0m1-77h0m0 46h0m0 4h0m0 23h0m1-63h0m1-9h0m0 15h0m0 16h0m0 15h0m0 13h0m0 20h0m0 3h0m0 7h0m1-111h0m0 45h0m0 9h0m0 25h0m0 6h0m0 3h0m0 50h0m1-82h0m0 18h0m0 11h0m0 3h0m0 19h0m0 14h0m0 3h0m0 5h0m0 2h0m0 4h0m0 2h0m0 19h0m1-143h0m0 11h0m0 22h0m0 13h0m0 4h0m0 29h0m0 6h0m0 18h0m1-89h0m0 4h0m0 9h0m0 82h0m0 7h0m0 6h0m1-138h0m0 10h0m0 13h0m0 3h0m0 14h0m0 14h0m0 5h0m0 12h0m0 5h0m0 7h0m0 21h0m0 12h0m0 30h0m0 5h0m0 26h0m1-152h0m0 4h0m0 14h0m0 3h0m0 48h0m0 19h0m0 4h0m0 23h0m0 9h0m0 4h0m0 18h0m0 13h0m1-203h0m0 51h0m0 2h0m0 5h0m0 1h0m0 23h0m0 3h0m0 3h0m0 39h0m0 13h0m0 13h0m1-84h0m0 24h0m0 14h0m0 10h0m0 13h0m0 14h0m0 4h0m0 1h0m1-76h0m0 27h0m0 6h0m0 16h0m2-46h0m0 7h0m0 26h0m1-11h0m0 41h0m1-22h0m0 20h0m1-34h0m0 23h0m0 49h0m1-119h0m0 29h0m0 25h0m0 5h0m0 6h0m0 13h0m0 12h0m0 8h0m0 3h0m0 10h0m0 6h0m0 4h0m1-86h0m0 14h0m0 43h0m0 4h0m0 9h0m0 2h0m0 5h0m0 12h0m0 7h0m0 11h0m1-154h0m0 49h0m0 3h0m0 5h0m0 17h0m0 20h0m0 5h0m0 27h0m0 18h0m0 12h0m0 1h0m1-174h0m0 38h0m0 13h0m0 49h0m0 1h0m0 59h0m0 11h0m0 27h0m1-113h0m0 32h0m0 31h0m0 9h0m0 35h0m1-159h0m0 28h0m0 13h0m0 6h0m0 25h0m0 3h0m0 17h0m0 3h0m0 2h0m0 4h0m0 7h0m0 18h0m0 13h0m0 13h0m0 2h0m1-158h0m0 18h0m0 3h0m0 19h0m0 21h0m0 6h0m0 6h0m0 11h0m0 23h0m0 9h0m0 6h0m0 29h0m1-142h0m0 48h0m0 7h0m0 29h0m1-77h0m0 9h0m0 10h0m0 33h0m0 17h0m1-59h0m0 21h0m0 42h0m1-36h0m2-16h0m1-9h0m0 72h0m1-48h0m0 1h0m0 7h0m1-48h0m3-33h0m0 34h0m0 77h0m1-121h0m0 63h0m0 6h0m0 3h0m0 6h0m0 18h0m0 15h0m1-106h0m0 24h0m0 4h0m0 15h0m0 1h0m0 16h0m0 21h0m0 6h0m0 16h0m0 19h0m0 22h0m1-128h0m0 15h0m0 4h0m0 16h0m0 2h0m0 2h0m0 23h0m0 6h0m0 13h0m0 4h0m0 10h0m0 24h0m0 4h0m1-146h0m0 30h0m0 22h0m0 32h0m0 41h0m0 7h0m0 11h0m1-143h0m0 8h0m0 7h0m0 2h0m0 11h0m0 3h0m0 10h0m0 32h0m0 6h0m0 18h0m0 6h0m0 12h0m0 18h0m0 4h0m1-129h0m0 32h0m0 4h0m0 44h0m0 32h0m0 7h0m0 9h0m1-131h0m0 8h0m0 6h0m0 3h0m0 3h0m0 4h0m0 32h0m0 1h0m0 8h0m0 4h0m0 33h0m0 6h0m0 13h0m0 11h0m0 10h0m1-116h0m0 6h0m0 11h0m0 2h0m0 2h0m0 4h0m0 11h0m0 27h0m0 5h0m0 4h0m0 1h0m2-37h0m0 14h0m0 3h0m2-5h0m0 12h0m0 22h0m1-31h0m0 18h0m0 17h0m1-91h0m0 46h0m0 48h0m0 9h0m0 9h0m1-104h0m0 41h0m0 13h0m0 11h0m0 8h0m0 16h0m0 13h0m0 23h0m0 6h0m1-122h0m0 11h0m0 9h0m0 3h0m0 6h0m0 22h0m0 31h0m0 7h0m0 10h0m0 2h0m0 7h0m0 20h0m1-118h0m0 9h0m0 21h0m0 22h0m0 13h0m0 31h0m0 1h0m0 22h0m0 12h0m1-154h0m0 1h0m0 30h0m0 7h0m0 9h0m0 22h0m0 8h0m0 5h0m0 43h0m0 20h0m0 7h0m0 24h0m1-183h0m0 8h0m0 12h0m0 8h0m0 42h0m0 21h0m0 14h0m0 15h0m0 12h0m0 8h0m0 20h0m0 12h0m1-158h0m0 2h0m0 23h0m0 21h0m0 6h0m0 33h0m0 20h0m0 5h0m1-65h0m0 18h0m0 3h0m0 11h0m0 22h0m0 3h0m0 12h0m0 9h0m0 6h0m0 1h0m0 9h0m0 1h0m0 4h0m1-112h0m0 25h0m0 18h0m0 7h0m0 4h0m0 5h0m0 3h0m0 19h0m1-88h0m0 24h0m1-23h0m0 13h0m0 7h0m0 25h0m1-12h0m0 1h0m1-16h0m1 26h0m1-39h0m1-52h0m1 54h0m0 27h0m0 47h0m1-105h0m0 37h0m0 15h0m0 13h0m0 8h0m1-68h0m0 12h0m0 72h0m0 9h0m1-72h0m0 17h0m0 33h0m0 5h0m1-96h0m0 8h0m0 2h0m0 2h0m0 12h0m0 14h0m0 9h0m0 4h0m0 15h0m0 10h0m0 3h0m0 15h0m1-106h0m0 6h0m0 21h0m0 11h0m0 4h0m0 7h0m0 24h0m0 2h0m0 7h0m0 14h0m0 15h0m0 14h0m0 2h0m0 7h0m1-147h0m0 1h0m0 9h0m0 57h0m0 20h0m0 43h0m0 18h0m0 1h0m1-129h0m0 8h0m0 34h0m0 16h0m0 56h0m0 8h0m0 13h0m1-140h0m0 15h0m0 5h0m0 4h0m0 5h0m0 15h0m0 14h0m0 8h0m0 14h0m0 18h0m0 16h0m0 8h0m0 15h0m0 8h0m0 15h0m1-165h0m0 39h0m0 12h0m0 8h0m0 24h0m0 5h0m0 4h0m0 3h0m0 9h0m0 4h0m0 7h0m0 15h0m0 2h0m1-100h0m0 12h0m0 29h0m0 24h0m1-47h0m0 68h0m0 22h0m1-61h0m0 10h0m1-34h0m1-41h0m0 25h0m0 52h0m0 12h0m1-52h0m1 19h0m1-36h0m1 73h0m2-47h0m0 5h0" stroke="#000" stroke-width="7.00" stroke-linecap="round" fill="none"/>
<path transform="scale(.5)" d="M333 1130h0m2-159h0m2 5h0m0 18h0m0 154h0m2-17h0m1-138h0m1 0h0m39 154h0m1-10h0m1 1h0m1-150h0m4 153h0m15 53h0m8-44h0m18-153h0m0 162h0m2-172h0m0 1h0m1 21h0m2-3h0m5-6h0m34 140h0m1-143h0m4-3h0m47 11h0m0 145h0m6-147h0m1 149h0m28-164h0m3 11h0m14 136h0m2-154h0m1 153h0m24 6h0m3-148h0m0 8h0m6-13h0m1 172h0m2-21h0m31-157h0m8 19h0m3 145h0m44-152h0m7 164h0m3-185h0m4 166h0m9-134h0m34-15h0m2-1h0m4-1h0m29 2h0m2 164h0m1-168h0m1 10h0m2 148h0m5 9h0m4 103h0m3-246h0m35-6h0m6 144h0m6-155h0m27 13h0m7-4h0m4-1h0m43-12h0m38 11h0m1 2h0m5-15h0m0 9h0m3-4h0m1 141h0m46 31h0m3-154h0m11 229h0m37-95h0m8-139h0m2-22h0m42 13h0m6 152h0m1-165h0m3 175h0m1-168h0m31 5h0m5 141h0m47-142h0m32 6h0m6 153h0m2-16h0m3 1h0m37 171h0m15-302h0m0 1h0m2 136h0m6 60h0m32-223h0m4 154h0m1 17h0m39-170h0m1 171h0m5-175h0m0 18h0m8 1h0m3-7h0m0 165h0m4-154h0m7 317h0m26-315h0m11-24h0m0 20h0m3 130h0m3 1h0m0 4h0m39-136h0m5-26h0m2 18h0m3 0h0m5 147h0m2-139h0m32 139h0m2-133h0m1-6h0m48 11h0m1-6h0m5-1h0m26-3h0m14 150h0m1-148h0m5 15h0m8 231h0m28-269h0m5 164h0m4-148h0m41 18h0m6 130h0m0 62h0m4-228h0m14 192h0m20-162h0m7-3h0m34-1h0m3-10h0m5 147h0m4-162h0m6 173h0m6-150h0m48 147h0m27-177h0m4 18h0m3 142h0m55 9h0m2-146h0m36 228h0m12-75h0m4-160h0m6 218h0m25-60h0m2-151h0m17 159h0m37-16h0m2-172h0m1 18h0m4 2h0m1 142h0m2 0h0m1-138h0m0 242h0m5-252h0m0 5h0m19 300h0m10-160h0m6-120h0m12 192h0m26-45h0m2-158h0m10 162h0m2-4h0m14-34h0m41-18h0m31 0h0m44-5h0m14-4h0m26 80h0m31-343h0" stroke="#ffa500" stroke-width="6.20" stroke-linecap="round" fill="none"/>
<path d="M228.3 665.45l2.65-5.3h-5.3zM371.3 665.45l2.65-5.3h-5.3zM560.3 665.45l2.65-5.3h-5.3zM602.3 665.45l2.65-5.3h-5.3zM655.0 665.45l2.65-5.3h-5.3zM680.3 665.45l2.65-5.3h-5.3zM780.3 665.45l2.65-5.3h-5.3zM812.4 380.85l2.65 5.3h-5.3zM1053.4 380.85l2.65 5.3h-5.3zM1050.5 380.85l2.65 5.3h-5.3zM1069.4 380.85l2.65 5.3h-5.3zM1067.3 380.85l2.65 5.3h-5.3zM1101.3 380.85l2.65 5.3h-5.3z" fill="#ffa500"/>
<rect x="105.5" y="499.2" width="1256.1" height="48.6" fill="#f00" fill-opacity="0.1"/>
<rect x="162.9" y="518.5" width="962.7" height="27.0" fill="#ffa500" fill-opacity="0.1"/>
<rect x="1125.6" y="455.5" width="177.9" height="44.5" fill="#ffa500" fill-opacity="0.1"/>
<path d="M105.5 523H1361.6" stroke="#f00" stroke-width="2.08"/>
<path d="M162.9 532.3H1125.6M1125.6 478.1H1305.7" stroke="#ffa500" stroke-width="2.78"/>
</g>
<path d="M162 666.4V380.4 M1125 666.4V380.4 M1303 666.4V380.4" stroke="#800080" stroke-width="2.08" stroke-dasharray="2.08 3.44"/>
<rect x="105.5" y="380.5" width="1380.0" height="286.0" fill="none" stroke="#000" stroke-width="1.1"/>
<text x="162.9" y="686.8" font-size="13.89" text-anchor="middle" textLength="8.2" lengthAdjust="spacingAndGlyphs">0</text>
<text x="399.5" y="686.8" font-size="13.89" text-anchor="middle" textLength="34.5" lengthAdjust="spacingAndGlyphs">5000</text>
<text x="636.1" y="686.8" font-size="13.89" text-anchor="middle" textLength="43.4" lengthAdjust="spacingAndGlyphs">10000</text>
<text x="872.7" y="686.8" font-size="13.89" text-anchor="middle" textLength="43.4" lengthAdjust="spacingAndGlyphs">15000</text>
<text x="1109.3" y="686.8" font-size="13.89" text-anchor="middle" textLength="43.2" lengthAdjust="spacingAndGlyphs">20000</text>
<text x="1345.9" y="686.8" font-size="13.89" text-anchor="middle" textLength="43.2" lengthAdjust="spacingAndGlyphs">25000</text>
<path d="M162.5 666.5v4.9 M399.5 666.5v4.9 M636.5 666.5v4.9 M872.5 666.5v4.9 M1109.5 666.5v4.9 M1345.5 666.5v4.9" stroke="#000" stroke-width="1.1"/>
<text x="95" y="644.8" font-size="13.89" text-anchor="end" textLength="39" lengthAdjust="spacingAndGlyphs">9.300</text>
<text x="95" y="612.8" font-size="13.89" text-anchor="end" textLength="39" lengthAdjust="spacingAndGlyphs">9.325</text>
<text x="95" y="580.8" font-size="13.89" text-anchor="end" textLength="39" lengthAdjust="spacingAndGlyphs">9.350</text>
<text x="95" y="548.8" font-size="13.89" text-anchor="end" textLength="39" lengthAdjust="spacingAndGlyphs">9.375</text>
<text x="95" y="516.8" font-size="13.89" text-anchor="end" textLength="39" lengthAdjust="spacingAndGlyphs">9.400</text>
<text x="95" y="484.9" font-size="13.89" text-anchor="end" textLength="39" lengthAdjust="spacingAndGlyphs">9.425</text>
<text x="95" y="452.9" font-size="13.89" text-anchor="end" textLength="39" lengthAdjust="spacingAndGlyphs">9.450</text>
<text x="95" y="420.9" font-size="13.89" text-anchor="end" textLength="39" lengthAdjust="spacingAndGlyphs">9.475</text>
<text x="95" y="388.9" font-size="13.89" text-anchor="end" textLength="39" lengthAdjust="spacingAndGlyphs">9.500</text>
<path d="M105.5 639.5h-4.9 M105.5 607.5h-4.9 M105.5 575.5h-4.9 M105.5 543.5h-4.9 M105.5 511.5h-4.9 M105.5 479.5h-4.9 M105.5 447.5h-4.9 M105.5 415.5h-4.9 M105.5 383.5h-4.9" stroke="#000" stroke-width="1.1"/>
<rect x="1365.4" y="387.3" width="113.2" height="47.6" rx="2.8" fill="#fff" fill-opacity="0.8" stroke="#ccc" stroke-width="1.1"/>
<path d="M1369 399.5H1400" stroke="#ffa500" stroke-width="2.78"/>
<path d="M1369 421.9H1400" stroke="#f00" stroke-width="2.08"/>
<text x="1410.5" y="403.7" font-size="13.89" text-anchor="start" textLength="29.5" lengthAdjust="spacingAndGlyphs">mag</text>
<text x="1440.5" y="405.7" font-size="10.9" font-style="italic" textLength="30.5" lengthAdjust="spacingAndGlyphs">OBSID</text>
<text x="1409.7" y="426.5" font-size="13.89" text-anchor="start" textLength="29.5" lengthAdjust="spacingAndGlyphs">mag</text>
<rect x="1348.5" y="613.5" width="130" height="45.5" rx="2.8" fill="#fff" fill-opacity="0.8" stroke="#ccc" stroke-width="1.1"/>
<path d="M1367.5 626.5h0" stroke="#ffa500" stroke-width="3.4" stroke-linecap="round"/>
<path d="M1367.5 647.5h0" stroke="#000" stroke-width="3.6" stroke-linecap="round"/>
<text x="1393.5" y="629.8" font-size="13.89" text-anchor="start" textLength="79.6" lengthAdjust="spacingAndGlyphs">Highlighted</text>
<text x="1393.5" y="650.6" font-size="13.89" text-anchor="start" textLength="19.4" lengthAdjust="spacingAndGlyphs">OK</text>
<path d="M105.5 763.5H1485.5 M105.5 801.5H1485.5 M105.5 839.5H1485.5 M105.5 877.5H1485.5 M105.5 916.5H1485.5 M105.5 1009.5H1485.5 M105.5 983.5H1485.5 M105.5 957.5H1485.5" stroke="#b0b0b0" stroke-width="1.11" stroke-dasharray="1.11 1.83"/>
<clipPath id="c3"><rect x="105.5" y="954.4" width="1380" height="57"/></clipPath>
<g clip-path="url(#c3)">
<path transform="scale(.5)" d="M332 2013h0m0 3h0m0 2h0m1 1h0m1-6h0m0 5h0m4-5h0m0 5h0m1-1h0m2-4h0m1 0h0m0 5h0m1-6h0m0 6h0m2-5h0m0 6h0m3-6h0m1 5h0m1-5h0m0 5h0m1-6h0m2 2h0m0 5h0m1 0h0m2-7h0m0 7h0m2 0h0m1-6h0m2 5h0m1-6h0m1 7h0m2-7h0m0 6h0m3 0h0m1-5h0m1 0h0m1 6h0m1-6h0m0 6h0m2 0h0m1-6h0m2 5h0m1-5h0m0 5h0m1-5h0m1 4h0m1-4h0m1 1h0m0 4h0m3-4h0m0 5h0m1-5h0m1-1h0m0 5h0m0 1h0m3-1h0m1-6h0m1 6h0m2 0h0m1-4h0m1-1h0m0 6h0m2-6h0m0 5h0m2-6h0m1 6h0m1-5h0m1 5h0m2-6h0m0 7h0m1-7h0m1 6h0m2-6h0m0 6h0m1 0h0m1-5h0m1 5h0m2-5h0m0 5h0m1 0h0m2-5h0m1 5h0m1-6h0m1 7h0m2-1h0m2-5h0m0 5h0m1-1h0m3-5h0m0 6h0m1-6h0m1 6h0m2-5h0m1 4h0m1 1h0m2-6h0m0 6h0m3-4h0m0 4h0m1-4h0m2 4h0m1-5h0m2 0h0m1 3h0m0 2h0m1-6h0m3 7h0m1-6h0m1 5h0m3-5h0m0 4h0m2-4h0m0 4h0m1-4h0m3 1h0m0 5h0m2-5h0m1 4h0m1-4h0m1 4h0m2-5h0m0 5h0m2-5h0m0 6h0m2-6h0m1 6h0m1-6h0m1 6h0m1-7h0m1 7h0m2-6h0m1 5h0m2 0h0m1-5h0m0 5h0m2-6h0m0 7h0m2-7h0m0 7h0m3-7h0m0 6h0m2 1h0m2-5h0m1 5h0m2-7h0m1 6h0m1-5h0m1 5h0m3-1h0m1-5h0m2 7h0m1 0h0m1-6h0m2 6h0m1-6h0m2 4h0m1-4h0m2 6h0m1 0h0m1-6h0m1 0h0m0 5h0m3-5h0m0 6h0m1 0h0m2-7h0m1 6h0m1-5h0m0 5h0m2-4h0m1 0h0m0 4h0m2 0h0m1-6h0m0 7h0m3-4h0m1 3h0m1-7h0m2 7h0m1 1h0m1-5h0m2 4h0m1-4h0m1 4h0m2-5h0m1 6h0m1-2h0m2-5h0m0 6h0m2-1h0m0 1h0m2-6h0m1 3h0m0 4h0m3 0h0m1-6h0m1-1h0m0 2h0m0 5h0m2-1h0m2-5h0m2 0h0m0 6h0m1-1h0m2-4h0m1 5h0m3-6h0m0 5h0m1-6h0m0 4h0m0 2h0m3 0h0m1-5h0m1-1h0m2 6h0m1 1h0m1-6h0m2 1h0m0 4h0m1-4h0m1 4h0m2-5h0m1 0h0m1 5h0m2 1h0m1-5h0m2-1h0m0 6h0m1-7h0m1 6h0m1-5h0m1 5h0m1-5h0m1 5h0m2-5h0m0 5h0m3-5h0m1 5h0m1 0h0m1 0h0m2-6h0m1 6h0m1 1h0m1-6h0m0 5h0m3 0h0m1-5h0m0 5h0m1-4h0m2-1h0m0 5h0m1 1h0m1-6h0m1 0h0m0 5h0m3-5h0m1 5h0m1-6h0m1 6h0m1-5h0m1 5h0m1-5h0m1 5h0m1 0h0m2-5h0m1 0h0m0 5h0m3-5h0m0 5h0m2-6h0m0 3h0m1 3h0m3-6h0m0 6h0m2-6h0m0 6h0m3-5h0m0 5h0m2 1h0m1-6h0m0 5h0m2-7h0m0 7h0m3-5h0m0 5h0m3-5h0m0 5h0m2-6h0m0 6h0m2-3h0m1-2h0m1 5h0m2-5h0m0 5h0m1 0h0m1 0h0m1-6h0m1-1h0m0 7h0m2-1h0m2 0h0m1-6h0m0 3h0m0 4h0m3 0h0m1-7h0m0 7h0m1-1h0m2 1h0m2-5h0m1 4h0m2-5h0m0 6h0m1 0h0m1-4h0m3-1h0m1 0h0m0 5h0m2-5h0m0 6h0m1-1h0m1 0h0m1-5h0m1 5h0m1-6h0m0 1h0m0 5h0m1-5h0m2 6h0m2-5h0m1-1h0m0 5h0m1-5h0m1 6h0m3-8h0m0 7h0m2 0h0m1-3h0m1 3h0m1 0h0m1-5h0m2 6h0m1-5h0m2 4h0m1-6h0m0 6h0m1-5h0m2 5h0m1-4h0m2 0h0m1 4h0m1-5h0m1 0h0m1 5h0m1 0h0m2-5h0m1 5h0m1 0h0m2-5h0m1 3h0m0 2h0m2 1h0m1-7h0m1 6h0m1 0h0m1-5h0m2 5h0m1-5h0m2 2h0m0 4h0m1-6h0m0 5h0m3-6h0m0 7h0m2-6h0m1 5h0m1-5h0m2 6h0m1-6h0m2 0h0m0 5h0m3-7h0m0 7h0m1-5h0m3 0h0m0 2h0m0 4h0m2-7h0m0 6h0m2 0h0m3-4h0m0 4h0m1-6h0m0 6h0m2-2h0m2 1h0m2-6h0m0 7h0m1-6h0m1 5h0m1-5h0m0 7h0m2-6h0m1 6h0m2-5h0m0 4h0m2 0h0m1-6h0m2 0h0m0 6h0m1-3h0m1-2h0m1 6h0m2-1h0m1-6h0m0 4h0m2 0h0m0 3h0m2-7h0m1 6h0m1-5h0m1 5h0m2-5h0m0 5h0m2 0h0m1-5h0m0 6h0m1-6h0m1 6h0m2-6h0m1 6h0m1-1h0m1-6h0m1 6h0m1 0h0m2-5h0m0 1h0m1 4h0m3-5h0m1 5h0m2 1h0m1-3h0m1-3h0m0 6h0m1-6h0m0 5h0m2 0h0m1 1h0m2-7h0m1 7h0m1-6h0m0 1h0m1 4h0m1-4h0m2 4h0m1-5h0m1 0h0m0 5h0m1 0h0m2-4h0m1 4h0m1-4h0m1-1h0m1 5h0m3-5h0m0 5h0m1-5h0m1 5h0m1-6h0m1 6h0m1-5h0m1 5h0m1-6h0m0 4h0m0 3h0m2-6h0m1 5h0m2-6h0m0 1h0m1 4h0m3-4h0m0 5h0m1-6h0m3 6h0m1-5h0m1 6h0m1-6h0m0 5h0m1-5h0m2 6h0m1-1h0m2-4h0m1-2h0m1 6h0m1 1h0m2-7h0m1 6h0m2-4h0m0 4h0m1 0h0m1-5h0m2 6h0m2-6h0m0 6h0m2 0h0m1-7h0m0 6h0m2-5h0m1 4h0m2-4h0m0 6h0m2-6h0m0 6h0m3-5h0m1 3h0m1-4h0m2 0h0m0 5h0m1-5h0m1 5h0m2 1h0m1-7h0m2 7h0m1-6h0m1 3h0m0 2h0m2-6h0m1 6h0m2-5h0m0 6h0m1-1h0m1-5h0m2 1h0m0 5h0m3-7h0m0 6h0m0 1h0m1-3h0m1-4h0m1 7h0m3-7h0m0 7h0m1-4h0m0 4h0m2-6h0m0 5h0m1 0h0m2-6h0m1 6h0m1-5h0m1 5h0m3-6h0m1 6h0m1-5h0m1 1h0m0 5h0m3-5h0m0 4h0m2-4h0m0 4h0m2 1h0m2-6h0m1 5h0m2 1h0m1-6h0m2-1h0m0 6h0m1 0h0m2-5h0m1 0h0m0 4h0m4-7h0m0 8h0m2-3h0m0 3h0m2-5h0m0 6h0m3-6h0m1 5h0m2-5h0m1 5h0m1-5h0m0 5h0m2-5h0m0 6h0m1-1h0m1-5h0m2 6h0m2-7h0m0 2h0m1-1h0m0 5h0m2 0h0m2-5h0m2 0h0m0 5h0m1 1h0m1-6h0m2 6h0m1-7h0m0 7h0m1-6h0m2 5h0m1-4h0m2-1h0m0 5h0m1-5h0m1 5h0m2-6h0m1 6h0m2-6h0m0 6h0m2 0h0m2 0h0m1-5h0m2 0h0m0 6h0m2-1h0m1-5h0m1-1h0m2 1h0m0 5h0m1 0h0m1-5h0m1 5h0m1-5h0m2 5h0m1-5h0m1 6h0m1-7h0m0 6h0m2-6h0m1 7h0m2-6h0m1 5h0m2-7h0m0 5h0m1 2h0m2 0h0m2-5h0m1 6h0m3-5h0m0 4h0m3-6h0m0 6h0m2-2h0m0 3h0m1-6h0m1 5h0m1-5h0m1 5h0m1-5h0m0 5h0m2-4h0m1 4h0m2-5h0m0 4h0m2 1h0m3-4h0m1-2h0m0 6h0m2 0h0m2-6h0m0 2h0m1 5h0m1-5h0m1 5h0m2-1h0m2-6h0m0 7h0m1-7h0m2 0h0m0 7h0m2-6h0m1 6h0m1-5h0m1 5h0m1-6h0m1 0h0m0 5h0m2 1h0m1-7h0m0 4h0m1-4h0m1 6h0m2 0h0m1-5h0m2 0h0m0 5h0m2-6h0m0 6h0m2 0h0m1-4h0m1 4h0m1-7h0m0 5h0m1 2h0m3-6h0m0 6h0m3-5h0m0 5h0m2-5h0m1 0h0m0 5h0m1 0h0m2 0h0m1-6h0m2 6h0m1-5h0m0 5h0m2 0h0m1-5h0m1 2h0m0 3h0m3 1h0m1-7h0m1-1h0m0 3h0m0 5h0m3-7h0m0 6h0m1 0h0m1-2h0m2-3h0m0 6h0m2-7h0m0 7h0m3-6h0m0 2h0m1-2h0m0 6h0m2-6h0m1 5h0m1-6h0m2 6h0m1-6h0m1 0h0m0 6h0m3-5h0m0 6h0m2-6h0m1 5h0m1-5h0m0 5h0m1-4h0m1 3h0m2-3h0m1 4h0m1-5h0m2-1h0m0 6h0m2-5h0m1 5h0m2-5h0m1 0h0m1 0h0m0 5h0m1-6h0m0 7h0m2 0h0m2-7h0m0 1h0m1-1h0m0 7h0m1 0h0m2 0h0m1-7h0m1 4h0m1-5h0m1 8h0m1 0h0m2-6h0m1 6h0m1-7h0m1 7h0m2-6h0m2 0h0m0 5h0m1 0h0m1-2h0m1-5h0m1 7h0m2 1h0m1-6h0m2 5h0m1-5h0m0 5h0m2-5h0m0 5h0m2-5h0m0 5h0m2 0h0m1-6h0m1 3h0m2-2h0m0 5h0m1-4h0m0 4h0m2 0h0m1-5h0m1 1h0m1 4h0m2-4h0m1 4h0m3 1h0m1-7h0m0 3h0m0 3h0m2-6h0m2 7h0m2-6h0m1 6h0m1-6h0m2 0h0m0 6h0m2 0h0m1-5h0m2 4h0m1-6h0m3 0h0m0 3h0m0 4h0m4-6h0m0 5h0m2-5h0m1 0h0m0 5h0m2 0h0m1-5h0m2 5h0m1-6h0m0 6h0m2-7h0m1 7h0m2-4h0m0 5h0m1 0h0m1-6h0m1 5h0m3-5h0m0 6h0m2-1h0m1-6h0m1 0h0m1 6h0m1-5h0m2 5h0m1-4h0m1 5h0m1-6h0m1 0h0m0 6h0m1-1h0m2-4h0m0 4h0m2-5h0m0 5h0m2-5h0m2 6h0m2-6h0m1 5h0m1 0h0m2-6h0m2 7h0m1-2h0m1-5h0m0 7h0m1-7h0m2 1h0m1 5h0m1-6h0m1 6h0m3-5h0m0 5h0m2 1h0m1-6h0m2-1h0m0 6h0m2-6h0m1 7h0m2-5h0m1 5h0m1-6h0m3 0h0m0 5h0m1 1h0m2-6h0m1 5h0m2-4h0m0 3h0m0 1h0m1-4h0m3 0h0m1-2h0m0 7h0m1-1h0m3-5h0m0 6h0m1-2h0m3-4h0m1 5h0m1-4h0m3-1h0m0 5h0m2 1h0m1-6h0m1 0h0m1 5h0m2 1h0m1-6h0m1 1h0m0 4h0m1-1h0m2 1h0m1-5h0m0 1h0m1 4h0m1-5h0m2 0h0m0 5h0m2 0h0m2-5h0m0 6h0m3-6h0m0 6h0m2 0h0m1-3h0m1-3h0m2 0h0m0 6h0m2-7h0m2 6h0m1-1h0m1-4h0m2 0h0m0 5h0m1-5h0m0 6h0m2-1h0m1-5h0m1 0h0m0 5h0m3-5h0m0 5h0m1-6h0m1 1h0m0 5h0m1 0h0m1-5h0m1 5h0m3-5h0m2 6h0m1-7h0m1 6h0m1-1h0m2-4h0m1 4h0m1 0h0m2-5h0m1 6h0m3 0h0m1-5h0m1 5h0m3-5h0m0 6h0m1-1h0m1-5h0m2 0h0m0 5h0m2 1h0m1-6h0m0 6h0m1-7h0m1 6h0m2-6h0m1 6h0m1 0h0m1 0h0m1-2h0m1-4h0m1 7h0m2-6h0m0 6h0m2-1h0m1-2h0m2-4h0m0 6h0m2-4h0m1 4h0m1 0h0m1-3h0m1-4h0m1 7h0m2 0h0m2-5h0m2 6h0m1-7h0m1 6h0m2 0h0m1-5h0m1 4h0m0 2h0m1-6h0m2 0h0m0 5h0m1 0h0m2-4h0m0 5h0m1-1h0m1-5h0m2 5h0m1-6h0m1 2h0m3-3h0m0 7h0m1-6h0m1 6h0m3-5h0m2 0h0m0 5h0m3-5h0m0 5h0m1 0h0m1 0h0m1-5h0m1 6h0m1-8h0m1 6h0m2-5h0m2 2h0m0 4h0m2 0h0m2-5h0m2 5h0m2-5h0m0 5h0m2-6h0m1 6h0m1-5h0m1 5h0m3 0h0m1-5h0m2-1h0m0 6h0m3-6h0m1 3h0m0 3h0m2-5h0m0 6h0m1-1h0m1-1h0m1-3h0m1-1h0m1 1h0m1 4h0m1 0h0m1-4h0m2-1h0m1 5h0m1-5h0m2 0h0m0 5h0m2 0h0m1-6h0m1 7h0m2-6h0m0 6h0m1-6h0m2 0h0m1 5h0m1-4h0m1 4h0m1-4h0m2-1h0m0 5h0m2-5h0m2 5h0m1-4h0m1-1h0m2 0h0m0 5h0m1-4h0m2-1h0m0 5h0m1-5h0m1 5h0m2-5h0m1 0h0m1 0h0m0 5h0m2-4h0m1 4h0m1-5h0m1 5h0m1-4h0m1 5h0m1-6h0m1 6h0m1 0h0m1-6h0m1 0h0m1 5h0m1-6h0m2 0h0m0 6h0m1 0h0m1-6h0m3 3h0m0 3h0m1-6h0m1 6h0m2-4h0m0 5h0m1-5h0m1 5h0m3-6h0m0 5h0m3-5h0m0 5h0m1-5h0m0 5h0m1 0h0m3-5h0m0 6h0m3-3h0m0 2h0m1-6h0m0 6h0m2 0h0m2-2h0m0 2h0m1-5h0m1 5h0m2-6h0m0 6h0m4-5h0m0 5h0m1 1h0m2-6h0m3 1h0m0 5h0m2-6h0m1 5h0m2-6h0m0 6h0m2-6h0m2 1h0m0 5h0m2 1h0m1-1h0m1-6h0m2 1h0m0 5h0m2 0h0m2-5h0m0 5h0m1-5h0m0 5h0m2-6h0m1 6h0m1 0h0m1-5h0m2 5h0m1-4h0m0 4h0m2-4h0m1 4h0m1-4h0m1 4h0m2-5h0m1 5h0m1-4h0m1 4h0m2-5h0m1-1h0m0 6h0m1 0h0m3-5h0m0 6h0m2-2h0m2-3h0m1-1h0m1 6h0m1-5h0m0 5h0m1-8h0m2 8h0m1-6h0m1 5h0m1-4h0m2-2h0m0 6h0m2 0h0m1-6h0m0 6h0m2-2h0m0 2h0m1-6h0m1 0h0m1 6h0m1-5h0m0 5h0m1-5h0m2 5h0m2-4h0m0 4h0m3-5h0m0 6h0m2-7h0m1 5h0m1-4h0m1 4h0m3 1h0m1-6h0m0 2h0m0 4h0m1 0h0m2 1h0m1-7h0m1 3h0m2-2h0m0 6h0m2-1h0m1-5h0m2 0h0m1 6h0m1-1h0m1-5h0m2 0h0m0 5h0m2-5h0m0 4h0m4-5h0m0 6h0m1-6h0m1 7h0m2 0h0m1-6h0m0 1h0m3-1h0m0 6h0m2 0h0m1-6h0m0 5h0m2-6h0m2 7h0m1-6h0m1 5h0m1 0h0m1-5h0m0 2h0m2 4h0m2-7h0m0 6h0m1 0h0m1-5h0m2 6h0m1-6h0m0 6h0m2-6h0m2-1h0m0 6h0m3-4h0m0 4h0m3-4h0m0 4h0m1-4h0m0 4h0m2-4h0m1 4h0m1-5h0m0 5h0m2 1h0m1-6h0m2 0h0m1 5h0m2-5h0m1 0h0m0 5h0m3 0h0m1-6h0m2 5h0m1 1h0m2-7h0m2 5h0m0 3h0m1 0h0m1-6h0m2 5h0m1-6h0m0 6h0m1-5h0m2 1h0m0 5h0m3 0h0m1-6h0m1 0h0m2 4h0m1 2h0m1-7h0m3 6h0m1-4h0m1-1h0m1 6h0m2-7h0m0 7h0m2-7h0m0 4h0m1 3h0m1-1h0m1-5h0m2 2h0m0 3h0m2-6h0m0 6h0m3 0h0m1-5h0m0 5h0m1-6h0m1 6h0m1-6h0m2 6h0m1-5h0m0 5h0m3-5h0m0 5h0m1 1h0m3-7h0m0 6h0m3-5h0m0 5h0m1-3h0m0 3h0m2-6h0m1 6h0m1-5h0m1 6h0m1-1h0m2-6h0m0 6h0m3-5h0m0 5h0m2-6h0m0 6h0m2 0h0m1-5h0m3 5h0m1-5h0m1 6h0m1-5h0m0 5h0m3-7h0m0 6h0m1 0h0m1-5h0m1 5h0m2-6h0m0 6h0m3-4h0m1 4h0m1-5h0m0 6h0m2-6h0m1 0h0m0 5h0m1-5h0m1 5h0m1-4h0m1 5h0m1-6h0m0 5h0m1 0h0m1-6h0m1 6h0m1-5h0m2 5h0m1-5h0m0 5h0m3 1h0m1-6h0m2 5h0m1-6h0m2 6h0m1-6h0m1 1h0m0 5h0m1 1h0m2-6h0m0 5h0m2-5h0m2 6h0m1-6h0m1 5h0m1 0h0m1-6h0m1 6h0m1-5h0m1 5h0m1-4h0m0 4h0m3-4h0m0 4h0m1-4h0m2-1h0m2 5h0m2-5h0m1-1h0m0 6h0m2-5h0m0 5h0m1-4h0m1 4h0m1-4h0m0 4h0m2-5h0m1 6h0m1-6h0m1 5h0m2-5h0m2 6h0m1-6h0m0 5h0m1 0h0m1-4h0m3 5h0m1-7h0m0 4h0m0 3h0m3-6h0m1 6h0m2-8h0m1 6h0m1 1h0m1-4h0m0 5h0m2-1h0m1-4h0m1 4h0m1-4h0m2-1h0m2 0h0m0 5h0m2 0h0m1-6h0m2 5h0m1-5h0m1 7h0m1-1h0m1-6h0m0 6h0m2 0h0m1-6h0m3 6h0m1-5h0m1 0h0m2 5h0m2-6h0m1 6h0m2-6h0m0 6h0m1-6h0m3 1h0m0 5h0m2 1h0m1-7h0m2 6h0m1-5h0m0 4h0m0 1h0m1-5h0m3 0h0m0 6h0m1-5h0m0 5h0m5-6h0m0 5h0m1 0h0m1-5h0m2 0h0m0 6h0m2-6h0m1 5h0m2 0h0m1-5h0m2 0h0m0 5h0m1 0h0m1-5h0m2-1h0m0 7h0m2-4h0m1 4h0m2 0h0m1-6h0m1 2h0m1-3h0m1 6h0m2-5h0m1 1h0m2 0h0m0 5h0m1-6h0m0 5h0m2 0h0m1-5h0m2-1h0m0 6h0m2 0h0m1-5h0m0 5h0m2-7h0m0 5h0m0 2h0m2-6h0m2 6h0m1-5h0m1 5h0m2 0h0m1-5h0m2 0h0m0 5h0m1 1h0m2-6h0m2 5h0m2-5h0m0 5h0m2-5h0m2 2h0m1-3h0m0 7h0m2-6h0m2-1h0m0 6h0m0 1h0m2-1h0m2-5h0m1 5h0m2 0h0m1-5h0m2 0h0m0 5h0m1 1h0m1-1h0m1-6h0m2 0h0m0 6h0m1-1h0m4-4h0m0 6h0m3-5h0m1-1h0m0 5h0m2-6h0m0 7h0m1 0h0m1-6h0m1 5h0m1-4h0m2 5h0m2-4h0m1-3h0m0 6h0m2 1h0m2-6h0m1 6h0m1-7h0m1 3h0m0 3h0m1 1h0m1-7h0m0 6h0m1 0h0m1 1h0m1-7h0m2 3h0m1 4h0m1-6h0m0 5h0m2-5h0m2 6h0m1-6h0m1 5h0m1-4h0m1 4h0m0 1h0m2-6h0m1 5h0m2-5h0m0 6h0m1 0h0m1-6h0m2 5h0m2-4h0m0 4h0m1-5h0m1 5h0m1 0h0m1-2h0m1-4h0m0 6h0m2 0h0m2 0h0m1-5h0m0 1h0m1 4h0m2 0h0m1-5h0m0 5h0m2-5h0m0 5h0m1-6h0m1 7h0m1-6h0m2 6h0m1-6h0m1 0h0m0 5h0m1 0h0m3-4h0m1-1h0m0 4h0m1 1h0m1-5h0m1 5h0m1-5h0m2-1h0m0 6h0m1-6h0m0 6h0m2 1h0m1-6h0m1 6h0m1-6h0m2 5h0m1-3h0m2-2h0m0 6h0m2-1h0m1-5h0m3-12h0m0 3h0m0 1h0m0 2h0m0 2h0m0 4h0m0 3h0m0 2h0m1-21h0m1 9h0m1-8h0m1 11h0m1 6h0m1-13h0m1 3h0m1 8h0m1 4h0m1-9h0m1 4h0m2-7h0m0 5h0m2-7h0m0 10h0m1-13h0m0 5h0m0 3h0m0 4h0m2-15h0m0 3h0m2-4h0m0 14h0m2-15h0m0 3h0m1 7h0m0 2h0m1-6h0m3 2h0m0 7h0m2-4h0m2 2h0m1-11h0m1 5h0m1 10h0m1-3h0m1-5h0m0 9h0m1-17h0m1 4h0m1-7h0m0 14h0m0 7h0m1-20h0m0 2h0m0 6h0m1 9h0m1-11h0m2 5h0m0 5h0m1-8h0m0 7h0m3-12h0m1 15h0m1-13h0m0 5h0m0 3h0m1 7h0m2-7h0m0 7h0m1-11h0m1-6h0m0 15h0m1-13h0m0 5h0m0 4h0m3-11h0m1 5h0m1 3h0m2-11h0m0 4h0m2 6h0m0 5h0m1-9h0m0 2h0m2-6h0m1 7h0m0 4h0m0 5h0m0 3h0m1-20h0m1 2h0m0 9h0m0 10h0m1-2h0m1-12h0m0 8h0m0 3h0m2-10h0m0 8h0m2-4h0m2-6h0m0 10h0m1 4h0m0 1h0m1-12h0m1-7h0m0 9h0m1-4h0m0 7h0m0 5h0m1-18h0m1 8h0m1-6h0m1 13h0m1-7h0m3-4h0m0 6h0m2 6h0m1-15h0m0 6h0m0 6h0m1-1h0m0 7h0m2-3h0m0 3h0m1-19h0m0 2h0m0 10h0m1-7h0m0 4h0m1-8h0m0 6h0m3 8h0m1-13h0m0 9h0m2-7h0m0 3h0m0 4h0m1-11h0m2 1h0m0 14h0m0 1h0m1-14h0m0 16h0m1-7h0m1-5h0m1-2h0m0 6h0m1 6h0m1-2h0m3-6h0m1-12h0m0 5h0m0 4h0m0 6h0m2-6h0m0 9h0m1-5h0m1-13h0m0 2h0m0 16h0m1-12h0m1 1h0m1 2h0m0 7h0m0 3h0m3-5h0m3-9h0m0 7h0m0 6h0m1-9h0m0 12h0m1-5h0m1-12h0m0 20h0m1-18h0m1 8h0m0 10h0m1-16h0m0 3h0m0 8h0m1 4h0m2-9h0m2 7h0m1-4h0m1-8h0m0 1h0m0 11h0m2-8h0m1 6h0m0 3h0m1-17h0m0 1h0m0 4h0m1 6h0m1-13h0m1 3h0m1 4h0m0 2h0m0 4h0m0 5h0m4-2h0m1-4h0m2-2h0m1 9h0m1-11h0m1-2h0m0 6h0m0 3h0m1-12h0m1 2h0m0 14h0m1-5h0m0 3h0m0 2h0m1-10h0m3-7h0m0 3h0m0 8h0m1-5h0m2-3h0m0 12h0m2 0h0m1-4h0m1-15h0m0 2h0m1 5h0m0 4h0m0 8h0m1-14h0m1 13h0m0 3h0m1-12h0m0 12h0m2-12h0m0 6h0m2 5h0m2-8h0m2 6h0m3-1h0m0 4h0m1-10h0m0 4h0m0 10h0m1-20h0m0 2h0m1 15h0m2-22h0m0 6h0m0 15h0m1-18h0m0 9h0m0 5h0m4-10h0m0 3h0m1 6h0m2-3h0m2-5h0m0 10h0m0 1h0m1-8h0m1 11h0m0 2h0m1-17h0m0 10h0m0 4h0m0 2h0m1-18h0m1-2h0m1 1h0m0 1h0m0 5h0m0 3h0m1-7h0m1 13h0m1-10h0m2 5h0m2 4h0m1-7h0m1 2h0m2 5h0m1-10h0m1-7h0m0 1h0m0 4h0m0 11h0m2-6h0m0 2h0m1-10h0m0 1h0m0 2h0m0 19h0m1-13h0m0 7h0m0 4h0m1-13h0m0 7h0m0 4h0m0 1h0m5-14h0m0 5h0m1 6h0m1 2h0m1-9h0m1 5h0m1-10h0m0 14h0m2-15h0m0 7h0m0 7h0m1-8h0m1 7h0m1-15h0m1 5h0m1-9h0m0 3h0m0 12h0m1-5h0m0 12h0m1-8h0m1-7h0m0 12h0m3-6h0m1-9h0m0 5h0m1 7h0m1-9h0m0 11h0m1-4h0m1 8h0m1-19h0m1 8h0m0 6h0m1-12h0m1 0h0m0 17h0m3-9h0m0 6h0m1-9h0m2 4h0m2-4h0m1 10h0m1-6h0m0 9h0m1-19h0m0 10h0m1 5h0m1-19h0m0 1h0m0 5h0m1 7h0m0 7h0m1-10h0m1 8h0m1-16h0m1 15h0m1-11h0m0 10h0m1-5h0m3-5h0m0 12h0m1-6h0m0 2h0m0 6h0m1-16h0m1 8h0m1-10h0m0 4h0m1 14h0m1-3h0m1-12h0m1 6h0m0 2h0m1-6h0m1 4h0m2 6h0m1-14h0m1 9h0m0 1h0m1-4h0m3-7h0m0 3h0m1 4h0m1 4h0m0 2h0m0 3h0m2 1h0m1-14h0m0 4h0m0 7h0m0 3h0m2-19h0m0 1h0m0 2h0m1 2h0m0 5h0m0 3h0m2-11h0m3-1h0m0 5h0m1 2h0m1 3h0m0 2h0m0 1h0m0 1h0m2-15h0m0 5h0m0 5h0m1 7h0m0 3h0m0 1h0m1 1h0m1-17h0m1 1h0m0 8h0m0 4h0m1 0h0m2-8h0m0 7h0m1-5h0m1-6h0m1 9h0m1-10h0m1 8h0m2-4h0m1-2h0m0 8h0m1-4h0m1-4h0m0 11h0m0 2h0m0 2h0m1-1h0m0 4h0m1-17h0m1 5h0m0 4h0m0 7h0m1-16h0m2 14h0m0 2h0m1-11h0m0 6h0m2-10h0m1-3h0m0 8h0m2-5h0m2 2h0m2 1h0" stroke="#000" stroke-width="6.40" stroke-linecap="round" fill="none"/>
<path transform="scale(.5)" d="M457 1992h0m286-1h0m303 13h0m75-4h0m84 9h0m105-4h0m51 0h0m75 0h0m124-2h0m541 4h0m79-1h0" stroke="#000" stroke-width="6.40" stroke-linecap="round" fill="none"/>
</g>
<path d="M228.3 839.5h0M371.3 839.5h0M404.0 839.5h0M523.2 839.5h0M560.4 839.5h0M602.4 839.5h0M655.1 839.5h0M680.3 839.5h0M718.1 839.5h0M780.2 839.5h0M839.0 839.5h0M1090.0 839.5h0M1135.0 839.5h0M1188.0 839.5h0M1190.5 839.5h0M1203.0 839.5h0M228.3 877.6h0M371.3 877.6h0M404.0 877.6h0M523.2 877.6h0M560.4 877.6h0M602.4 877.6h0M655.1 877.6h0M680.3 877.6h0M718.1 877.6h0M780.2 877.6h0M836.5 877.6h0M839.5 877.6h0M1050.5 877.6h0M1090.0 877.6h0M1135.0 877.6h0M1189.0 877.6h0M1191.5 877.6h0M1203.0 877.6h0" stroke="#000" stroke-width="2.6" stroke-linecap="round"/>
<path d="M228.3 839.5h0M371.3 839.5h0M404.0 839.5h0M523.2 839.5h0M560.4 839.5h0M602.4 839.5h0M655.1 839.5h0M680.3 839.5h0M718.1 839.5h0M780.2 839.5h0M839.0 839.5h0M1090.0 839.5h0M1135.0 839.5h0M1188.0 839.5h0M1190.5 839.5h0M1203.0 839.5h0M228.3 877.6h0M371.3 877.6h0M404.0 877.6h0M523.2 877.6h0M560.4 877.6h0M602.4 877.6h0M655.1 877.6h0M680.3 877.6h0M718.1 877.6h0M780.2 877.6h0M836.5 877.6h0M839.5 877.6h0M1050.5 877.6h0M1090.0 877.6h0M1135.0 877.6h0M1189.0 877.6h0M1191.5 877.6h0M1203.0 877.6h0" stroke="#fff" stroke-width="0.8" stroke-linecap="round"/>
<path d="M160.5 761.7h7v3.4h-7zM1123.5 761.7h6v3.4h-6z" fill="#000"/>
<path d="M163 763.4h2.5M1126 763.4h2" stroke="#fff" stroke-width="0.9"/>
<path d="M162.6 956.1l1.55 3.1h-3.1zM164.5 956.1l1.55 3.1h-3.1zM166.5 956.1l1.55 3.1h-3.1zM168.0 956.1l1.55 3.1h-3.1zM228.3 956.1l1.55 3.1h-3.1zM371.3 956.1l1.55 3.1h-3.1zM404.0 956.1l1.55 3.1h-3.1zM523.2 956.1l1.55 3.1h-3.1zM560.4 956.1l1.55 3.1h-3.1zM602.4 956.1l1.55 3.1h-3.1zM655.1 956.1l1.55 3.1h-3.1zM680.3 956.1l1.55 3.1h-3.1zM718.1 956.1l1.55 3.1h-3.1zM780.2 956.1l1.55 3.1h-3.1zM835.7 956.1l1.55 3.1h-3.1zM839.0 956.1l1.55 3.1h-3.1zM1050.5 956.1l1.55 3.1h-3.1zM1090.0 956.1l1.55 3.1h-3.1zM1124.5 956.1l1.55 3.1h-3.1zM1126.5 956.1l1.55 3.1h-3.1zM1128.5 956.1l1.55 3.1h-3.1zM1130.5 956.1l1.55 3.1h-3.1zM1135.2 956.1l1.55 3.1h-3.1zM1189.0 956.1l1.55 3.1h-3.1zM1191.0 956.1l1.55 3.1h-3.1zM1203.2 956.1l1.55 3.1h-3.1z" fill="#fff" stroke="#f00" stroke-width="1.15" stroke-linejoin="round"/>
<path d="M162 954.4V725.4 M1125 954.4V725.4 M1303 954.4V725.4" stroke="#800080" stroke-width="2.08" stroke-dasharray="2.08 3.44"/>
<path d="M162 1011.4V954.4 M1125 1011.4V954.4 M1303 1011.4V954.4" stroke="#800080" stroke-width="2.08" stroke-dasharray="2.08 3.44"/>
<rect x="105.5" y="725.5" width="1380.0" height="286.0" fill="none" stroke="#000" stroke-width="1.1"/>
<path d="M105.5 954.5H1485.5" stroke="#000" stroke-width="1.1"/>
<text x="162.9" y="1031.8" font-size="13.89" text-anchor="middle" textLength="8.2" lengthAdjust="spacingAndGlyphs">0</text>
<text x="399.5" y="1031.8" font-size="13.89" text-anchor="middle" textLength="34.5" lengthAdjust="spacingAndGlyphs">5000</text>
<text x="636.1" y="1031.8" font-size="13.89" text-anchor="middle" textLength="43.4" lengthAdjust="spacingAndGlyphs">10000</text>
<text x="872.7" y="1031.8" font-size="13.89" text-anchor="middle" textLength="43.4" lengthAdjust="spacingAndGlyphs">15000</text>
<text x="1109.3" y="1031.8" font-size="13.89" text-anchor="middle" textLength="43.2" lengthAdjust="spacingAndGlyphs">20000</text>
<text x="1345.9" y="1031.8" font-size="13.89" text-anchor="middle" textLength="43.2" lengthAdjust="spacingAndGlyphs">25000</text>
<path d="M162.5 1011.5v4.9 M399.5 1011.5v4.9 M636.5 1011.5v4.9 M872.5 1011.5v4.9 M1109.5 1011.5v4.9 M1345.5 1011.5v4.9" stroke="#000" stroke-width="1.1"/>
<text x="95" y="768.9" font-size="13.89" text-anchor="end" textLength="78.8" lengthAdjust="spacingAndGlyphs">not Kalman</text>
<text x="95" y="807" font-size="13.89" text-anchor="end" textLength="62.2" lengthAdjust="spacingAndGlyphs">not track</text>
<text x="95" y="845.2" font-size="13.89" text-anchor="end" textLength="57.1" lengthAdjust="spacingAndGlyphs">Ion. rad.</text>
<text x="95" y="883.3" font-size="13.89" text-anchor="end" textLength="43.2" lengthAdjust="spacingAndGlyphs">dr &gt; 5</text>
<text x="95" y="921.4" font-size="13.89" text-anchor="end" textLength="79.9" lengthAdjust="spacingAndGlyphs">OBS not OK</text>
<path d="M105.5 763.5h-4.9 M105.5 801.5h-4.9 M105.5 839.5h-4.9 M105.5 877.5h-4.9 M105.5 916.5h-4.9" stroke="#000" stroke-width="1.1"/>
<text x="95" y="1014.8" font-size="13.89" text-anchor="end" textLength="8.2" lengthAdjust="spacingAndGlyphs">0</text>
<text x="95" y="988.8" font-size="13.89" text-anchor="end" textLength="8.2" lengthAdjust="spacingAndGlyphs">5</text>
<text x="95" y="962.8" font-size="13.89" text-anchor="end" textLength="17.1" lengthAdjust="spacingAndGlyphs">10</text>
<path d="M105.5 1009.5h-4.9 M105.5 983.5h-4.9 M105.5 957.5h-4.9 M105.5 996.5h-2.8 M105.5 970.5h-2.8" stroke="#000" stroke-width="1.1"/>
<text x="0" y="0" font-size="13.89" text-anchor="middle" textLength="14.5" lengthAdjust="spacingAndGlyphs" transform="translate(69 983.7) rotate(-90)">dr</text></svg></body></html>
